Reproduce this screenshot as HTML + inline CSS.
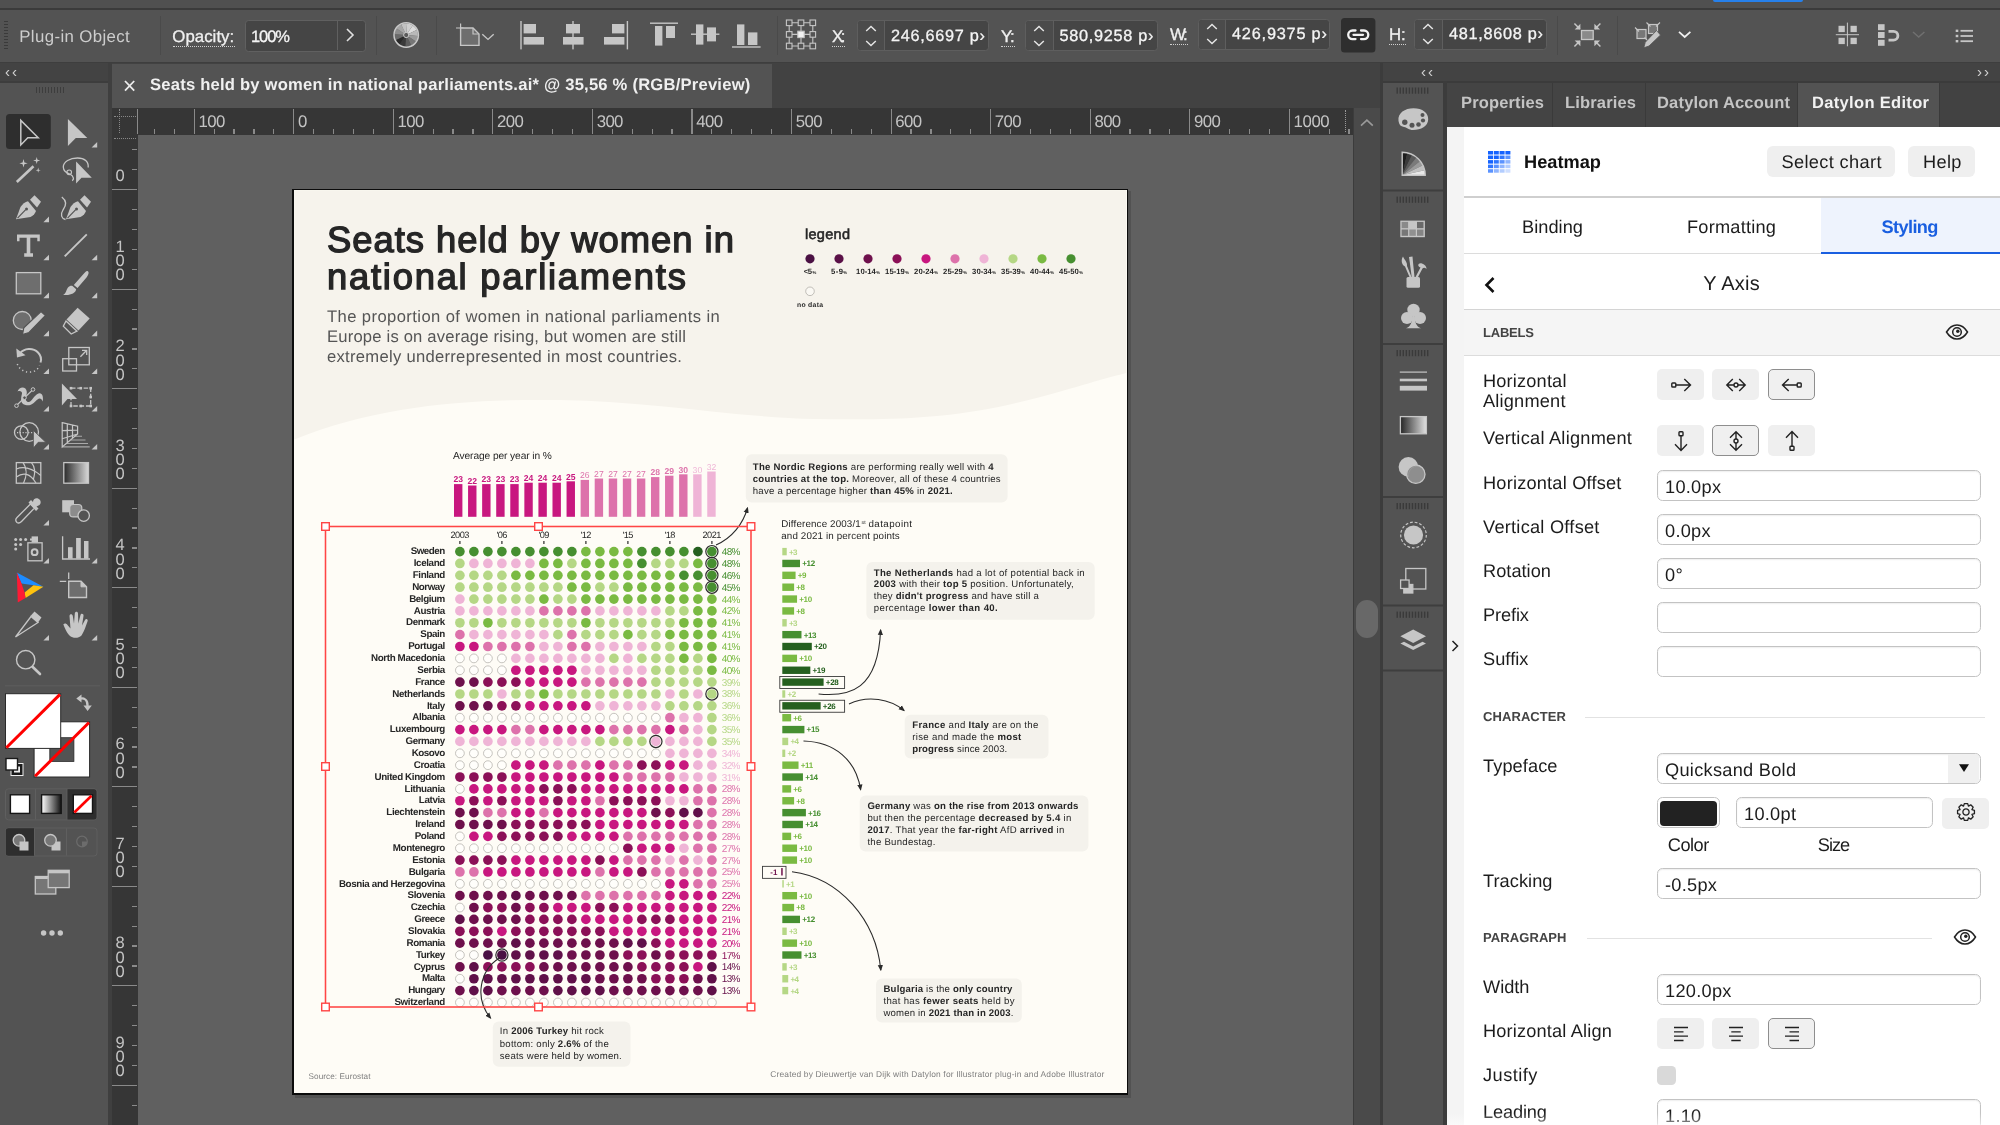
<!DOCTYPE html>
<html><head><meta charset="utf-8"><title>Illustrator</title>
<style>
html,body{margin:0;padding:0;background:#535353;}
body{width:2000px;height:1125px;position:relative;overflow:hidden;font-family:"Liberation Sans",sans-serif;text-rendering:geometricPrecision;}
#root{position:absolute;left:0;top:0;width:2000px;height:1125px;overflow:hidden;will-change:transform;transform:translateZ(0);}
.t{position:absolute;white-space:nowrap;}
.b{position:absolute;box-sizing:border-box;}
svg{overflow:visible;}
</style></head><body><div id="root">
<div class="b" style="left:0.00px;top:0.00px;width:2000.00px;height:9.00px;background:#505050;"></div>
<div class="b" style="left:0.00px;top:8.00px;width:2000.00px;height:2.00px;background:#3b3b3b;"></div>
<div class="b" style="left:0.00px;top:10.00px;width:2000.00px;height:52.00px;background:#535353;"></div>
<div class="b" style="left:0.00px;top:62.00px;width:2000.00px;height:1.00px;background:#3e3e3e;"></div>
<div class="b" style="left:1713.00px;top:0.00px;width:90.00px;height:2.00px;background:#2680eb;border-radius:0 0 2px 2px;"></div>
<div class="b" style="left:0.00px;top:63.00px;width:108.00px;height:1062.00px;background:#535353;"></div>
<div class="b" style="left:0.00px;top:62.50px;width:108.00px;height:18.60px;background:#434343;"></div>
<div class="b" style="left:0.00px;top:81.00px;width:108.00px;height:1.70px;background:#3d3d3d;"></div>
<div class="b" style="left:107.80px;top:63.00px;width:4.20px;height:1062.00px;background:#3f3f3f;"></div>
<div class="t" style="left:5.00px;top:65px;font-size:15.0px;line-height:15.0px;color:#d0d0d0;letter-spacing:2.009px;">‹‹</div>
<div class="b" style="left:36.00px;top:87.00px;width:30.00px;height:6.00px;background:repeating-linear-gradient(90deg,#3d3d3d 0 1.5px,transparent 1.5px 3px);"></div>
<div class="b" style="left:112.00px;top:63.00px;width:1269.00px;height:45.00px;background:#424242;"></div>
<div class="b" style="left:112.00px;top:64.00px;width:660.00px;height:44.00px;background:#535353;"></div>
<svg class="b" style="left:120px;top:76px" width="20" height="20"><path d="M5 5 L14.2 14.6 M14.2 5 L5 14.600" stroke="#ececec" stroke-width="1.8" fill="none"/></svg>
<div class="t" style="left:150.00px;top:77px;font-size:16.6px;line-height:16.6px;color:#f0f0f0;font-weight:bold;letter-spacing:0.216px;">Seats held by women in national parliaments.ai* @ 35,56 % (RGB/Preview)</div>
<div class="b" style="left:112.00px;top:108.20px;width:1241.00px;height:26.80px;background:#363636;"></div>
<div class="b" style="left:112.00px;top:135.00px;width:25.60px;height:990.00px;background:#363636;"></div>
<div class="b" style="left:137.60px;top:135.00px;width:1215.40px;height:990.00px;background:#606060;"></div>
<div class="b" style="left:114.00px;top:116.00px;width:22.00px;height:1.00px;border-top:1px dotted #888;"></div>
<div class="b" style="left:119.00px;top:109.00px;width:1.00px;height:24.00px;border-left:1px dotted #888;"></div>
<div class="b" style="left:114.00px;top:138.00px;width:22.00px;height:1.00px;border-top:1px dotted #888;"></div>
<div class="b" style="left:193.65px;top:109.20px;width:1.20px;height:25.30px;background:#8a8a8a;"></div>
<div class="t" style="left:198.45px;top:114px;font-size:16.8px;line-height:16.8px;color:#c4c4c4;letter-spacing:-0.591px;">100</div>
<div class="b" style="left:293.20px;top:109.20px;width:1.20px;height:25.30px;background:#8a8a8a;"></div>
<div class="t" style="left:298.00px;top:114px;font-size:16.8px;line-height:16.8px;color:#c4c4c4;">0</div>
<div class="b" style="left:392.75px;top:109.20px;width:1.20px;height:25.30px;background:#8a8a8a;"></div>
<div class="t" style="left:397.55px;top:114px;font-size:16.8px;line-height:16.8px;color:#c4c4c4;letter-spacing:-0.591px;">100</div>
<div class="b" style="left:492.30px;top:109.20px;width:1.20px;height:25.30px;background:#8a8a8a;"></div>
<div class="t" style="left:497.10px;top:114px;font-size:16.8px;line-height:16.8px;color:#c4c4c4;letter-spacing:-0.591px;">200</div>
<div class="b" style="left:591.85px;top:109.20px;width:1.20px;height:25.30px;background:#8a8a8a;"></div>
<div class="t" style="left:596.65px;top:114px;font-size:16.8px;line-height:16.8px;color:#c4c4c4;letter-spacing:-0.591px;">300</div>
<div class="b" style="left:691.40px;top:109.20px;width:1.20px;height:25.30px;background:#8a8a8a;"></div>
<div class="t" style="left:696.20px;top:114px;font-size:16.8px;line-height:16.8px;color:#c4c4c4;letter-spacing:-0.591px;">400</div>
<div class="b" style="left:790.95px;top:109.20px;width:1.20px;height:25.30px;background:#8a8a8a;"></div>
<div class="t" style="left:795.75px;top:114px;font-size:16.8px;line-height:16.8px;color:#c4c4c4;letter-spacing:-0.591px;">500</div>
<div class="b" style="left:890.50px;top:109.20px;width:1.20px;height:25.30px;background:#8a8a8a;"></div>
<div class="t" style="left:895.30px;top:114px;font-size:16.8px;line-height:16.8px;color:#c4c4c4;letter-spacing:-0.591px;">600</div>
<div class="b" style="left:990.05px;top:109.20px;width:1.20px;height:25.30px;background:#8a8a8a;"></div>
<div class="t" style="left:994.85px;top:114px;font-size:16.8px;line-height:16.8px;color:#c4c4c4;letter-spacing:-0.591px;">700</div>
<div class="b" style="left:1089.60px;top:109.20px;width:1.20px;height:25.30px;background:#8a8a8a;"></div>
<div class="t" style="left:1094.40px;top:114px;font-size:16.8px;line-height:16.8px;color:#c4c4c4;letter-spacing:-0.591px;">800</div>
<div class="b" style="left:1189.15px;top:109.20px;width:1.20px;height:25.30px;background:#8a8a8a;"></div>
<div class="t" style="left:1193.95px;top:114px;font-size:16.8px;line-height:16.8px;color:#c4c4c4;letter-spacing:-0.591px;">900</div>
<div class="b" style="left:1288.70px;top:109.20px;width:1.20px;height:25.30px;background:#8a8a8a;"></div>
<div class="t" style="left:1293.50px;top:114px;font-size:16.8px;line-height:16.8px;color:#c4c4c4;letter-spacing:-0.392px;">1000</div>
<div class="b" style="left:153.83px;top:129.20px;width:1.20px;height:5.30px;background:#8a8a8a;"></div>
<div class="b" style="left:173.74px;top:129.20px;width:1.20px;height:5.30px;background:#8a8a8a;"></div>
<div class="b" style="left:213.56px;top:129.20px;width:1.20px;height:5.30px;background:#8a8a8a;"></div>
<div class="b" style="left:233.47px;top:129.20px;width:1.20px;height:5.30px;background:#8a8a8a;"></div>
<div class="b" style="left:253.38px;top:129.20px;width:1.20px;height:5.30px;background:#8a8a8a;"></div>
<div class="b" style="left:273.29px;top:129.20px;width:1.20px;height:5.30px;background:#8a8a8a;"></div>
<div class="b" style="left:313.11px;top:129.20px;width:1.20px;height:5.30px;background:#8a8a8a;"></div>
<div class="b" style="left:333.02px;top:129.20px;width:1.20px;height:5.30px;background:#8a8a8a;"></div>
<div class="b" style="left:352.93px;top:129.20px;width:1.20px;height:5.30px;background:#8a8a8a;"></div>
<div class="b" style="left:372.84px;top:129.20px;width:1.20px;height:5.30px;background:#8a8a8a;"></div>
<div class="b" style="left:412.66px;top:129.20px;width:1.20px;height:5.30px;background:#8a8a8a;"></div>
<div class="b" style="left:432.57px;top:129.20px;width:1.20px;height:5.30px;background:#8a8a8a;"></div>
<div class="b" style="left:452.48px;top:129.20px;width:1.20px;height:5.30px;background:#8a8a8a;"></div>
<div class="b" style="left:472.39px;top:129.20px;width:1.20px;height:5.30px;background:#8a8a8a;"></div>
<div class="b" style="left:512.21px;top:129.20px;width:1.20px;height:5.30px;background:#8a8a8a;"></div>
<div class="b" style="left:532.12px;top:129.20px;width:1.20px;height:5.30px;background:#8a8a8a;"></div>
<div class="b" style="left:552.03px;top:129.20px;width:1.20px;height:5.30px;background:#8a8a8a;"></div>
<div class="b" style="left:571.94px;top:129.20px;width:1.20px;height:5.30px;background:#8a8a8a;"></div>
<div class="b" style="left:611.76px;top:129.20px;width:1.20px;height:5.30px;background:#8a8a8a;"></div>
<div class="b" style="left:631.67px;top:129.20px;width:1.20px;height:5.30px;background:#8a8a8a;"></div>
<div class="b" style="left:651.58px;top:129.20px;width:1.20px;height:5.30px;background:#8a8a8a;"></div>
<div class="b" style="left:671.49px;top:129.20px;width:1.20px;height:5.30px;background:#8a8a8a;"></div>
<div class="b" style="left:711.31px;top:129.20px;width:1.20px;height:5.30px;background:#8a8a8a;"></div>
<div class="b" style="left:731.22px;top:129.20px;width:1.20px;height:5.30px;background:#8a8a8a;"></div>
<div class="b" style="left:751.13px;top:129.20px;width:1.20px;height:5.30px;background:#8a8a8a;"></div>
<div class="b" style="left:771.04px;top:129.20px;width:1.20px;height:5.30px;background:#8a8a8a;"></div>
<div class="b" style="left:810.86px;top:129.20px;width:1.20px;height:5.30px;background:#8a8a8a;"></div>
<div class="b" style="left:830.77px;top:129.20px;width:1.20px;height:5.30px;background:#8a8a8a;"></div>
<div class="b" style="left:850.68px;top:129.20px;width:1.20px;height:5.30px;background:#8a8a8a;"></div>
<div class="b" style="left:870.59px;top:129.20px;width:1.20px;height:5.30px;background:#8a8a8a;"></div>
<div class="b" style="left:910.41px;top:129.20px;width:1.20px;height:5.30px;background:#8a8a8a;"></div>
<div class="b" style="left:930.32px;top:129.20px;width:1.20px;height:5.30px;background:#8a8a8a;"></div>
<div class="b" style="left:950.23px;top:129.20px;width:1.20px;height:5.30px;background:#8a8a8a;"></div>
<div class="b" style="left:970.14px;top:129.20px;width:1.20px;height:5.30px;background:#8a8a8a;"></div>
<div class="b" style="left:1009.96px;top:129.20px;width:1.20px;height:5.30px;background:#8a8a8a;"></div>
<div class="b" style="left:1029.87px;top:129.20px;width:1.20px;height:5.30px;background:#8a8a8a;"></div>
<div class="b" style="left:1049.78px;top:129.20px;width:1.20px;height:5.30px;background:#8a8a8a;"></div>
<div class="b" style="left:1069.69px;top:129.20px;width:1.20px;height:5.30px;background:#8a8a8a;"></div>
<div class="b" style="left:1109.51px;top:129.20px;width:1.20px;height:5.30px;background:#8a8a8a;"></div>
<div class="b" style="left:1129.42px;top:129.20px;width:1.20px;height:5.30px;background:#8a8a8a;"></div>
<div class="b" style="left:1149.33px;top:129.20px;width:1.20px;height:5.30px;background:#8a8a8a;"></div>
<div class="b" style="left:1169.24px;top:129.20px;width:1.20px;height:5.30px;background:#8a8a8a;"></div>
<div class="b" style="left:1209.06px;top:129.20px;width:1.20px;height:5.30px;background:#8a8a8a;"></div>
<div class="b" style="left:1228.97px;top:129.20px;width:1.20px;height:5.30px;background:#8a8a8a;"></div>
<div class="b" style="left:1248.88px;top:129.20px;width:1.20px;height:5.30px;background:#8a8a8a;"></div>
<div class="b" style="left:1268.79px;top:129.20px;width:1.20px;height:5.30px;background:#8a8a8a;"></div>
<div class="b" style="left:1308.61px;top:129.20px;width:1.20px;height:5.30px;background:#8a8a8a;"></div>
<div class="b" style="left:1328.52px;top:129.20px;width:1.20px;height:5.30px;background:#8a8a8a;"></div>
<div class="b" style="left:1348.43px;top:129.20px;width:1.20px;height:5.30px;background:#8a8a8a;"></div>
<div class="b" style="left:137.00px;top:109.00px;width:1.20px;height:25.00px;background:#8a8a8a;"></div>
<div class="b" style="left:1344.50px;top:110.00px;width:1.00px;height:22.00px;border-left:1.2px dotted #999;"></div>
<div class="b" style="left:1347.50px;top:129.20px;width:1.20px;height:5.30px;background:#8a8a8a;"></div>
<div class="b" style="left:112.00px;top:189.10px;width:25.00px;height:1.20px;background:#8a8a8a;"></div>
<div class="b" style="left:112.00px;top:288.62px;width:25.00px;height:1.20px;background:#8a8a8a;"></div>
<div class="b" style="left:112.00px;top:388.14px;width:25.00px;height:1.20px;background:#8a8a8a;"></div>
<div class="b" style="left:112.00px;top:487.66px;width:25.00px;height:1.20px;background:#8a8a8a;"></div>
<div class="b" style="left:112.00px;top:587.18px;width:25.00px;height:1.20px;background:#8a8a8a;"></div>
<div class="b" style="left:112.00px;top:686.70px;width:25.00px;height:1.20px;background:#8a8a8a;"></div>
<div class="b" style="left:112.00px;top:786.22px;width:25.00px;height:1.20px;background:#8a8a8a;"></div>
<div class="b" style="left:112.00px;top:885.74px;width:25.00px;height:1.20px;background:#8a8a8a;"></div>
<div class="b" style="left:112.00px;top:985.26px;width:25.00px;height:1.20px;background:#8a8a8a;"></div>
<div class="b" style="left:112.00px;top:1084.78px;width:25.00px;height:1.20px;background:#8a8a8a;"></div>
<div class="t" style="left:115.41px;top:168px;font-size:16.5px;line-height:16.5px;color:#c4c4c4;">0</div>
<div class="t" style="left:115.41px;top:239px;font-size:16.5px;line-height:16.5px;color:#c4c4c4;">1</div>
<div class="t" style="left:115.41px;top:253px;font-size:16.5px;line-height:16.5px;color:#c4c4c4;">0</div>
<div class="t" style="left:115.41px;top:267px;font-size:16.5px;line-height:16.5px;color:#c4c4c4;">0</div>
<div class="t" style="left:115.41px;top:338px;font-size:16.5px;line-height:16.5px;color:#c4c4c4;">2</div>
<div class="t" style="left:115.41px;top:353px;font-size:16.5px;line-height:16.5px;color:#c4c4c4;">0</div>
<div class="t" style="left:115.41px;top:367px;font-size:16.5px;line-height:16.5px;color:#c4c4c4;">0</div>
<div class="t" style="left:115.41px;top:438px;font-size:16.5px;line-height:16.5px;color:#c4c4c4;">3</div>
<div class="t" style="left:115.41px;top:452px;font-size:16.5px;line-height:16.5px;color:#c4c4c4;">0</div>
<div class="t" style="left:115.41px;top:466px;font-size:16.5px;line-height:16.5px;color:#c4c4c4;">0</div>
<div class="t" style="left:115.41px;top:537px;font-size:16.5px;line-height:16.5px;color:#c4c4c4;">4</div>
<div class="t" style="left:115.41px;top:552px;font-size:16.5px;line-height:16.5px;color:#c4c4c4;">0</div>
<div class="t" style="left:115.41px;top:566px;font-size:16.5px;line-height:16.5px;color:#c4c4c4;">0</div>
<div class="t" style="left:115.41px;top:637px;font-size:16.5px;line-height:16.5px;color:#c4c4c4;">5</div>
<div class="t" style="left:115.41px;top:651px;font-size:16.5px;line-height:16.5px;color:#c4c4c4;">0</div>
<div class="t" style="left:115.41px;top:665px;font-size:16.5px;line-height:16.5px;color:#c4c4c4;">0</div>
<div class="t" style="left:115.41px;top:736px;font-size:16.5px;line-height:16.5px;color:#c4c4c4;">6</div>
<div class="t" style="left:115.41px;top:751px;font-size:16.5px;line-height:16.5px;color:#c4c4c4;">0</div>
<div class="t" style="left:115.41px;top:765px;font-size:16.5px;line-height:16.5px;color:#c4c4c4;">0</div>
<div class="t" style="left:115.41px;top:836px;font-size:16.5px;line-height:16.5px;color:#c4c4c4;">7</div>
<div class="t" style="left:115.41px;top:850px;font-size:16.5px;line-height:16.5px;color:#c4c4c4;">0</div>
<div class="t" style="left:115.41px;top:864px;font-size:16.5px;line-height:16.5px;color:#c4c4c4;">0</div>
<div class="t" style="left:115.41px;top:935px;font-size:16.5px;line-height:16.5px;color:#c4c4c4;">8</div>
<div class="t" style="left:115.41px;top:950px;font-size:16.5px;line-height:16.5px;color:#c4c4c4;">0</div>
<div class="t" style="left:115.41px;top:964px;font-size:16.5px;line-height:16.5px;color:#c4c4c4;">0</div>
<div class="t" style="left:115.41px;top:1035px;font-size:16.5px;line-height:16.5px;color:#c4c4c4;">9</div>
<div class="t" style="left:115.41px;top:1049px;font-size:16.5px;line-height:16.5px;color:#c4c4c4;">0</div>
<div class="t" style="left:115.41px;top:1063px;font-size:16.5px;line-height:16.5px;color:#c4c4c4;">0</div>
<div class="b" style="left:132.00px;top:149.29px;width:5.00px;height:1.20px;background:#8a8a8a;"></div>
<div class="b" style="left:132.00px;top:169.20px;width:5.00px;height:1.20px;background:#8a8a8a;"></div>
<div class="b" style="left:132.00px;top:209.00px;width:5.00px;height:1.20px;background:#8a8a8a;"></div>
<div class="b" style="left:132.00px;top:228.91px;width:5.00px;height:1.20px;background:#8a8a8a;"></div>
<div class="b" style="left:132.00px;top:248.81px;width:5.00px;height:1.20px;background:#8a8a8a;"></div>
<div class="b" style="left:132.00px;top:268.72px;width:5.00px;height:1.20px;background:#8a8a8a;"></div>
<div class="b" style="left:132.00px;top:308.52px;width:5.00px;height:1.20px;background:#8a8a8a;"></div>
<div class="b" style="left:132.00px;top:328.43px;width:5.00px;height:1.20px;background:#8a8a8a;"></div>
<div class="b" style="left:132.00px;top:348.33px;width:5.00px;height:1.20px;background:#8a8a8a;"></div>
<div class="b" style="left:132.00px;top:368.24px;width:5.00px;height:1.20px;background:#8a8a8a;"></div>
<div class="b" style="left:132.00px;top:408.04px;width:5.00px;height:1.20px;background:#8a8a8a;"></div>
<div class="b" style="left:132.00px;top:427.95px;width:5.00px;height:1.20px;background:#8a8a8a;"></div>
<div class="b" style="left:132.00px;top:447.85px;width:5.00px;height:1.20px;background:#8a8a8a;"></div>
<div class="b" style="left:132.00px;top:467.76px;width:5.00px;height:1.20px;background:#8a8a8a;"></div>
<div class="b" style="left:132.00px;top:507.56px;width:5.00px;height:1.20px;background:#8a8a8a;"></div>
<div class="b" style="left:132.00px;top:527.47px;width:5.00px;height:1.20px;background:#8a8a8a;"></div>
<div class="b" style="left:132.00px;top:547.37px;width:5.00px;height:1.20px;background:#8a8a8a;"></div>
<div class="b" style="left:132.00px;top:567.28px;width:5.00px;height:1.20px;background:#8a8a8a;"></div>
<div class="b" style="left:132.00px;top:607.08px;width:5.00px;height:1.20px;background:#8a8a8a;"></div>
<div class="b" style="left:132.00px;top:626.99px;width:5.00px;height:1.20px;background:#8a8a8a;"></div>
<div class="b" style="left:132.00px;top:646.89px;width:5.00px;height:1.20px;background:#8a8a8a;"></div>
<div class="b" style="left:132.00px;top:666.80px;width:5.00px;height:1.20px;background:#8a8a8a;"></div>
<div class="b" style="left:132.00px;top:706.60px;width:5.00px;height:1.20px;background:#8a8a8a;"></div>
<div class="b" style="left:132.00px;top:726.51px;width:5.00px;height:1.20px;background:#8a8a8a;"></div>
<div class="b" style="left:132.00px;top:746.41px;width:5.00px;height:1.20px;background:#8a8a8a;"></div>
<div class="b" style="left:132.00px;top:766.32px;width:5.00px;height:1.20px;background:#8a8a8a;"></div>
<div class="b" style="left:132.00px;top:806.12px;width:5.00px;height:1.20px;background:#8a8a8a;"></div>
<div class="b" style="left:132.00px;top:826.03px;width:5.00px;height:1.20px;background:#8a8a8a;"></div>
<div class="b" style="left:132.00px;top:845.93px;width:5.00px;height:1.20px;background:#8a8a8a;"></div>
<div class="b" style="left:132.00px;top:865.84px;width:5.00px;height:1.20px;background:#8a8a8a;"></div>
<div class="b" style="left:132.00px;top:905.64px;width:5.00px;height:1.20px;background:#8a8a8a;"></div>
<div class="b" style="left:132.00px;top:925.55px;width:5.00px;height:1.20px;background:#8a8a8a;"></div>
<div class="b" style="left:132.00px;top:945.45px;width:5.00px;height:1.20px;background:#8a8a8a;"></div>
<div class="b" style="left:132.00px;top:965.36px;width:5.00px;height:1.20px;background:#8a8a8a;"></div>
<div class="b" style="left:132.00px;top:1005.16px;width:5.00px;height:1.20px;background:#8a8a8a;"></div>
<div class="b" style="left:132.00px;top:1025.07px;width:5.00px;height:1.20px;background:#8a8a8a;"></div>
<div class="b" style="left:132.00px;top:1044.97px;width:5.00px;height:1.20px;background:#8a8a8a;"></div>
<div class="b" style="left:132.00px;top:1064.88px;width:5.00px;height:1.20px;background:#8a8a8a;"></div>
<div class="b" style="left:132.00px;top:1104.68px;width:5.00px;height:1.20px;background:#8a8a8a;"></div>
<div class="b" style="left:132.00px;top:1124.59px;width:5.00px;height:1.20px;background:#8a8a8a;"></div>
<div class="b" style="left:1353.00px;top:108.00px;width:28.00px;height:1017.00px;background:#4a4a4a;"></div>
<div class="b" style="left:1353.00px;top:108.00px;width:1.00px;height:1017.00px;background:#3c3c3c;"></div>
<div class="b" style="left:1356.00px;top:600.00px;width:22.00px;height:38.00px;background:#686868;border-radius:11px;"></div>
<svg class="b" style="left:1359px;top:116px" width="16" height="12"><path d="M2 9.700 L7.900 4.200 L13.800 9.700" fill="none" stroke="#9a9a9a" stroke-width="1.6"/></svg>
<div class="b" style="left:1380.00px;top:63.00px;width:3.00px;height:1062.00px;background:#3c3c3c;"></div>
<div class="b" style="left:1383.00px;top:63.00px;width:59.50px;height:1062.00px;background:#535353;"></div>
<div class="b" style="left:1383.00px;top:63.00px;width:617.00px;height:18.30px;background:#434343;"></div>
<div class="b" style="left:1383.00px;top:81.20px;width:617.00px;height:1.60px;background:#3b3b3b;"></div>
<div class="b" style="left:1442.50px;top:81.00px;width:4.50px;height:1044.00px;background:#3c3c3c;"></div>
<div class="t" style="left:1421.00px;top:65px;font-size:15.0px;line-height:15.0px;color:#d0d0d0;letter-spacing:2.009px;">‹‹</div>
<div class="t" style="left:1977.00px;top:65px;font-size:15.0px;line-height:15.0px;color:#d0d0d0;letter-spacing:2.009px;">››</div>
<div class="b" style="left:1447.00px;top:82.80px;width:553.00px;height:44.20px;background:#424242;"></div>
<div class="b" style="left:1447.00px;top:82.80px;width:105.00px;height:44.20px;background:#444444;"></div>
<div class="b" style="left:1552.00px;top:82.80px;width:1.00px;height:44.20px;background:#3a3a3a;"></div>
<div class="b" style="left:1553.00px;top:82.80px;width:92.00px;height:44.20px;background:#444444;"></div>
<div class="b" style="left:1645.00px;top:82.80px;width:1.00px;height:44.20px;background:#3a3a3a;"></div>
<div class="b" style="left:1646.00px;top:82.80px;width:151.00px;height:44.20px;background:#444444;"></div>
<div class="b" style="left:1797.00px;top:82.80px;width:1.00px;height:44.20px;background:#3a3a3a;"></div>
<div class="b" style="left:1798.00px;top:82.80px;width:141.00px;height:44.20px;background:#535353;"></div>
<div class="b" style="left:1939.00px;top:82.80px;width:1.00px;height:44.20px;background:#3a3a3a;"></div>
<div class="t" style="left:1461.00px;top:95px;font-size:16.5px;line-height:16.5px;color:#c4c4c4;font-weight:bold;letter-spacing:0.154px;">Properties</div>
<div class="t" style="left:1565.00px;top:95px;font-size:16.5px;line-height:16.5px;color:#c4c4c4;font-weight:bold;letter-spacing:0.163px;">Libraries</div>
<div class="t" style="left:1657.00px;top:95px;font-size:16.5px;line-height:16.5px;color:#c4c4c4;font-weight:bold;letter-spacing:0.180px;">Datylon Account</div>
<div class="t" style="left:1812.00px;top:95px;font-size:16.5px;line-height:16.5px;color:#f2f2f2;font-weight:bold;letter-spacing:0.326px;">Datylon Editor</div>
<div class="b" style="left:4.00px;top:21.00px;width:4.00px;height:30.00px;background:repeating-linear-gradient(180deg,#3a3a3a 0 1.5px,transparent 1.5px 3px);"></div>
<div class="t" style="left:19.30px;top:29px;font-size:16.8px;line-height:16.8px;color:#cdcdcd;letter-spacing:0.383px;">Plug-in Object</div>
<div class="b" style="left:159.50px;top:16.00px;width:1.20px;height:39.00px;background:#4a4a4a;"></div>
<div class="b" style="left:376.00px;top:16.00px;width:1.20px;height:39.00px;background:#4a4a4a;"></div>
<div class="b" style="left:436.00px;top:16.00px;width:1.20px;height:39.00px;background:#4a4a4a;"></div>
<div class="b" style="left:776.50px;top:16.00px;width:1.20px;height:39.00px;background:#4a4a4a;"></div>
<div class="b" style="left:1557.00px;top:16.00px;width:1.20px;height:39.00px;background:#4a4a4a;"></div>
<div class="b" style="left:1616.50px;top:16.00px;width:1.20px;height:39.00px;background:#4a4a4a;"></div>
<div class="t" style="left:172.30px;top:29px;font-size:16.8px;line-height:16.8px;color:#f0f0f0;letter-spacing:0.054px;-webkit-text-stroke:0.3px #f0f0f0;">Opacity:</div>
<div class="b" style="left:172.50px;top:45.50px;width:62.00px;height:1.00px;border-top:1.2px dotted #d0d0d0;"></div>
<div class="b" style="left:244.50px;top:19.60px;width:121.00px;height:32.00px;background:#454545;border:1px solid #606060;border-radius:3.5px;"></div>
<div class="b" style="left:337.00px;top:20.50px;width:1.00px;height:29.50px;background:#606060;"></div>
<div class="t" style="left:251.00px;top:29px;font-size:16.5px;line-height:16.5px;color:#f4f4f4;letter-spacing:-1.067px;-webkit-text-stroke:0.3px #f4f4f4;">100%</div>
<svg class="b" style="left:344px;top:27px" width="12" height="16"><path d="M3 2 L9 8 L3 14" fill="none" stroke="#e0e0e0" stroke-width="1.6"/></svg>
<svg class="b" style="left:0;top:0" width="2000" height="62" viewBox="0 0 2000 62"><path d="M406.20 35.00 L412.75 25.43 A11.60 11.60 0 0 1 416.66 29.98 Z" fill="#dcdcdc"/><path d="M406.20 35.00 L416.66 29.98 A11.60 11.60 0 0 1 417.77 35.89 Z" fill="#b9b9b9"/><path d="M406.20 35.00 L417.77 35.89 A11.60 11.60 0 0 1 415.77 41.55 Z" fill="#9a9a9a"/><path d="M406.20 35.00 L415.77 41.55 A11.60 11.60 0 0 1 411.22 45.46 Z" fill="#777"/><path d="M406.20 35.00 L411.22 45.46 A11.60 11.60 0 0 1 405.31 46.57 Z" fill="#5d5d5d"/><path d="M406.20 35.00 L405.31 46.57 A11.60 11.60 0 0 1 399.65 44.57 Z" fill="#3a3a3a"/><path d="M406.20 35.00 L399.65 44.57 A11.60 11.60 0 0 1 395.74 40.02 Z" fill="#2a2a2a"/><path d="M406.20 35.00 L395.74 40.02 A11.60 11.60 0 0 1 394.63 34.11 Z" fill="#6a6a6a"/><path d="M406.20 35.00 L394.63 34.11 A11.60 11.60 0 0 1 396.63 28.45 Z" fill="#8d8d8d"/><path d="M406.20 35.00 L396.63 28.45 A11.60 11.60 0 0 1 401.18 24.54 Z" fill="#a6a6a6"/><path d="M406.20 35.00 L401.18 24.54 A11.60 11.60 0 0 1 407.09 23.43 Z" fill="#c2c2c2"/><path d="M406.20 35.00 L407.09 23.43 A11.60 11.60 0 0 1 412.75 25.43 Z" fill="#cfcfcf"/><circle cx="406.2" cy="35.0" r="12.2" fill="none" stroke="#c9c9c9" stroke-width="1.5"/><circle cx="406.2" cy="35.0" r="2.6" fill="#5a5a5a" stroke="#c9c9c9" stroke-width="1"/><path d="M460.6 23.5 V31 M456 28 H463.5" stroke="#c6c6c6" stroke-width="1.2" fill="none"/><path d="M460.6 28 H473 L479 34 V45.4 H460.6 Z" fill="#6e6e6e" stroke="#c6c6c6" stroke-width="1.4"/><path d="M473 28 V34 H479" fill="none" stroke="#c6c6c6" stroke-width="1.2"/><path d="M482.3 34.2 L488 39.4 L493.700 34.200" fill="none" stroke="#c6c6c6" stroke-width="1.4"/><rect x="520.3" y="21.0" width="1.4" height="28.4" fill="#c6c6c6"/><rect x="523.6" y="24.0" width="12.4" height="9.4" fill="#c6c6c6"/><rect x="523.6" y="37.0" width="20.4" height="7.6" fill="#c6c6c6"/><rect x="572.3" y="21.0" width="1.4" height="28.4" fill="#c6c6c6"/><rect x="566.0" y="24.0" width="14.0" height="9.4" fill="#c6c6c6"/><rect x="563.0" y="37.0" width="20.6" height="7.6" fill="#c6c6c6"/><rect x="626.7" y="21.0" width="1.4" height="28.4" fill="#c6c6c6"/><rect x="612.0" y="24.0" width="12.4" height="9.4" fill="#c6c6c6"/><rect x="604.0" y="37.0" width="20.4" height="7.6" fill="#c6c6c6"/><rect x="650.0" y="22.5" width="28.0" height="1.4" fill="#c6c6c6"/><rect x="655.0" y="26.0" width="7.4" height="19.6" fill="#c6c6c6"/><rect x="666.0" y="26.0" width="9.0" height="12.0" fill="#c6c6c6"/><rect x="691.0" y="33.5" width="28.4" height="1.4" fill="#c6c6c6"/><rect x="696.0" y="24.4" width="7.4" height="20.2" fill="#c6c6c6"/><rect x="707.0" y="27.4" width="9.0" height="14.0" fill="#c6c6c6"/><rect x="732.0" y="46.3" width="28.6" height="1.4" fill="#c6c6c6"/><rect x="737.0" y="24.4" width="7.4" height="20.6" fill="#c6c6c6"/><rect x="748.0" y="32.4" width="9.4" height="12.6" fill="#c6c6c6"/><path d="M789.2 22.8 H812.8 V46 H789.2 Z M801 22.8 V46 M789.2 34.4 H812.8" fill="none" stroke="#c6c6c6" stroke-width="1.1"/><rect x="786.4" y="20.0" width="5.6" height="5.6" fill="#535353" stroke="#c6c6c6" stroke-width="1.1"/><rect x="786.4" y="31.6" width="5.6" height="5.6" fill="#535353" stroke="#c6c6c6" stroke-width="1.1"/><rect x="786.4" y="43.2" width="5.6" height="5.6" fill="#535353" stroke="#c6c6c6" stroke-width="1.1"/><rect x="798.2" y="20.0" width="5.6" height="5.6" fill="#535353" stroke="#c6c6c6" stroke-width="1.1"/><rect x="797.8" y="31.2" width="6.4" height="6.4" fill="#f2f2f2" stroke="#c6c6c6" stroke-width="1.1"/><rect x="798.2" y="43.2" width="5.6" height="5.6" fill="#535353" stroke="#c6c6c6" stroke-width="1.1"/><rect x="810.0" y="20.0" width="5.6" height="5.6" fill="#535353" stroke="#c6c6c6" stroke-width="1.1"/><rect x="810.0" y="31.6" width="5.6" height="5.6" fill="#535353" stroke="#c6c6c6" stroke-width="1.1"/><rect x="810.0" y="43.2" width="5.6" height="5.6" fill="#535353" stroke="#c6c6c6" stroke-width="1.1"/><rect x="1341" y="18" width="34.400" height="34.400" rx="3.5" fill="#2e2e2e"/><path d="M1355.5 30.500 H1352.500 A4.300 4.300 0 0 0 1352.500 39.100 H1355.500 M1361 30.500 H1364 A4.300 4.300 0 0 1 1364 39.100 H1361 M1353.500 34.800 H1363" fill="none" stroke="#f2f2f2" stroke-width="2.3" stroke-linecap="round"/><rect x="1581.5" y="30.500" width="11.700" height="9" fill="#8a8a8a" stroke="#c6c6c6" stroke-width="1.300"/><path d="M1574.4 23.5 L1579.9 29.0" stroke="#c6c6c6" stroke-width="1.5" fill="none"/><path d="M1580.4 29.5 L1574.7 29.5 L1580.4 23.8 Z" fill="#c6c6c6"/><path d="M1600.4 23.5 L1594.9 29.0" stroke="#c6c6c6" stroke-width="1.5" fill="none"/><path d="M1594.4 29.5 L1600.1 29.5 L1594.4 23.8 Z" fill="#c6c6c6"/><path d="M1574.4 46.5 L1579.9 41.0" stroke="#c6c6c6" stroke-width="1.5" fill="none"/><path d="M1580.4 40.5 L1574.7 40.5 L1580.4 46.2 Z" fill="#c6c6c6"/><path d="M1600.4 46.5 L1594.9 41.0" stroke="#c6c6c6" stroke-width="1.5" fill="none"/><path d="M1594.4 40.5 L1600.1 40.5 L1594.4 46.2 Z" fill="#c6c6c6"/><rect x="1637" y="29.500" width="9" height="9" fill="#777" stroke="#c6c6c6" stroke-width="1.200"/><rect x="1648.5" y="24.500" width="9" height="9" fill="#777" stroke="#c6c6c6" stroke-width="1.200"/><path d="M1635 27.500 L1639 31.500 M1648 41 L1644.500 37.500 M1646.500 22.500 L1650.500 26.500 M1660 22.500 L1656 26.500" stroke="#c6c6c6" stroke-width="1.100" fill="none"/><path d="M1656.500 30.500 L1660.500 35 L1649 46 L1643.800 47.800 L1645.300 42.200 Z" fill="#c6c6c6" stroke="#535353" stroke-width="0.800"/><path d="M1679 31.800 L1684.700 37 L1690.400 31.800" fill="none" stroke="#f0f0f0" stroke-width="1.700"/><rect x="1838.5" y="25.8" width="6.3" height="6.3" fill="#c6c6c6"/><rect x="1838.5" y="37.8" width="6.3" height="6.3" fill="#c6c6c6"/><rect x="1850.5" y="25.8" width="6.3" height="6.3" fill="#c6c6c6"/><rect x="1850.5" y="37.8" width="6.3" height="6.3" fill="#c6c6c6"/><path d="M1847.400 22.600 V46.300 M1835.800 34.700 H1859" stroke="#c6c6c6" stroke-width="1" fill="none"/><rect x="1878.0" y="24.2" width="6.6" height="6.0" fill="#c6c6c6"/><rect x="1878.0" y="32.0" width="6.6" height="6.0" fill="#c6c6c6"/><rect x="1878.0" y="39.8" width="6.6" height="6.0" fill="#c6c6c6"/><path d="M1888.500 31.300 H1893.500 A4.400 4.400 0 0 1 1893.500 40.100 H1888.500" fill="none" stroke="#c6c6c6" stroke-width="2.800"/><path d="M1913 32 L1918.700 37 L1924.400 32" fill="none" stroke="#707070" stroke-width="1.500"/><rect x="1955.7" y="29.6" width="2.6" height="2.4" fill="#c6c6c6"/><rect x="1960.5" y="29.9" width="12.5" height="1.8" fill="#c6c6c6"/><rect x="1955.7" y="34.8" width="2.6" height="2.4" fill="#c6c6c6"/><rect x="1960.5" y="35.1" width="12.5" height="1.8" fill="#c6c6c6"/><rect x="1955.7" y="40.0" width="2.6" height="2.4" fill="#c6c6c6"/><rect x="1960.5" y="40.3" width="12.5" height="1.8" fill="#c6c6c6"/></svg>
<div class="t" style="left:832.00px;top:29px;font-size:16.8px;line-height:16.8px;color:#f0f0f0;letter-spacing:-2.473px;-webkit-text-stroke:0.35px #f0f0f0;">X:</div>
<div class="b" style="left:832.00px;top:45.80px;width:13.40px;height:1.00px;border-top:1.2px dotted #d0d0d0;"></div>
<div class="b" style="left:856.60px;top:20.40px;width:132.00px;height:31.00px;background:#454545;border:1px solid #5e5e5e;border-radius:3.5px;"></div>
<div class="b" style="left:857.60px;top:21.40px;width:26.80px;height:29.00px;background:#4b4b4b;border-radius:3px 0 0 3px;"></div>
<div class="b" style="left:884.40px;top:21.40px;width:1.00px;height:29.00px;background:#5e5e5e;"></div>
<svg class="b" style="left:863.5px;top:24.0px" width="14" height="24"><path d="M2.2 7 L7 2.400 L11.800 7 M2.200 17 L7 21.600 L11.800 17" fill="none" stroke="#e6e6e6" stroke-width="1.400"/></svg>
<div class="t" style="left:891.00px;top:28px;font-size:16.3px;line-height:16.3px;color:#f4f4f4;letter-spacing:0.699px;-webkit-text-stroke:0.3px #f4f4f4;">246,6697 p›</div>
<div class="t" style="left:1001.00px;top:29px;font-size:16.8px;line-height:16.8px;color:#f0f0f0;letter-spacing:-1.347px;-webkit-text-stroke:0.35px #f0f0f0;">Y:</div>
<div class="b" style="left:1001.00px;top:45.80px;width:13.60px;height:1.00px;border-top:1.2px dotted #d0d0d0;"></div>
<div class="b" style="left:1025.40px;top:20.40px;width:132.60px;height:31.00px;background:#454545;border:1px solid #5e5e5e;border-radius:3.5px;"></div>
<div class="b" style="left:1026.40px;top:21.40px;width:26.60px;height:29.00px;background:#4b4b4b;border-radius:3px 0 0 3px;"></div>
<div class="b" style="left:1053.00px;top:21.40px;width:1.00px;height:29.00px;background:#5e5e5e;"></div>
<svg class="b" style="left:1032.2px;top:24.0px" width="14" height="24"><path d="M2.2 7 L7 2.400 L11.800 7 M2.200 17 L7 21.600 L11.800 17" fill="none" stroke="#e6e6e6" stroke-width="1.400"/></svg>
<div class="t" style="left:1059.50px;top:28px;font-size:16.3px;line-height:16.3px;color:#f4f4f4;letter-spacing:0.699px;-webkit-text-stroke:0.3px #f4f4f4;">580,9258 p›</div>
<div class="t" style="left:1170.00px;top:27px;font-size:16.8px;line-height:16.8px;color:#f0f0f0;letter-spacing:-2.620px;-webkit-text-stroke:0.35px #f0f0f0;">W:</div>
<div class="b" style="left:1170.00px;top:44.20px;width:17.60px;height:1.00px;border-top:1.2px dotted #d0d0d0;"></div>
<div class="b" style="left:1197.60px;top:18.80px;width:132.80px;height:31.00px;background:#454545;border:1px solid #5e5e5e;border-radius:3.5px;"></div>
<div class="b" style="left:1198.60px;top:19.80px;width:26.80px;height:29.00px;background:#4b4b4b;border-radius:3px 0 0 3px;"></div>
<div class="b" style="left:1225.40px;top:19.80px;width:1.00px;height:29.00px;background:#5e5e5e;"></div>
<svg class="b" style="left:1204.5px;top:22.4px" width="14" height="24"><path d="M2.2 7 L7 2.400 L11.800 7 M2.200 17 L7 21.600 L11.800 17" fill="none" stroke="#e6e6e6" stroke-width="1.400"/></svg>
<div class="t" style="left:1232.00px;top:26px;font-size:16.3px;line-height:16.3px;color:#f4f4f4;letter-spacing:0.799px;-webkit-text-stroke:0.3px #f4f4f4;">426,9375 p›</div>
<div class="t" style="left:1389.00px;top:27px;font-size:16.8px;line-height:16.8px;color:#f0f0f0;letter-spacing:-0.200px;-webkit-text-stroke:0.35px #f0f0f0;">H:</div>
<div class="b" style="left:1389.00px;top:44.20px;width:16.60px;height:1.00px;border-top:1.2px dotted #d0d0d0;"></div>
<div class="b" style="left:1414.00px;top:18.80px;width:133.40px;height:31.00px;background:#454545;border:1px solid #5e5e5e;border-radius:3.5px;"></div>
<div class="b" style="left:1415.00px;top:19.80px;width:27.00px;height:29.00px;background:#4b4b4b;border-radius:3px 0 0 3px;"></div>
<div class="b" style="left:1442.00px;top:19.80px;width:1.00px;height:29.00px;background:#5e5e5e;"></div>
<svg class="b" style="left:1421.0px;top:22.4px" width="14" height="24"><path d="M2.2 7 L7 2.400 L11.800 7 M2.200 17 L7 21.600 L11.800 17" fill="none" stroke="#e6e6e6" stroke-width="1.400"/></svg>
<div class="t" style="left:1449.00px;top:26px;font-size:16.3px;line-height:16.3px;color:#f4f4f4;letter-spacing:0.699px;-webkit-text-stroke:0.3px #f4f4f4;">481,8608 p›</div>
<svg class="b" style="left:0;top:0" width="110" height="1000" viewBox="0 0 110 1000"><rect x="6" y="114" width="44.800" height="35" rx="3.5" fill="#2e2e2e"/><path d="M20.800 120.400 V145 L27.800 137.800 H38.200 Z" fill="none" stroke="#c6c6c6" stroke-width="1.500" stroke-linejoin="miter"/><path d="M67.900 119 V146 L75.800 138 H87.300 Z" fill="#c6c6c6"/><path d="M97.2 147.6 L97.2 142.0 L91.6 147.6 Z" fill="#c6c6c6"/><path d="M16.800 182 L33.500 166.300" stroke="#c6c6c6" stroke-width="2.600" fill="none" stroke-linecap="butt"/><path d="M23.50 159.10 L24.42 162.38 L27.70 163.30 L24.42 164.22 L23.50 167.50 L22.58 164.22 L19.30 163.30 L22.58 162.38 Z" fill="#c6c6c6"/><path d="M36.70 156.90 L37.49 159.71 L40.30 160.50 L37.49 161.29 L36.70 164.10 L35.91 161.29 L33.10 160.50 L35.91 159.71 Z" fill="#c6c6c6"/><path d="M38.20 167.60 L38.77 169.63 L40.80 170.20 L38.77 170.77 L38.20 172.80 L37.63 170.77 L35.60 170.20 L37.63 169.63 Z" fill="#c6c6c6"/><path d="M76.100 161.400 V183.400 L81.500 177.700 H91.800 Z" fill="#c6c6c6"/><path d="M72 180.500 C74.500 180 73.500 176 70.500 174.500 C66 172.500 63.300 171 63.300 167 C63.300 161.500 70 158 77.500 158 C84.500 158 88.800 161.500 88.200 167.500" fill="none" stroke="#c6c6c6" stroke-width="1.300"/><circle cx="69.200" cy="172.300" r="2.300" fill="none" stroke="#c6c6c6" stroke-width="1.100"/><path d="M16.0 219.300 L20.5 207 C22.5 204 25.0 202 28.0 201.300 L36.0 211 C35.0 213.500 33.5 215.500 30.5 217 Z" fill="#c6c6c6"/><path d="M17.5 218.200 L25.5 209.800" stroke="#535353" stroke-width="1.200"/><circle cx="26.5" cy="209" r="1.500" fill="#535353"/><path d="M30.0 199.800 L34.5 195.300 L41.0 201.800 L37.0 207.500 Z" fill="#c6c6c6"/><path d="M49.0 222.2 L49.0 216.6 L43.4 222.2 Z" fill="#c6c6c6"/><path d="M66.0 219.300 L70.5 207 C72.5 204 75.0 202 78.0 201.300 L86.0 211 C85.0 213.500 83.5 215.500 80.5 217 Z" fill="#c6c6c6"/><path d="M67.5 218.200 L75.5 209.800" stroke="#535353" stroke-width="1.200"/><circle cx="76.5" cy="209" r="1.500" fill="#535353"/><path d="M80.0 199.800 L84.5 195.300 L91.0 201.800 L87.0 207.500 Z" fill="#c6c6c6"/><path d="M61.800 197 C67 201 66 206 63 210 C60 214.500 61.500 218.500 65.500 219.500" fill="none" stroke="#c6c6c6" stroke-width="1.300"/><path d="M17 234.600 H39.800 V241.300 H37.300 V237.800 H30.300 V253.200 H33 V256.700 H24.200 V253.200 H26.700 V237.800 H19.500 V241.300 H17 Z" fill="#c6c6c6"/><path d="M49.0 260.3 L49.0 254.7 L43.4 260.3 Z" fill="#c6c6c6"/><path d="M64.700 256.300 L86.800 234.400" stroke="#c6c6c6" stroke-width="1.900"/><path d="M97.2 260.3 L97.2 254.7 L91.6 260.3 Z" fill="#c6c6c6"/><rect x="16.300" y="272.600" width="24.500" height="21.200" fill="#6e6e6e" stroke="#c6c6c6" stroke-width="1.300"/><path d="M49.0 298.2 L49.0 292.6 L43.4 298.2 Z" fill="#c6c6c6"/><path d="M87.500 271 C89.500 272 88.500 275 86.500 277.500 L77.500 288 L73.800 285 L83.500 274 C85 272 86.500 270.500 87.500 271 Z" fill="#c6c6c6"/><path d="M72.800 286.200 L76.200 289.300 C75.500 293.500 70 295.800 63 294.800 C66.500 293.500 66 290 68 287.500 C69.500 285.800 71.500 285.500 72.800 286.200 Z" fill="#c6c6c6"/><path d="M97.2 298.2 L97.2 292.6 L91.6 298.2 Z" fill="#c6c6c6"/><circle cx="22.300" cy="320.500" r="9" fill="#6e6e6e" stroke="#c6c6c6" stroke-width="1.300"/><path d="M41 311.500 L45.500 315.500 L29 332.500 L22.500 334.500 L23.800 327.800 Z" fill="#c6c6c6" stroke="#535353" stroke-width="1.200"/><path d="M49.0 336.2 L49.0 330.6 L43.4 336.2 Z" fill="#c6c6c6"/><path d="M77.600 307.700 L89.700 318.600 L78.500 330.500 L66.500 319.500 Z" fill="#c6c6c6"/><path d="M66 321 L77 331.200 L71.200 334 L63.300 326.200 Z" fill="none" stroke="#c6c6c6" stroke-width="1.300"/><path d="M97.2 336.2 L97.2 330.6 L91.6 336.2 Z" fill="#c6c6c6"/><path d="M20 353.500 C24 348 33 347.500 38 352.500 C41 355.500 41.500 359.500 40.500 362.500" fill="none" stroke="#c6c6c6" stroke-width="2"/><path d="M16.300 348.500 L17 357.500 L25.500 355.300 Z" fill="#c6c6c6"/><path d="M17.300 364 C19.500 370.500 27 373.500 33.500 371.500 C36.500 370.500 38.500 368 39.500 365.500" fill="none" stroke="#c6c6c6" stroke-width="1.500" stroke-dasharray="1.200 2.800"/><path d="M49.0 374.0 L49.0 368.4 L43.4 374.0 Z" fill="#c6c6c6"/><rect x="68.800" y="347.500" width="20.500" height="17.300" fill="none" stroke="#c6c6c6" stroke-width="1.300"/><rect x="62.700" y="358.700" width="13.800" height="12.300" fill="none" stroke="#c6c6c6" stroke-width="1.300"/><path d="M80.400 356.800 L86 351" stroke="#c6c6c6" stroke-width="1.300"/><path d="M82 350.300 H86.700 V355" fill="none" stroke="#c6c6c6" stroke-width="1.300"/><path d="M97.2 374.0 L97.2 368.4 L91.6 374.0 Z" fill="#c6c6c6"/><path d="M17.500 391.500 C19.500 386 26.500 386.500 26.800 392 C27 396 24 399 27 401.500 C31 404.500 33.500 395 38.500 393.500 C42.500 392.500 43.500 397 42.800 401.500 C41.500 399 40 397.500 37.500 399.500 C34.500 402 31.500 406.500 25.500 405 C19 403.500 21.500 396.500 22 393.500 C22.300 391.500 20 390.500 17.500 391.500 Z" fill="#c6c6c6"/><path d="M16.500 405.500 L33 389.500" stroke="#c6c6c6" stroke-width="1.100"/><circle cx="16.500" cy="405.700" r="1.800" fill="#535353" stroke="#c6c6c6" stroke-width="1"/><circle cx="33" cy="389.500" r="1.800" fill="#535353" stroke="#c6c6c6" stroke-width="1"/><circle cx="24.500" cy="397.700" r="1.800" fill="#535353" stroke="#c6c6c6" stroke-width="1"/><path d="M49.0 411.6 L49.0 406.0 L43.4 411.6 Z" fill="#c6c6c6"/><path d="M61.900 383.500 V405.500 L67.500 399 H77 Z" fill="#c6c6c6"/><path d="M71 388.200 H90.700 V406 H71 V398" fill="none" stroke="#c6c6c6" stroke-width="1.300" stroke-dasharray="4.500 1.800"/><rect x="69.7" y="386.9" width="2.600" height="2.600" fill="#c6c6c6"/><rect x="79.5" y="386.9" width="2.600" height="2.600" fill="#c6c6c6"/><rect x="89.4" y="386.9" width="2.600" height="2.600" fill="#c6c6c6"/><rect x="89.4" y="395.7" width="2.600" height="2.600" fill="#c6c6c6"/><rect x="89.4" y="404.7" width="2.600" height="2.600" fill="#c6c6c6"/><rect x="79.5" y="404.7" width="2.600" height="2.600" fill="#c6c6c6"/><rect x="69.7" y="404.7" width="2.600" height="2.600" fill="#c6c6c6"/><path d="M97.2 411.6 L97.2 406.0 L91.6 411.6 Z" fill="#c6c6c6"/><circle cx="29.200" cy="432" r="9.300" fill="none" stroke="#c6c6c6" stroke-width="1.300"/><circle cx="21.300" cy="432.600" r="6.800" fill="none" stroke="#c6c6c6" stroke-width="1.300"/><path d="M17 432.600 H33" stroke="#c6c6c6" stroke-width="1.200" stroke-dasharray="1.200 1.600"/><path d="M33.400 430.500 V448 L38.200 442.300 H45.800 Z" fill="#c6c6c6" stroke="#535353" stroke-width="0.800"/><path d="M49.0 449.6 L49.0 444.0 L43.4 449.6 Z" fill="#c6c6c6"/><path d="M62.200 422.700 L77.600 426.200 V434 L62.200 446.900 Z M62.200 430.700 L77.600 430 M62.200 438.800 L77.600 434 M67.300 423.900 V442.600 M72.500 425 V438.300" fill="none" stroke="#c6c6c6" stroke-width="1.200"/><path d="M75 436.300 H82 M71 440 H85.500 M67 443.500 H88 M62.200 446.900 H89.700" fill="none" stroke="#c6c6c6" stroke-width="1.100" opacity="0.750"/><path d="M97.2 449.6 L97.2 444.0 L91.6 449.6 Z" fill="#c6c6c6"/><rect x="16.300" y="462.600" width="24.500" height="20.600" fill="none" stroke="#c6c6c6" stroke-width="1.300"/><path d="M16.300 469 C24 466 33 469 40.800 475.500 M16.300 477 C23 472 30 473 36 483 M23 462.600 C27 468 27 476 23.500 483.200 M31.500 462.600 C36 468 35 474 33.500 479" fill="none" stroke="#c6c6c6" stroke-width="1.200"/><defs><linearGradient id="tg" x1="0" x2="1" y1="0" y2="0"><stop offset="0" stop-color="#2a2a2a"/><stop offset="1" stop-color="#d8d8d8"/></linearGradient><linearGradient id="tg2" x1="0" x2="1" y1="0" y2="0"><stop offset="0" stop-color="#ffffff"/><stop offset="1" stop-color="#111"/></linearGradient></defs><rect x="63.800" y="462.600" width="24.700" height="20.600" fill="url(#tg)" stroke="#c6c6c6" stroke-width="1.300"/><path d="M17 522.500 C15.500 521 15.500 519 17 517.500 L30.500 504 L34.500 508 L21.500 521.500 C20 523 18.500 523.500 17 522.500 Z" fill="#535353" stroke="#c6c6c6" stroke-width="1.300"/><path d="M28.500 502.500 L31 500 L33 502 C33 499.500 35.500 497.500 38 498.500 C41 499.800 41.500 503 39.500 505 L36.500 506.500 L38.500 508.500 L36 511 Z" fill="#c6c6c6"/><path d="M49.0 525.6 L49.0 520.0 L43.4 525.6 Z" fill="#c6c6c6"/><rect x="62.200" y="500.200" width="11.800" height="12.100" fill="#c6c6c6"/><rect x="69.700" y="504.500" width="12.100" height="12.400" rx="3.500" fill="#8c8c8c" stroke="#c6c6c6" stroke-width="1.200"/><circle cx="83.700" cy="515.600" r="5.700" fill="#535353" stroke="#c6c6c6" stroke-width="1.300"/><rect x="27.900" y="542.800" width="14.200" height="18" fill="none" stroke="#c6c6c6" stroke-width="1.300"/><rect x="31.600" y="536.400" width="6.400" height="6" fill="#c6c6c6"/><rect x="30" y="538.500" width="3" height="2" fill="#c6c6c6"/><circle cx="34.600" cy="552.200" r="2.900" fill="none" stroke="#c6c6c6" stroke-width="2"/><circle cx="15.7" cy="539.4" r="1.500" fill="#c6c6c6"/><circle cx="20.6" cy="539.4" r="1.500" fill="#c6c6c6"/><circle cx="25.6" cy="539.4" r="1.500" fill="#c6c6c6"/><circle cx="15.7" cy="544.4" r="1.500" fill="#c6c6c6"/><circle cx="20.6" cy="544.4" r="1.500" fill="#c6c6c6"/><circle cx="15.7" cy="549.0" r="1.500" fill="#c6c6c6"/><path d="M49.0 563.6 L49.0 558.0 L43.4 563.6 Z" fill="#c6c6c6"/><path d="M62.600 536.200 V559 H90" fill="none" stroke="#c6c6c6" stroke-width="1.300"/><rect x="68" y="547.200" width="4.600" height="11.500" fill="#c6c6c6"/><rect x="76.100" y="538" width="4.700" height="20.700" fill="#c6c6c6"/><rect x="84" y="541" width="4.500" height="17.700" fill="#c6c6c6"/><path d="M97.2 563.6 L97.2 558.0 L91.6 563.6 Z" fill="#c6c6c6"/><path d="M16.800 572.500 L43.400 586.800 L33.500 585.200 L21.500 583.500 Z" fill="#1e8cff"/><path d="M43.400 586.800 L25.500 598 L24.600 592.500 L33.500 585.200 Z" fill="#ffc20e"/><path d="M16.800 572.500 L21.500 583.500 L24.600 592.500 L25.500 598 L17.800 602.400 Z" fill="#ff1a35"/><path d="M68.700 572.500 V579 M59.800 581.300 H66.200" stroke="#c6c6c6" stroke-width="1.300"/><path d="M68.700 581.300 H81 L86.500 586.800 V597.500 H68.700 Z" fill="#6e6e6e" stroke="#c6c6c6" stroke-width="1.400"/><path d="M81 581.300 V586.800 H86.500" fill="#c6c6c6" stroke="#c6c6c6" stroke-width="1"/><path d="M15.500 637 L31 616.500 L38 622.500 Z" fill="none" stroke="#c6c6c6" stroke-width="1.300"/><path d="M30.500 616 L34.500 611.500 L41.500 617.500 L38 622.500 Z" fill="#c6c6c6"/><path d="M49.0 640.6 L49.0 635.0 L43.4 640.6 Z" fill="#c6c6c6"/><path d="M70 636 C66 632 65 628 63.300 624.500 C64.500 623 66.500 623.500 67.500 625 L70.500 628.500 L69.500 616 C69.500 613.500 72.500 613.500 72.800 616 L74 623.500 L74.800 613.500 C75 611 78 611 78 613.500 L78.300 623.500 L80.500 615 C81 612.800 84 613.500 83.500 616 L82 625.500 L85 620 C86 618 88.500 619 87.500 621.500 C85.500 626.500 84.500 631 81.500 635.500 C78.500 638.500 73 638.500 70 636 Z" fill="#c6c6c6"/><path d="M97.2 640.6 L97.2 635.0 L91.6 640.6 Z" fill="#c6c6c6"/><circle cx="25.700" cy="659.700" r="9.200" fill="none" stroke="#c6c6c6" stroke-width="1.400"/><path d="M32.500 666.800 L40 674" stroke="#c6c6c6" stroke-width="2.600" stroke-linecap="round"/><rect x="5" y="685.300" width="95" height="1" fill="#5f5f5f"/><rect x="34.100" y="721.800" width="55.500" height="55.200" fill="#fff" stroke="#2a2a2a" stroke-width="1"/><rect x="49.800" y="737.700" width="24.100" height="23.700" fill="#535353" stroke="#2a2a2a" stroke-width="0.800"/><path d="M35 776.300 L89 722.500" stroke="#ff0000" stroke-width="3"/><rect x="5.500" y="693.700" width="55.200" height="54.700" fill="#fff" stroke="#2a2a2a" stroke-width="1"/><path d="M6.300 747.700 L60 694.400" stroke="#ff0000" stroke-width="3"/><path d="M79 699 C84 697 88 700 87.500 706" fill="none" stroke="#c6c6c6" stroke-width="2.200"/><path d="M76.300 698.500 L81.500 694.500 L81.500 702.500 Z M83.500 705.500 H91.800 L87.600 711 Z" fill="#c6c6c6"/><rect x="11" y="763.500" width="12" height="12" fill="#1a1a1a" stroke="#eee" stroke-width="1"/><rect x="14" y="766.500" width="6" height="6" fill="#eee"/><rect x="6" y="758.500" width="11.500" height="11.500" fill="#fff" stroke="#1a1a1a" stroke-width="1.400"/><rect x="5.500" y="788.800" width="91.500" height="31.100" rx="3" fill="none" stroke="#5f5f5f" stroke-width="1"/><path d="M35.500 789 V819.500 M67 789 V819.500" stroke="#5f5f5f" stroke-width="1"/><path d="M67.500 789.300 H94 a2.500 2.500 0 0 1 2.500 2.500 V817 a2.500 2.500 0 0 1 -2.500 2.500 H67.500 Z" fill="#2e2e2e"/><rect x="10.400" y="794.800" width="19.200" height="18.600" fill="#fff" stroke="#161616" stroke-width="1.400"/><rect x="41.600" y="794.800" width="19.600" height="18.600" fill="url(#tg2)" stroke="#161616" stroke-width="1.400"/><rect x="73.300" y="794.800" width="19.200" height="18.600" fill="#fff" stroke="#161616" stroke-width="1.400"/><path d="M74.300 812.500 L91.500 795.800" stroke="#ff0000" stroke-width="2.600"/><rect x="5.500" y="828" width="91.500" height="28" rx="3" fill="none" stroke="#5f5f5f" stroke-width="1"/><path d="M5.800 830.500 a2.500 2.500 0 0 1 2.500 -2.300 H34.300 V855.800 H8.300 a2.500 2.500 0 0 1 -2.500 -2.500 Z" fill="#2e2e2e"/><path d="M34.500 828.300 V855.700 M66.500 828.300 V855.700" stroke="#5f5f5f" stroke-width="1"/><circle cx="19" cy="840.300" r="5.800" fill="#777" stroke="#c6c6c6" stroke-width="1.300"/><rect x="19.500" y="841.500" width="9" height="9" fill="#c6c6c6"/><rect x="51.500" y="841.500" width="9" height="9" fill="#c6c6c6"/><circle cx="50.500" cy="840.300" r="5.800" fill="#777" stroke="#c6c6c6" stroke-width="1.300"/><circle cx="82" cy="841.500" r="5.300" fill="none" stroke="#6c6c6c" stroke-width="1.200"/><path d="M82 841.500 H87.300 A5.300 5.300 0 0 1 82 846.800 Z" fill="#6c6c6c"/><rect x="35.300" y="876.500" width="20.500" height="17.500" fill="#767676" stroke="#c6c6c6" stroke-width="1.300"/><rect x="48.200" y="870.300" width="21" height="17.300" fill="#767676" stroke="#c6c6c6" stroke-width="1.300"/><rect x="48.200" y="870.300" width="21" height="3" fill="#c6c6c6"/><rect x="35.300" y="876.500" width="12.500" height="2.500" fill="#c6c6c6"/><circle cx="43.6" cy="933" r="2.700" fill="#c6c6c6"/><circle cx="52.0" cy="933" r="2.700" fill="#c6c6c6"/><circle cx="60.3" cy="933" r="2.700" fill="#c6c6c6"/></svg>
<svg class="b" style="left:1379px;top:80px" width="70" height="620" viewBox="1380 80 70 620"><rect x="1384" y="189.5" width="60" height="2" fill="#3e3e3e"/><rect x="1384" y="343.0" width="60" height="2" fill="#3e3e3e"/><rect x="1384" y="496.0" width="60" height="2" fill="#3e3e3e"/><rect x="1384" y="604.5" width="60" height="2" fill="#3e3e3e"/><rect x="1384" y="669.5" width="60" height="2" fill="#3e3e3e"/><rect x="1397.50" y="87.5" width="1.400" height="6.200" fill="#3a3a3a"/><rect x="1400.55" y="87.5" width="1.400" height="6.200" fill="#3a3a3a"/><rect x="1403.60" y="87.5" width="1.400" height="6.200" fill="#3a3a3a"/><rect x="1406.65" y="87.5" width="1.400" height="6.200" fill="#3a3a3a"/><rect x="1409.70" y="87.5" width="1.400" height="6.200" fill="#3a3a3a"/><rect x="1412.75" y="87.5" width="1.400" height="6.200" fill="#3a3a3a"/><rect x="1415.80" y="87.5" width="1.400" height="6.200" fill="#3a3a3a"/><rect x="1418.85" y="87.5" width="1.400" height="6.200" fill="#3a3a3a"/><rect x="1421.90" y="87.5" width="1.400" height="6.200" fill="#3a3a3a"/><rect x="1424.95" y="87.5" width="1.400" height="6.200" fill="#3a3a3a"/><rect x="1428.00" y="87.5" width="1.400" height="6.200" fill="#3a3a3a"/><rect x="1397.50" y="196.6" width="1.400" height="6.200" fill="#3a3a3a"/><rect x="1400.55" y="196.6" width="1.400" height="6.200" fill="#3a3a3a"/><rect x="1403.60" y="196.6" width="1.400" height="6.200" fill="#3a3a3a"/><rect x="1406.65" y="196.6" width="1.400" height="6.200" fill="#3a3a3a"/><rect x="1409.70" y="196.6" width="1.400" height="6.200" fill="#3a3a3a"/><rect x="1412.75" y="196.6" width="1.400" height="6.200" fill="#3a3a3a"/><rect x="1415.80" y="196.6" width="1.400" height="6.200" fill="#3a3a3a"/><rect x="1418.85" y="196.6" width="1.400" height="6.200" fill="#3a3a3a"/><rect x="1421.90" y="196.6" width="1.400" height="6.200" fill="#3a3a3a"/><rect x="1424.95" y="196.6" width="1.400" height="6.200" fill="#3a3a3a"/><rect x="1428.00" y="196.6" width="1.400" height="6.200" fill="#3a3a3a"/><rect x="1397.50" y="350.0" width="1.400" height="6.200" fill="#3a3a3a"/><rect x="1400.55" y="350.0" width="1.400" height="6.200" fill="#3a3a3a"/><rect x="1403.60" y="350.0" width="1.400" height="6.200" fill="#3a3a3a"/><rect x="1406.65" y="350.0" width="1.400" height="6.200" fill="#3a3a3a"/><rect x="1409.70" y="350.0" width="1.400" height="6.200" fill="#3a3a3a"/><rect x="1412.75" y="350.0" width="1.400" height="6.200" fill="#3a3a3a"/><rect x="1415.80" y="350.0" width="1.400" height="6.200" fill="#3a3a3a"/><rect x="1418.85" y="350.0" width="1.400" height="6.200" fill="#3a3a3a"/><rect x="1421.90" y="350.0" width="1.400" height="6.200" fill="#3a3a3a"/><rect x="1424.95" y="350.0" width="1.400" height="6.200" fill="#3a3a3a"/><rect x="1428.00" y="350.0" width="1.400" height="6.200" fill="#3a3a3a"/><rect x="1397.50" y="503.0" width="1.400" height="6.200" fill="#3a3a3a"/><rect x="1400.55" y="503.0" width="1.400" height="6.200" fill="#3a3a3a"/><rect x="1403.60" y="503.0" width="1.400" height="6.200" fill="#3a3a3a"/><rect x="1406.65" y="503.0" width="1.400" height="6.200" fill="#3a3a3a"/><rect x="1409.70" y="503.0" width="1.400" height="6.200" fill="#3a3a3a"/><rect x="1412.75" y="503.0" width="1.400" height="6.200" fill="#3a3a3a"/><rect x="1415.80" y="503.0" width="1.400" height="6.200" fill="#3a3a3a"/><rect x="1418.85" y="503.0" width="1.400" height="6.200" fill="#3a3a3a"/><rect x="1421.90" y="503.0" width="1.400" height="6.200" fill="#3a3a3a"/><rect x="1424.95" y="503.0" width="1.400" height="6.200" fill="#3a3a3a"/><rect x="1428.00" y="503.0" width="1.400" height="6.200" fill="#3a3a3a"/><rect x="1397.50" y="611.6" width="1.400" height="6.200" fill="#3a3a3a"/><rect x="1400.55" y="611.6" width="1.400" height="6.200" fill="#3a3a3a"/><rect x="1403.60" y="611.6" width="1.400" height="6.200" fill="#3a3a3a"/><rect x="1406.65" y="611.6" width="1.400" height="6.200" fill="#3a3a3a"/><rect x="1409.70" y="611.6" width="1.400" height="6.200" fill="#3a3a3a"/><rect x="1412.75" y="611.6" width="1.400" height="6.200" fill="#3a3a3a"/><rect x="1415.80" y="611.6" width="1.400" height="6.200" fill="#3a3a3a"/><rect x="1418.85" y="611.6" width="1.400" height="6.200" fill="#3a3a3a"/><rect x="1421.90" y="611.6" width="1.400" height="6.200" fill="#3a3a3a"/><rect x="1424.95" y="611.6" width="1.400" height="6.200" fill="#3a3a3a"/><rect x="1428.00" y="611.6" width="1.400" height="6.200" fill="#3a3a3a"/><path d="M1399.500 121 C1398.500 113 1406 108.300 1414.500 108.300 C1423.500 108.300 1429.500 113 1429.200 119.500 C1429 126 1422 130 1414 130 C1409.500 130 1408.500 127.500 1405 127 C1401.500 126.500 1400 124.500 1399.500 121 Z" fill="#c6c6c6"/><circle cx="1405.8" cy="122.3" r="2.7" fill="#535353"/><circle cx="1413.0" cy="125.3" r="2.5" fill="#535353"/><circle cx="1419.5" cy="124.5" r="2.3" fill="#535353"/><circle cx="1424.0" cy="120.5" r="2.1" fill="#535353"/><circle cx="1423.5" cy="115.0" r="2.0" fill="#535353"/><path d="M1403.20 175.30 L1403.20 152.30 A23.0 23.0 0 0 1 1408.32 152.88 Z" fill="#1e1e1e"/><path d="M1403.20 175.30 L1408.32 152.88 A23.0 23.0 0 0 1 1413.18 154.58 Z" fill="#3a3a3a"/><path d="M1403.20 175.30 L1413.18 154.58 A23.0 23.0 0 0 1 1417.54 157.32 Z" fill="#5a5a5a"/><path d="M1403.20 175.30 L1417.54 157.32 A23.0 23.0 0 0 1 1421.18 160.96 Z" fill="#7a7a7a"/><path d="M1403.20 175.30 L1421.18 160.96 A23.0 23.0 0 0 1 1423.92 165.32 Z" fill="#9a9a9a"/><path d="M1403.20 175.30 L1423.92 165.32 A23.0 23.0 0 0 1 1425.62 170.18 Z" fill="#c0c0c0"/><path d="M1403.20 175.30 L1425.62 170.18 A23.0 23.0 0 0 1 1426.20 175.30 Z" fill="#e8e8e8"/><path d="M1403.20 175.30 V152.30 A23.0 23.0 0 0 1 1426.20 175.30 Z" fill="none" stroke="#c6c6c6" stroke-width="1.400"/><rect x="1401.300" y="220.600" width="24.600" height="16.600" fill="#c6c6c6"/><rect x="1402.6" y="221.9" width="6.500" height="6.300" fill="#8a8a8a"/><rect x="1410.3" y="221.9" width="6.500" height="6.300" fill="#c6c6c6"/><rect x="1418.0" y="221.9" width="6.500" height="6.300" fill="#6a6a6a"/><rect x="1402.6" y="229.5" width="6.500" height="6.300" fill="#777"/><rect x="1410.3" y="229.5" width="6.500" height="6.300" fill="#909090"/><rect x="1418.0" y="229.5" width="6.500" height="6.300" fill="#858585"/><rect x="1407.500" y="277" width="13.500" height="10.800" rx="1.500" fill="#c6c6c6"/><path d="M1410.500 277 L1406 266.500 C1401.500 264 1402.500 258.500 1404 256.500 C1405.500 260 1408.500 262 1408 266 L1412.500 277 Z" fill="#c6c6c6"/><path d="M1412.700 277 L1410.800 262.500 L1410 257 L1413.500 256.500 L1414 262.300 L1415.500 277 Z" fill="#c6c6c6"/><path d="M1416.500 277 L1421.500 267.500 C1417.500 266 1419.500 262 1423 263.500 C1426 264.500 1427.500 266.500 1427.500 269 C1426 267.500 1424.500 267.500 1423.500 268.500 L1419 277 Z" fill="#c6c6c6"/><circle cx="1414.500" cy="310" r="6.200" fill="#c6c6c6"/><circle cx="1408" cy="318" r="6" fill="#c6c6c6"/><circle cx="1421" cy="318" r="6" fill="#c6c6c6"/><path d="M1413.300 314 H1415.700 C1415.700 322 1417 326.500 1422 328.300 H1407 C1412 326.500 1413.300 322 1413.300 314 Z" fill="#c6c6c6"/><rect x="1400.800" y="371.500" width="27.200" height="1.200" fill="#c6c6c6"/><rect x="1400.800" y="378.700" width="27.200" height="2.600" fill="#c6c6c6"/><rect x="1400.800" y="385.800" width="27.200" height="4.800" fill="#c6c6c6"/><defs><linearGradient id="rg" x1="0" x2="1" y1="0" y2="0"><stop offset="0" stop-color="#262626"/><stop offset="1" stop-color="#e2e2e2"/></linearGradient></defs><rect x="1401.400" y="416.600" width="26" height="17.200" fill="url(#rg)" stroke="#c6c6c6" stroke-width="1.300"/><circle cx="1409.400" cy="466.900" r="9.800" fill="#c6c6c6"/><circle cx="1416.800" cy="474.200" r="9.200" fill="#8e8e8e" stroke="#c6c6c6" stroke-width="1.300"/><path d="M1409.500 477 C1409 470 1414 465.500 1419 466.500" fill="none" stroke="#9a9a9a" stroke-width="1"/><circle cx="1414.500" cy="535" r="9.600" fill="#c6c6c6"/><circle cx="1414.500" cy="535" r="12.800" fill="none" stroke="#c6c6c6" stroke-width="1.200" stroke-dasharray="2.800 1.900"/><rect x="1406.800" y="568.500" width="20" height="20.500" fill="none" stroke="#c6c6c6" stroke-width="1.300"/><rect x="1404.800" y="584.500" width="9" height="8.500" fill="#c6c6c6" stroke="#c6c6c6" stroke-width="1.300"/><rect x="1401.600" y="580" width="8.500" height="8.500" fill="#535353" stroke="#c6c6c6" stroke-width="1.300"/><path d="M1414.200 650 L1427 643.500 L1423.500 641.700 L1414.200 646.500 L1405 641.700 L1401.400 643.500 Z" fill="#c6c6c6"/><path d="M1414.200 629.500 L1427 636.300 L1414.200 643 L1401.400 636.300 Z" fill="#c6c6c6"/></svg>
<div class="b" style="left:294.50px;top:191.00px;width:836.00px;height:906.50px;background:#525252;"></div>
<div class="b" style="left:292.40px;top:188.60px;width:835.60px;height:906.30px;background:#0c0c0c;"></div>
<div class="b" style="left:293.80px;top:189.80px;width:832.80px;height:903.50px;background:#fefcf6;"></div>
<svg class="b" style="left:0;top:0" width="2000" height="1125" viewBox="0 0 2000 1125">
<path d="M294.2 190.3 H1126.2 V373 C1090 382 1060 393 1010 404.5 C940 420 880 420 815 419 C730 417 650 401 560 400 C470 399 380 405 294.2 439.5 Z" fill="#f6f3ec"/>
<rect x="454.00" y="484.10" width="8.4" height="32.70" fill="#c8177f"/>
<rect x="468.07" y="485.50" width="8.4" height="31.30" fill="#c8177f"/>
<rect x="482.14" y="484.10" width="8.4" height="32.70" fill="#c8177f"/>
<rect x="496.21" y="484.10" width="8.4" height="32.70" fill="#c8177f"/>
<rect x="510.28" y="484.10" width="8.4" height="32.70" fill="#c8177f"/>
<rect x="524.35" y="482.70" width="8.4" height="34.10" fill="#c8177f"/>
<rect x="538.42" y="482.70" width="8.4" height="34.10" fill="#c8177f"/>
<rect x="552.49" y="482.70" width="8.4" height="34.10" fill="#c8177f"/>
<rect x="566.56" y="481.30" width="8.4" height="35.50" fill="#c8177f"/>
<rect x="580.63" y="479.90" width="8.4" height="36.90" fill="#dd72ab"/>
<rect x="594.70" y="478.50" width="8.4" height="38.30" fill="#dd72ab"/>
<rect x="608.77" y="478.50" width="8.4" height="38.30" fill="#dd72ab"/>
<rect x="622.84" y="478.50" width="8.4" height="38.30" fill="#dd72ab"/>
<rect x="636.91" y="478.50" width="8.4" height="38.30" fill="#dd72ab"/>
<rect x="650.98" y="477.10" width="8.4" height="39.70" fill="#dd72ab"/>
<rect x="665.05" y="475.70" width="8.4" height="41.10" fill="#dd72ab"/>
<rect x="679.12" y="474.30" width="8.4" height="42.50" fill="#dd72ab"/>
<rect x="693.19" y="474.30" width="8.4" height="42.50" fill="#efb4d6"/>
<rect x="707.26" y="471.50" width="8.4" height="45.30" fill="#efb4d6"/>
<circle cx="459.90" cy="551.60" r="4.85" fill="#468f30"/>
<circle cx="473.90" cy="551.60" r="4.85" fill="#468f30"/>
<circle cx="487.90" cy="551.60" r="4.85" fill="#468f30"/>
<circle cx="501.90" cy="551.60" r="4.85" fill="#468f30"/>
<circle cx="515.90" cy="551.60" r="4.85" fill="#468f30"/>
<circle cx="529.90" cy="551.60" r="4.85" fill="#468f30"/>
<circle cx="543.90" cy="551.60" r="4.85" fill="#468f30"/>
<circle cx="557.90" cy="551.60" r="4.85" fill="#468f30"/>
<circle cx="571.90" cy="551.60" r="4.85" fill="#468f30"/>
<circle cx="585.90" cy="551.60" r="4.85" fill="#7aba42"/>
<circle cx="599.90" cy="551.60" r="4.85" fill="#7aba42"/>
<circle cx="613.90" cy="551.60" r="4.85" fill="#7aba42"/>
<circle cx="627.90" cy="551.60" r="4.85" fill="#7aba42"/>
<circle cx="641.90" cy="551.60" r="4.85" fill="#468f30"/>
<circle cx="655.90" cy="551.60" r="4.85" fill="#468f30"/>
<circle cx="669.90" cy="551.60" r="4.85" fill="#468f30"/>
<circle cx="683.90" cy="551.60" r="4.85" fill="#468f30"/>
<circle cx="697.90" cy="551.60" r="4.85" fill="#25601f"/>
<circle cx="711.90" cy="551.60" r="4.85" fill="#468f30"/>
<circle cx="459.90" cy="563.47" r="4.85" fill="#b5d785"/>
<circle cx="473.90" cy="563.47" r="4.85" fill="#efb4d6"/>
<circle cx="487.90" cy="563.47" r="4.85" fill="#efb4d6"/>
<circle cx="501.90" cy="563.47" r="4.85" fill="#efb4d6"/>
<circle cx="515.90" cy="563.47" r="4.85" fill="#efb4d6"/>
<circle cx="529.90" cy="563.47" r="4.85" fill="#efb4d6"/>
<circle cx="543.90" cy="563.47" r="4.85" fill="#7aba42"/>
<circle cx="557.90" cy="563.47" r="4.85" fill="#7aba42"/>
<circle cx="571.90" cy="563.47" r="4.85" fill="#b5d785"/>
<circle cx="585.90" cy="563.47" r="4.85" fill="#7aba42"/>
<circle cx="599.90" cy="563.47" r="4.85" fill="#7aba42"/>
<circle cx="613.90" cy="563.47" r="4.85" fill="#7aba42"/>
<circle cx="627.90" cy="563.47" r="4.85" fill="#7aba42"/>
<circle cx="641.90" cy="563.47" r="4.85" fill="#468f30"/>
<circle cx="655.90" cy="563.47" r="4.85" fill="#b5d785"/>
<circle cx="669.90" cy="563.47" r="4.85" fill="#b5d785"/>
<circle cx="683.90" cy="563.47" r="4.85" fill="#b5d785"/>
<circle cx="697.90" cy="563.47" r="4.85" fill="#7aba42"/>
<circle cx="711.90" cy="563.47" r="4.85" fill="#468f30"/>
<circle cx="459.90" cy="575.33" r="4.85" fill="#b5d785"/>
<circle cx="473.90" cy="575.33" r="4.85" fill="#b5d785"/>
<circle cx="487.90" cy="575.33" r="4.85" fill="#b5d785"/>
<circle cx="501.90" cy="575.33" r="4.85" fill="#b5d785"/>
<circle cx="515.90" cy="575.33" r="4.85" fill="#7aba42"/>
<circle cx="529.90" cy="575.33" r="4.85" fill="#7aba42"/>
<circle cx="543.90" cy="575.33" r="4.85" fill="#7aba42"/>
<circle cx="557.90" cy="575.33" r="4.85" fill="#7aba42"/>
<circle cx="571.90" cy="575.33" r="4.85" fill="#7aba42"/>
<circle cx="585.90" cy="575.33" r="4.85" fill="#7aba42"/>
<circle cx="599.90" cy="575.33" r="4.85" fill="#7aba42"/>
<circle cx="613.90" cy="575.33" r="4.85" fill="#7aba42"/>
<circle cx="627.90" cy="575.33" r="4.85" fill="#7aba42"/>
<circle cx="641.90" cy="575.33" r="4.85" fill="#7aba42"/>
<circle cx="655.90" cy="575.33" r="4.85" fill="#7aba42"/>
<circle cx="669.90" cy="575.33" r="4.85" fill="#7aba42"/>
<circle cx="683.90" cy="575.33" r="4.85" fill="#468f30"/>
<circle cx="697.90" cy="575.33" r="4.85" fill="#468f30"/>
<circle cx="711.90" cy="575.33" r="4.85" fill="#468f30"/>
<circle cx="459.90" cy="587.20" r="4.85" fill="#b5d785"/>
<circle cx="473.90" cy="587.20" r="4.85" fill="#b5d785"/>
<circle cx="487.90" cy="587.20" r="4.85" fill="#b5d785"/>
<circle cx="501.90" cy="587.20" r="4.85" fill="#b5d785"/>
<circle cx="515.90" cy="587.20" r="4.85" fill="#b5d785"/>
<circle cx="529.90" cy="587.20" r="4.85" fill="#b5d785"/>
<circle cx="543.90" cy="587.20" r="4.85" fill="#b5d785"/>
<circle cx="557.90" cy="587.20" r="4.85" fill="#b5d785"/>
<circle cx="571.90" cy="587.20" r="4.85" fill="#7aba42"/>
<circle cx="585.90" cy="587.20" r="4.85" fill="#7aba42"/>
<circle cx="599.90" cy="587.20" r="4.85" fill="#b5d785"/>
<circle cx="613.90" cy="587.20" r="4.85" fill="#b5d785"/>
<circle cx="627.90" cy="587.20" r="4.85" fill="#7aba42"/>
<circle cx="641.90" cy="587.20" r="4.85" fill="#7aba42"/>
<circle cx="655.90" cy="587.20" r="4.85" fill="#7aba42"/>
<circle cx="669.90" cy="587.20" r="4.85" fill="#7aba42"/>
<circle cx="683.90" cy="587.20" r="4.85" fill="#7aba42"/>
<circle cx="697.90" cy="587.20" r="4.85" fill="#7aba42"/>
<circle cx="711.90" cy="587.20" r="4.85" fill="#468f30"/>
<circle cx="459.90" cy="599.06" r="4.85" fill="#efb4d6"/>
<circle cx="473.90" cy="599.06" r="4.85" fill="#b5d785"/>
<circle cx="487.90" cy="599.06" r="4.85" fill="#b5d785"/>
<circle cx="501.90" cy="599.06" r="4.85" fill="#b5d785"/>
<circle cx="515.90" cy="599.06" r="4.85" fill="#b5d785"/>
<circle cx="529.90" cy="599.06" r="4.85" fill="#b5d785"/>
<circle cx="543.90" cy="599.06" r="4.85" fill="#7aba42"/>
<circle cx="557.90" cy="599.06" r="4.85" fill="#b5d785"/>
<circle cx="571.90" cy="599.06" r="4.85" fill="#b5d785"/>
<circle cx="585.90" cy="599.06" r="4.85" fill="#7aba42"/>
<circle cx="599.90" cy="599.06" r="4.85" fill="#7aba42"/>
<circle cx="613.90" cy="599.06" r="4.85" fill="#7aba42"/>
<circle cx="627.90" cy="599.06" r="4.85" fill="#7aba42"/>
<circle cx="641.90" cy="599.06" r="4.85" fill="#7aba42"/>
<circle cx="655.90" cy="599.06" r="4.85" fill="#7aba42"/>
<circle cx="669.90" cy="599.06" r="4.85" fill="#7aba42"/>
<circle cx="683.90" cy="599.06" r="4.85" fill="#7aba42"/>
<circle cx="697.90" cy="599.06" r="4.85" fill="#7aba42"/>
<circle cx="711.90" cy="599.06" r="4.85" fill="#7aba42"/>
<circle cx="459.90" cy="610.93" r="4.85" fill="#efb4d6"/>
<circle cx="473.90" cy="610.93" r="4.85" fill="#efb4d6"/>
<circle cx="487.90" cy="610.93" r="4.85" fill="#efb4d6"/>
<circle cx="501.90" cy="610.93" r="4.85" fill="#efb4d6"/>
<circle cx="515.90" cy="610.93" r="4.85" fill="#efb4d6"/>
<circle cx="529.90" cy="610.93" r="4.85" fill="#efb4d6"/>
<circle cx="543.90" cy="610.93" r="4.85" fill="#dd72ab"/>
<circle cx="557.90" cy="610.93" r="4.85" fill="#dd72ab"/>
<circle cx="571.90" cy="610.93" r="4.85" fill="#dd72ab"/>
<circle cx="585.90" cy="610.93" r="4.85" fill="#dd72ab"/>
<circle cx="599.90" cy="610.93" r="4.85" fill="#efb4d6"/>
<circle cx="613.90" cy="610.93" r="4.85" fill="#efb4d6"/>
<circle cx="627.90" cy="610.93" r="4.85" fill="#efb4d6"/>
<circle cx="641.90" cy="610.93" r="4.85" fill="#efb4d6"/>
<circle cx="655.90" cy="610.93" r="4.85" fill="#efb4d6"/>
<circle cx="669.90" cy="610.93" r="4.85" fill="#b5d785"/>
<circle cx="683.90" cy="610.93" r="4.85" fill="#b5d785"/>
<circle cx="697.90" cy="610.93" r="4.85" fill="#7aba42"/>
<circle cx="711.90" cy="610.93" r="4.85" fill="#7aba42"/>
<circle cx="459.90" cy="622.79" r="4.85" fill="#b5d785"/>
<circle cx="473.90" cy="622.79" r="4.85" fill="#b5d785"/>
<circle cx="487.90" cy="622.79" r="4.85" fill="#7aba42"/>
<circle cx="501.90" cy="622.79" r="4.85" fill="#b5d785"/>
<circle cx="515.90" cy="622.79" r="4.85" fill="#b5d785"/>
<circle cx="529.90" cy="622.79" r="4.85" fill="#b5d785"/>
<circle cx="543.90" cy="622.79" r="4.85" fill="#b5d785"/>
<circle cx="557.90" cy="622.79" r="4.85" fill="#b5d785"/>
<circle cx="571.90" cy="622.79" r="4.85" fill="#b5d785"/>
<circle cx="585.90" cy="622.79" r="4.85" fill="#7aba42"/>
<circle cx="599.90" cy="622.79" r="4.85" fill="#b5d785"/>
<circle cx="613.90" cy="622.79" r="4.85" fill="#b5d785"/>
<circle cx="627.90" cy="622.79" r="4.85" fill="#b5d785"/>
<circle cx="641.90" cy="622.79" r="4.85" fill="#b5d785"/>
<circle cx="655.90" cy="622.79" r="4.85" fill="#b5d785"/>
<circle cx="669.90" cy="622.79" r="4.85" fill="#b5d785"/>
<circle cx="683.90" cy="622.79" r="4.85" fill="#7aba42"/>
<circle cx="697.90" cy="622.79" r="4.85" fill="#7aba42"/>
<circle cx="711.90" cy="622.79" r="4.85" fill="#7aba42"/>
<circle cx="459.90" cy="634.65" r="4.85" fill="#dd72ab"/>
<circle cx="473.90" cy="634.65" r="4.85" fill="#efb4d6"/>
<circle cx="487.90" cy="634.65" r="4.85" fill="#efb4d6"/>
<circle cx="501.90" cy="634.65" r="4.85" fill="#efb4d6"/>
<circle cx="515.90" cy="634.65" r="4.85" fill="#efb4d6"/>
<circle cx="529.90" cy="634.65" r="4.85" fill="#efb4d6"/>
<circle cx="543.90" cy="634.65" r="4.85" fill="#efb4d6"/>
<circle cx="557.90" cy="634.65" r="4.85" fill="#b5d785"/>
<circle cx="571.90" cy="634.65" r="4.85" fill="#dd72ab"/>
<circle cx="585.90" cy="634.65" r="4.85" fill="#b5d785"/>
<circle cx="599.90" cy="634.65" r="4.85" fill="#b5d785"/>
<circle cx="613.90" cy="634.65" r="4.85" fill="#b5d785"/>
<circle cx="627.90" cy="634.65" r="4.85" fill="#7aba42"/>
<circle cx="641.90" cy="634.65" r="4.85" fill="#b5d785"/>
<circle cx="655.90" cy="634.65" r="4.85" fill="#b5d785"/>
<circle cx="669.90" cy="634.65" r="4.85" fill="#7aba42"/>
<circle cx="683.90" cy="634.65" r="4.85" fill="#7aba42"/>
<circle cx="697.90" cy="634.65" r="4.85" fill="#7aba42"/>
<circle cx="711.90" cy="634.65" r="4.85" fill="#7aba42"/>
<circle cx="459.90" cy="646.52" r="4.85" fill="#c8177f"/>
<circle cx="473.90" cy="646.52" r="4.85" fill="#c8177f"/>
<circle cx="487.90" cy="646.52" r="4.85" fill="#dd72ab"/>
<circle cx="501.90" cy="646.52" r="4.85" fill="#dd72ab"/>
<circle cx="515.90" cy="646.52" r="4.85" fill="#dd72ab"/>
<circle cx="529.90" cy="646.52" r="4.85" fill="#dd72ab"/>
<circle cx="543.90" cy="646.52" r="4.85" fill="#efb4d6"/>
<circle cx="557.90" cy="646.52" r="4.85" fill="#efb4d6"/>
<circle cx="571.90" cy="646.52" r="4.85" fill="#dd72ab"/>
<circle cx="585.90" cy="646.52" r="4.85" fill="#dd72ab"/>
<circle cx="599.90" cy="646.52" r="4.85" fill="#efb4d6"/>
<circle cx="613.90" cy="646.52" r="4.85" fill="#efb4d6"/>
<circle cx="627.90" cy="646.52" r="4.85" fill="#efb4d6"/>
<circle cx="641.90" cy="646.52" r="4.85" fill="#efb4d6"/>
<circle cx="655.90" cy="646.52" r="4.85" fill="#b5d785"/>
<circle cx="669.90" cy="646.52" r="4.85" fill="#b5d785"/>
<circle cx="683.90" cy="646.52" r="4.85" fill="#7aba42"/>
<circle cx="697.90" cy="646.52" r="4.85" fill="#7aba42"/>
<circle cx="711.90" cy="646.52" r="4.85" fill="#7aba42"/>
<circle cx="459.90" cy="658.38" r="4.4" fill="#fffefb" stroke="#aeaba5" stroke-width="0.7"/>
<circle cx="473.90" cy="658.38" r="4.4" fill="#fffefb" stroke="#aeaba5" stroke-width="0.7"/>
<circle cx="487.90" cy="658.38" r="4.4" fill="#fffefb" stroke="#aeaba5" stroke-width="0.7"/>
<circle cx="501.90" cy="658.38" r="4.4" fill="#fffefb" stroke="#aeaba5" stroke-width="0.7"/>
<circle cx="515.90" cy="658.38" r="4.85" fill="#efb4d6"/>
<circle cx="529.90" cy="658.38" r="4.85" fill="#efb4d6"/>
<circle cx="543.90" cy="658.38" r="4.85" fill="#efb4d6"/>
<circle cx="557.90" cy="658.38" r="4.85" fill="#efb4d6"/>
<circle cx="571.90" cy="658.38" r="4.85" fill="#efb4d6"/>
<circle cx="585.90" cy="658.38" r="4.85" fill="#efb4d6"/>
<circle cx="599.90" cy="658.38" r="4.85" fill="#efb4d6"/>
<circle cx="613.90" cy="658.38" r="4.85" fill="#b5d785"/>
<circle cx="627.90" cy="658.38" r="4.85" fill="#efb4d6"/>
<circle cx="641.90" cy="658.38" r="4.85" fill="#b5d785"/>
<circle cx="655.90" cy="658.38" r="4.85" fill="#b5d785"/>
<circle cx="669.90" cy="658.38" r="4.85" fill="#b5d785"/>
<circle cx="683.90" cy="658.38" r="4.85" fill="#7aba42"/>
<circle cx="697.90" cy="658.38" r="4.85" fill="#b5d785"/>
<circle cx="711.90" cy="658.38" r="4.85" fill="#7aba42"/>
<circle cx="459.90" cy="670.25" r="4.4" fill="#fffefb" stroke="#aeaba5" stroke-width="0.7"/>
<circle cx="473.90" cy="670.25" r="4.4" fill="#fffefb" stroke="#aeaba5" stroke-width="0.7"/>
<circle cx="487.90" cy="670.25" r="4.4" fill="#fffefb" stroke="#aeaba5" stroke-width="0.7"/>
<circle cx="501.90" cy="670.25" r="4.4" fill="#fffefb" stroke="#aeaba5" stroke-width="0.7"/>
<circle cx="515.90" cy="670.25" r="4.85" fill="#c8177f"/>
<circle cx="529.90" cy="670.25" r="4.85" fill="#c8177f"/>
<circle cx="543.90" cy="670.25" r="4.85" fill="#c8177f"/>
<circle cx="557.90" cy="670.25" r="4.85" fill="#c8177f"/>
<circle cx="571.90" cy="670.25" r="4.85" fill="#c8177f"/>
<circle cx="585.90" cy="670.25" r="4.85" fill="#efb4d6"/>
<circle cx="599.90" cy="670.25" r="4.85" fill="#efb4d6"/>
<circle cx="613.90" cy="670.25" r="4.85" fill="#efb4d6"/>
<circle cx="627.90" cy="670.25" r="4.85" fill="#efb4d6"/>
<circle cx="641.90" cy="670.25" r="4.85" fill="#efb4d6"/>
<circle cx="655.90" cy="670.25" r="4.85" fill="#b5d785"/>
<circle cx="669.90" cy="670.25" r="4.85" fill="#b5d785"/>
<circle cx="683.90" cy="670.25" r="4.85" fill="#b5d785"/>
<circle cx="697.90" cy="670.25" r="4.85" fill="#b5d785"/>
<circle cx="711.90" cy="670.25" r="4.85" fill="#7aba42"/>
<circle cx="459.90" cy="682.12" r="4.85" fill="#6e104c"/>
<circle cx="473.90" cy="682.12" r="4.85" fill="#6e104c"/>
<circle cx="487.90" cy="682.12" r="4.85" fill="#8b1057"/>
<circle cx="501.90" cy="682.12" r="4.85" fill="#8b1057"/>
<circle cx="515.90" cy="682.12" r="4.85" fill="#8b1057"/>
<circle cx="529.90" cy="682.12" r="4.85" fill="#c8177f"/>
<circle cx="543.90" cy="682.12" r="4.85" fill="#c8177f"/>
<circle cx="557.90" cy="682.12" r="4.85" fill="#c8177f"/>
<circle cx="571.90" cy="682.12" r="4.85" fill="#c8177f"/>
<circle cx="585.90" cy="682.12" r="4.85" fill="#dd72ab"/>
<circle cx="599.90" cy="682.12" r="4.85" fill="#dd72ab"/>
<circle cx="613.90" cy="682.12" r="4.85" fill="#dd72ab"/>
<circle cx="627.90" cy="682.12" r="4.85" fill="#dd72ab"/>
<circle cx="641.90" cy="682.12" r="4.85" fill="#dd72ab"/>
<circle cx="655.90" cy="682.12" r="4.85" fill="#b5d785"/>
<circle cx="669.90" cy="682.12" r="4.85" fill="#b5d785"/>
<circle cx="683.90" cy="682.12" r="4.85" fill="#b5d785"/>
<circle cx="697.90" cy="682.12" r="4.85" fill="#b5d785"/>
<circle cx="711.90" cy="682.12" r="4.85" fill="#b5d785"/>
<circle cx="459.90" cy="693.98" r="4.85" fill="#b5d785"/>
<circle cx="473.90" cy="693.98" r="4.85" fill="#b5d785"/>
<circle cx="487.90" cy="693.98" r="4.85" fill="#b5d785"/>
<circle cx="501.90" cy="693.98" r="4.85" fill="#efb4d6"/>
<circle cx="515.90" cy="693.98" r="4.85" fill="#b5d785"/>
<circle cx="529.90" cy="693.98" r="4.85" fill="#b5d785"/>
<circle cx="543.90" cy="693.98" r="4.85" fill="#7aba42"/>
<circle cx="557.90" cy="693.98" r="4.85" fill="#b5d785"/>
<circle cx="571.90" cy="693.98" r="4.85" fill="#b5d785"/>
<circle cx="585.90" cy="693.98" r="4.85" fill="#b5d785"/>
<circle cx="599.90" cy="693.98" r="4.85" fill="#b5d785"/>
<circle cx="613.90" cy="693.98" r="4.85" fill="#b5d785"/>
<circle cx="627.90" cy="693.98" r="4.85" fill="#b5d785"/>
<circle cx="641.90" cy="693.98" r="4.85" fill="#b5d785"/>
<circle cx="655.90" cy="693.98" r="4.85" fill="#b5d785"/>
<circle cx="669.90" cy="693.98" r="4.85" fill="#efb4d6"/>
<circle cx="683.90" cy="693.98" r="4.85" fill="#b5d785"/>
<circle cx="697.90" cy="693.98" r="4.85" fill="#efb4d6"/>
<circle cx="711.90" cy="693.98" r="4.85" fill="#b5d785"/>
<circle cx="459.90" cy="705.85" r="4.85" fill="#6e104c"/>
<circle cx="473.90" cy="705.85" r="4.85" fill="#6e104c"/>
<circle cx="487.90" cy="705.85" r="4.85" fill="#6e104c"/>
<circle cx="501.90" cy="705.85" r="4.85" fill="#8b1057"/>
<circle cx="515.90" cy="705.85" r="4.85" fill="#8b1057"/>
<circle cx="529.90" cy="705.85" r="4.85" fill="#c8177f"/>
<circle cx="543.90" cy="705.85" r="4.85" fill="#c8177f"/>
<circle cx="557.90" cy="705.85" r="4.85" fill="#c8177f"/>
<circle cx="571.90" cy="705.85" r="4.85" fill="#c8177f"/>
<circle cx="585.90" cy="705.85" r="4.85" fill="#c8177f"/>
<circle cx="599.90" cy="705.85" r="4.85" fill="#efb4d6"/>
<circle cx="613.90" cy="705.85" r="4.85" fill="#efb4d6"/>
<circle cx="627.90" cy="705.85" r="4.85" fill="#efb4d6"/>
<circle cx="641.90" cy="705.85" r="4.85" fill="#efb4d6"/>
<circle cx="655.90" cy="705.85" r="4.85" fill="#efb4d6"/>
<circle cx="669.90" cy="705.85" r="4.85" fill="#b5d785"/>
<circle cx="683.90" cy="705.85" r="4.85" fill="#b5d785"/>
<circle cx="697.90" cy="705.85" r="4.85" fill="#b5d785"/>
<circle cx="711.90" cy="705.85" r="4.85" fill="#b5d785"/>
<circle cx="459.90" cy="717.71" r="4.4" fill="#fffefb" stroke="#aeaba5" stroke-width="0.7"/>
<circle cx="473.90" cy="717.71" r="4.4" fill="#fffefb" stroke="#aeaba5" stroke-width="0.7"/>
<circle cx="487.90" cy="717.71" r="4.4" fill="#fffefb" stroke="#aeaba5" stroke-width="0.7"/>
<circle cx="501.90" cy="717.71" r="4.4" fill="#fffefb" stroke="#aeaba5" stroke-width="0.7"/>
<circle cx="515.90" cy="717.71" r="4.4" fill="#fffefb" stroke="#aeaba5" stroke-width="0.7"/>
<circle cx="529.90" cy="717.71" r="4.4" fill="#fffefb" stroke="#aeaba5" stroke-width="0.7"/>
<circle cx="543.90" cy="717.71" r="4.4" fill="#fffefb" stroke="#aeaba5" stroke-width="0.7"/>
<circle cx="557.90" cy="717.71" r="4.4" fill="#fffefb" stroke="#aeaba5" stroke-width="0.7"/>
<circle cx="571.90" cy="717.71" r="4.4" fill="#fffefb" stroke="#aeaba5" stroke-width="0.7"/>
<circle cx="585.90" cy="717.71" r="4.4" fill="#fffefb" stroke="#aeaba5" stroke-width="0.7"/>
<circle cx="599.90" cy="717.71" r="4.4" fill="#fffefb" stroke="#aeaba5" stroke-width="0.7"/>
<circle cx="613.90" cy="717.71" r="4.4" fill="#fffefb" stroke="#aeaba5" stroke-width="0.7"/>
<circle cx="627.90" cy="717.71" r="4.4" fill="#fffefb" stroke="#aeaba5" stroke-width="0.7"/>
<circle cx="641.90" cy="717.71" r="4.4" fill="#fffefb" stroke="#aeaba5" stroke-width="0.7"/>
<circle cx="655.90" cy="717.71" r="4.4" fill="#fffefb" stroke="#aeaba5" stroke-width="0.7"/>
<circle cx="669.90" cy="717.71" r="4.85" fill="#dd72ab"/>
<circle cx="683.90" cy="717.71" r="4.85" fill="#efb4d6"/>
<circle cx="697.90" cy="717.71" r="4.85" fill="#efb4d6"/>
<circle cx="711.90" cy="717.71" r="4.85" fill="#b5d785"/>
<circle cx="459.90" cy="729.58" r="4.85" fill="#c8177f"/>
<circle cx="473.90" cy="729.58" r="4.85" fill="#c8177f"/>
<circle cx="487.90" cy="729.58" r="4.85" fill="#c8177f"/>
<circle cx="501.90" cy="729.58" r="4.85" fill="#c8177f"/>
<circle cx="515.90" cy="729.58" r="4.85" fill="#dd72ab"/>
<circle cx="529.90" cy="729.58" r="4.85" fill="#dd72ab"/>
<circle cx="543.90" cy="729.58" r="4.85" fill="#c8177f"/>
<circle cx="557.90" cy="729.58" r="4.85" fill="#c8177f"/>
<circle cx="571.90" cy="729.58" r="4.85" fill="#c8177f"/>
<circle cx="585.90" cy="729.58" r="4.85" fill="#c8177f"/>
<circle cx="599.90" cy="729.58" r="4.85" fill="#c8177f"/>
<circle cx="613.90" cy="729.58" r="4.85" fill="#dd72ab"/>
<circle cx="627.90" cy="729.58" r="4.85" fill="#dd72ab"/>
<circle cx="641.90" cy="729.58" r="4.85" fill="#dd72ab"/>
<circle cx="655.90" cy="729.58" r="4.85" fill="#dd72ab"/>
<circle cx="669.90" cy="729.58" r="4.85" fill="#c8177f"/>
<circle cx="683.90" cy="729.58" r="4.85" fill="#dd72ab"/>
<circle cx="697.90" cy="729.58" r="4.85" fill="#efb4d6"/>
<circle cx="711.90" cy="729.58" r="4.85" fill="#b5d785"/>
<circle cx="459.90" cy="741.44" r="4.85" fill="#efb4d6"/>
<circle cx="473.90" cy="741.44" r="4.85" fill="#efb4d6"/>
<circle cx="487.90" cy="741.44" r="4.85" fill="#efb4d6"/>
<circle cx="501.90" cy="741.44" r="4.85" fill="#efb4d6"/>
<circle cx="515.90" cy="741.44" r="4.85" fill="#efb4d6"/>
<circle cx="529.90" cy="741.44" r="4.85" fill="#efb4d6"/>
<circle cx="543.90" cy="741.44" r="4.85" fill="#efb4d6"/>
<circle cx="557.90" cy="741.44" r="4.85" fill="#efb4d6"/>
<circle cx="571.90" cy="741.44" r="4.85" fill="#efb4d6"/>
<circle cx="585.90" cy="741.44" r="4.85" fill="#efb4d6"/>
<circle cx="599.90" cy="741.44" r="4.85" fill="#b5d785"/>
<circle cx="613.90" cy="741.44" r="4.85" fill="#b5d785"/>
<circle cx="627.90" cy="741.44" r="4.85" fill="#b5d785"/>
<circle cx="641.90" cy="741.44" r="4.85" fill="#b5d785"/>
<circle cx="655.90" cy="741.44" r="4.85" fill="#efb4d6"/>
<circle cx="669.90" cy="741.44" r="4.85" fill="#efb4d6"/>
<circle cx="683.90" cy="741.44" r="4.85" fill="#efb4d6"/>
<circle cx="697.90" cy="741.44" r="4.85" fill="#efb4d6"/>
<circle cx="711.90" cy="741.44" r="4.85" fill="#b5d785"/>
<circle cx="459.90" cy="753.31" r="4.4" fill="#fffefb" stroke="#aeaba5" stroke-width="0.7"/>
<circle cx="473.90" cy="753.31" r="4.4" fill="#fffefb" stroke="#aeaba5" stroke-width="0.7"/>
<circle cx="487.90" cy="753.31" r="4.4" fill="#fffefb" stroke="#aeaba5" stroke-width="0.7"/>
<circle cx="501.90" cy="753.31" r="4.4" fill="#fffefb" stroke="#aeaba5" stroke-width="0.7"/>
<circle cx="515.90" cy="753.31" r="4.4" fill="#fffefb" stroke="#aeaba5" stroke-width="0.7"/>
<circle cx="529.90" cy="753.31" r="4.4" fill="#fffefb" stroke="#aeaba5" stroke-width="0.7"/>
<circle cx="543.90" cy="753.31" r="4.4" fill="#fffefb" stroke="#aeaba5" stroke-width="0.7"/>
<circle cx="557.90" cy="753.31" r="4.4" fill="#fffefb" stroke="#aeaba5" stroke-width="0.7"/>
<circle cx="571.90" cy="753.31" r="4.4" fill="#fffefb" stroke="#aeaba5" stroke-width="0.7"/>
<circle cx="585.90" cy="753.31" r="4.4" fill="#fffefb" stroke="#aeaba5" stroke-width="0.7"/>
<circle cx="599.90" cy="753.31" r="4.4" fill="#fffefb" stroke="#aeaba5" stroke-width="0.7"/>
<circle cx="613.90" cy="753.31" r="4.4" fill="#fffefb" stroke="#aeaba5" stroke-width="0.7"/>
<circle cx="627.90" cy="753.31" r="4.4" fill="#fffefb" stroke="#aeaba5" stroke-width="0.7"/>
<circle cx="641.90" cy="753.31" r="4.4" fill="#fffefb" stroke="#aeaba5" stroke-width="0.7"/>
<circle cx="655.90" cy="753.31" r="4.4" fill="#fffefb" stroke="#aeaba5" stroke-width="0.7"/>
<circle cx="669.90" cy="753.31" r="4.85" fill="#efb4d6"/>
<circle cx="683.90" cy="753.31" r="4.85" fill="#efb4d6"/>
<circle cx="697.90" cy="753.31" r="4.85" fill="#efb4d6"/>
<circle cx="711.90" cy="753.31" r="4.85" fill="#efb4d6"/>
<circle cx="459.90" cy="765.17" r="4.4" fill="#fffefb" stroke="#aeaba5" stroke-width="0.7"/>
<circle cx="473.90" cy="765.17" r="4.4" fill="#fffefb" stroke="#aeaba5" stroke-width="0.7"/>
<circle cx="487.90" cy="765.17" r="4.4" fill="#fffefb" stroke="#aeaba5" stroke-width="0.7"/>
<circle cx="501.90" cy="765.17" r="4.4" fill="#fffefb" stroke="#aeaba5" stroke-width="0.7"/>
<circle cx="515.90" cy="765.17" r="4.85" fill="#c8177f"/>
<circle cx="529.90" cy="765.17" r="4.85" fill="#c8177f"/>
<circle cx="543.90" cy="765.17" r="4.85" fill="#c8177f"/>
<circle cx="557.90" cy="765.17" r="4.85" fill="#dd72ab"/>
<circle cx="571.90" cy="765.17" r="4.85" fill="#dd72ab"/>
<circle cx="585.90" cy="765.17" r="4.85" fill="#dd72ab"/>
<circle cx="599.90" cy="765.17" r="4.85" fill="#c8177f"/>
<circle cx="613.90" cy="765.17" r="4.85" fill="#dd72ab"/>
<circle cx="627.90" cy="765.17" r="4.85" fill="#dd72ab"/>
<circle cx="641.90" cy="765.17" r="4.85" fill="#8b1057"/>
<circle cx="655.90" cy="765.17" r="4.85" fill="#8b1057"/>
<circle cx="669.90" cy="765.17" r="4.85" fill="#c8177f"/>
<circle cx="683.90" cy="765.17" r="4.85" fill="#c8177f"/>
<circle cx="697.90" cy="765.17" r="4.85" fill="#efb4d6"/>
<circle cx="711.90" cy="765.17" r="4.85" fill="#efb4d6"/>
<circle cx="459.90" cy="777.04" r="4.85" fill="#8b1057"/>
<circle cx="473.90" cy="777.04" r="4.85" fill="#8b1057"/>
<circle cx="487.90" cy="777.04" r="4.85" fill="#8b1057"/>
<circle cx="501.90" cy="777.04" r="4.85" fill="#8b1057"/>
<circle cx="515.90" cy="777.04" r="4.85" fill="#c8177f"/>
<circle cx="529.90" cy="777.04" r="4.85" fill="#c8177f"/>
<circle cx="543.90" cy="777.04" r="4.85" fill="#c8177f"/>
<circle cx="557.90" cy="777.04" r="4.85" fill="#c8177f"/>
<circle cx="571.90" cy="777.04" r="4.85" fill="#c8177f"/>
<circle cx="585.90" cy="777.04" r="4.85" fill="#c8177f"/>
<circle cx="599.90" cy="777.04" r="4.85" fill="#c8177f"/>
<circle cx="613.90" cy="777.04" r="4.85" fill="#c8177f"/>
<circle cx="627.90" cy="777.04" r="4.85" fill="#dd72ab"/>
<circle cx="641.90" cy="777.04" r="4.85" fill="#dd72ab"/>
<circle cx="655.90" cy="777.04" r="4.85" fill="#dd72ab"/>
<circle cx="669.90" cy="777.04" r="4.85" fill="#dd72ab"/>
<circle cx="683.90" cy="777.04" r="4.85" fill="#efb4d6"/>
<circle cx="697.90" cy="777.04" r="4.85" fill="#efb4d6"/>
<circle cx="711.90" cy="777.04" r="4.85" fill="#efb4d6"/>
<circle cx="459.90" cy="788.90" r="4.4" fill="#fffefb" stroke="#aeaba5" stroke-width="0.7"/>
<circle cx="473.90" cy="788.90" r="4.85" fill="#c8177f"/>
<circle cx="487.90" cy="788.90" r="4.85" fill="#c8177f"/>
<circle cx="501.90" cy="788.90" r="4.85" fill="#c8177f"/>
<circle cx="515.90" cy="788.90" r="4.85" fill="#c8177f"/>
<circle cx="529.90" cy="788.90" r="4.85" fill="#c8177f"/>
<circle cx="543.90" cy="788.90" r="4.85" fill="#8b1057"/>
<circle cx="557.90" cy="788.90" r="4.85" fill="#8b1057"/>
<circle cx="571.90" cy="788.90" r="4.85" fill="#8b1057"/>
<circle cx="585.90" cy="788.90" r="4.85" fill="#c8177f"/>
<circle cx="599.90" cy="788.90" r="4.85" fill="#c8177f"/>
<circle cx="613.90" cy="788.90" r="4.85" fill="#c8177f"/>
<circle cx="627.90" cy="788.90" r="4.85" fill="#c8177f"/>
<circle cx="641.90" cy="788.90" r="4.85" fill="#c8177f"/>
<circle cx="655.90" cy="788.90" r="4.85" fill="#c8177f"/>
<circle cx="669.90" cy="788.90" r="4.85" fill="#c8177f"/>
<circle cx="683.90" cy="788.90" r="4.85" fill="#c8177f"/>
<circle cx="697.90" cy="788.90" r="4.85" fill="#dd72ab"/>
<circle cx="711.90" cy="788.90" r="4.85" fill="#dd72ab"/>
<circle cx="459.90" cy="800.76" r="4.85" fill="#c8177f"/>
<circle cx="473.90" cy="800.76" r="4.85" fill="#8b1057"/>
<circle cx="487.90" cy="800.76" r="4.85" fill="#c8177f"/>
<circle cx="501.90" cy="800.76" r="4.85" fill="#8b1057"/>
<circle cx="515.90" cy="800.76" r="4.85" fill="#c8177f"/>
<circle cx="529.90" cy="800.76" r="4.85" fill="#c8177f"/>
<circle cx="543.90" cy="800.76" r="4.85" fill="#c8177f"/>
<circle cx="557.90" cy="800.76" r="4.85" fill="#8b1057"/>
<circle cx="571.90" cy="800.76" r="4.85" fill="#c8177f"/>
<circle cx="585.90" cy="800.76" r="4.85" fill="#c8177f"/>
<circle cx="599.90" cy="800.76" r="4.85" fill="#dd72ab"/>
<circle cx="613.90" cy="800.76" r="4.85" fill="#8b1057"/>
<circle cx="627.90" cy="800.76" r="4.85" fill="#8b1057"/>
<circle cx="641.90" cy="800.76" r="4.85" fill="#8b1057"/>
<circle cx="655.90" cy="800.76" r="4.85" fill="#8b1057"/>
<circle cx="669.90" cy="800.76" r="4.85" fill="#efb4d6"/>
<circle cx="683.90" cy="800.76" r="4.85" fill="#efb4d6"/>
<circle cx="697.90" cy="800.76" r="4.85" fill="#dd72ab"/>
<circle cx="711.90" cy="800.76" r="4.85" fill="#dd72ab"/>
<circle cx="459.90" cy="812.63" r="4.85" fill="#6e104c"/>
<circle cx="473.90" cy="812.63" r="4.85" fill="#6e104c"/>
<circle cx="487.90" cy="812.63" r="4.85" fill="#dd72ab"/>
<circle cx="501.90" cy="812.63" r="4.85" fill="#dd72ab"/>
<circle cx="515.90" cy="812.63" r="4.85" fill="#c8177f"/>
<circle cx="529.90" cy="812.63" r="4.85" fill="#c8177f"/>
<circle cx="543.90" cy="812.63" r="4.85" fill="#dd72ab"/>
<circle cx="557.90" cy="812.63" r="4.85" fill="#c8177f"/>
<circle cx="571.90" cy="812.63" r="4.85" fill="#c8177f"/>
<circle cx="585.90" cy="812.63" r="4.85" fill="#c8177f"/>
<circle cx="599.90" cy="812.63" r="4.85" fill="#c8177f"/>
<circle cx="613.90" cy="812.63" r="4.85" fill="#c8177f"/>
<circle cx="627.90" cy="812.63" r="4.85" fill="#c8177f"/>
<circle cx="641.90" cy="812.63" r="4.85" fill="#c8177f"/>
<circle cx="655.90" cy="812.63" r="4.85" fill="#6e104c"/>
<circle cx="669.90" cy="812.63" r="4.85" fill="#8b1057"/>
<circle cx="683.90" cy="812.63" r="4.85" fill="#601049"/>
<circle cx="697.90" cy="812.63" r="4.85" fill="#601049"/>
<circle cx="711.90" cy="812.63" r="4.85" fill="#dd72ab"/>
<circle cx="459.90" cy="824.50" r="4.85" fill="#6e104c"/>
<circle cx="473.90" cy="824.50" r="4.85" fill="#6e104c"/>
<circle cx="487.90" cy="824.50" r="4.85" fill="#6e104c"/>
<circle cx="501.90" cy="824.50" r="4.85" fill="#6e104c"/>
<circle cx="515.90" cy="824.50" r="4.85" fill="#8b1057"/>
<circle cx="529.90" cy="824.50" r="4.85" fill="#8b1057"/>
<circle cx="543.90" cy="824.50" r="4.85" fill="#8b1057"/>
<circle cx="557.90" cy="824.50" r="4.85" fill="#8b1057"/>
<circle cx="571.90" cy="824.50" r="4.85" fill="#8b1057"/>
<circle cx="585.90" cy="824.50" r="4.85" fill="#8b1057"/>
<circle cx="599.90" cy="824.50" r="4.85" fill="#c8177f"/>
<circle cx="613.90" cy="824.50" r="4.85" fill="#c8177f"/>
<circle cx="627.90" cy="824.50" r="4.85" fill="#c8177f"/>
<circle cx="641.90" cy="824.50" r="4.85" fill="#c8177f"/>
<circle cx="655.90" cy="824.50" r="4.85" fill="#c8177f"/>
<circle cx="669.90" cy="824.50" r="4.85" fill="#c8177f"/>
<circle cx="683.90" cy="824.50" r="4.85" fill="#c8177f"/>
<circle cx="697.90" cy="824.50" r="4.85" fill="#dd72ab"/>
<circle cx="711.90" cy="824.50" r="4.85" fill="#dd72ab"/>
<circle cx="459.90" cy="836.36" r="4.4" fill="#fffefb" stroke="#aeaba5" stroke-width="0.7"/>
<circle cx="473.90" cy="836.36" r="4.85" fill="#c8177f"/>
<circle cx="487.90" cy="836.36" r="4.85" fill="#c8177f"/>
<circle cx="501.90" cy="836.36" r="4.85" fill="#8b1057"/>
<circle cx="515.90" cy="836.36" r="4.85" fill="#8b1057"/>
<circle cx="529.90" cy="836.36" r="4.85" fill="#8b1057"/>
<circle cx="543.90" cy="836.36" r="4.85" fill="#8b1057"/>
<circle cx="557.90" cy="836.36" r="4.85" fill="#8b1057"/>
<circle cx="571.90" cy="836.36" r="4.85" fill="#c8177f"/>
<circle cx="585.90" cy="836.36" r="4.85" fill="#c8177f"/>
<circle cx="599.90" cy="836.36" r="4.85" fill="#c8177f"/>
<circle cx="613.90" cy="836.36" r="4.85" fill="#c8177f"/>
<circle cx="627.90" cy="836.36" r="4.85" fill="#dd72ab"/>
<circle cx="641.90" cy="836.36" r="4.85" fill="#dd72ab"/>
<circle cx="655.90" cy="836.36" r="4.85" fill="#dd72ab"/>
<circle cx="669.90" cy="836.36" r="4.85" fill="#dd72ab"/>
<circle cx="683.90" cy="836.36" r="4.85" fill="#dd72ab"/>
<circle cx="697.90" cy="836.36" r="4.85" fill="#dd72ab"/>
<circle cx="711.90" cy="836.36" r="4.85" fill="#dd72ab"/>
<circle cx="459.90" cy="848.23" r="4.4" fill="#fffefb" stroke="#aeaba5" stroke-width="0.7"/>
<circle cx="473.90" cy="848.23" r="4.4" fill="#fffefb" stroke="#aeaba5" stroke-width="0.7"/>
<circle cx="487.90" cy="848.23" r="4.4" fill="#fffefb" stroke="#aeaba5" stroke-width="0.7"/>
<circle cx="501.90" cy="848.23" r="4.4" fill="#fffefb" stroke="#aeaba5" stroke-width="0.7"/>
<circle cx="515.90" cy="848.23" r="4.4" fill="#fffefb" stroke="#aeaba5" stroke-width="0.7"/>
<circle cx="529.90" cy="848.23" r="4.4" fill="#fffefb" stroke="#aeaba5" stroke-width="0.7"/>
<circle cx="543.90" cy="848.23" r="4.4" fill="#fffefb" stroke="#aeaba5" stroke-width="0.7"/>
<circle cx="557.90" cy="848.23" r="4.4" fill="#fffefb" stroke="#aeaba5" stroke-width="0.7"/>
<circle cx="571.90" cy="848.23" r="4.4" fill="#fffefb" stroke="#aeaba5" stroke-width="0.7"/>
<circle cx="585.90" cy="848.23" r="4.4" fill="#fffefb" stroke="#aeaba5" stroke-width="0.7"/>
<circle cx="599.90" cy="848.23" r="4.4" fill="#fffefb" stroke="#aeaba5" stroke-width="0.7"/>
<circle cx="613.90" cy="848.23" r="4.4" fill="#fffefb" stroke="#aeaba5" stroke-width="0.7"/>
<circle cx="627.90" cy="848.23" r="4.85" fill="#8b1057"/>
<circle cx="641.90" cy="848.23" r="4.85" fill="#c8177f"/>
<circle cx="655.90" cy="848.23" r="4.85" fill="#c8177f"/>
<circle cx="669.90" cy="848.23" r="4.85" fill="#c8177f"/>
<circle cx="683.90" cy="848.23" r="4.85" fill="#efb4d6"/>
<circle cx="697.90" cy="848.23" r="4.85" fill="#dd72ab"/>
<circle cx="711.90" cy="848.23" r="4.85" fill="#dd72ab"/>
<circle cx="459.90" cy="860.09" r="4.85" fill="#8b1057"/>
<circle cx="473.90" cy="860.09" r="4.85" fill="#8b1057"/>
<circle cx="487.90" cy="860.09" r="4.85" fill="#8b1057"/>
<circle cx="501.90" cy="860.09" r="4.85" fill="#8b1057"/>
<circle cx="515.90" cy="860.09" r="4.85" fill="#c8177f"/>
<circle cx="529.90" cy="860.09" r="4.85" fill="#c8177f"/>
<circle cx="543.90" cy="860.09" r="4.85" fill="#c8177f"/>
<circle cx="557.90" cy="860.09" r="4.85" fill="#c8177f"/>
<circle cx="571.90" cy="860.09" r="4.85" fill="#c8177f"/>
<circle cx="585.90" cy="860.09" r="4.85" fill="#c8177f"/>
<circle cx="599.90" cy="860.09" r="4.85" fill="#8b1057"/>
<circle cx="613.90" cy="860.09" r="4.85" fill="#c8177f"/>
<circle cx="627.90" cy="860.09" r="4.85" fill="#dd72ab"/>
<circle cx="641.90" cy="860.09" r="4.85" fill="#dd72ab"/>
<circle cx="655.90" cy="860.09" r="4.85" fill="#dd72ab"/>
<circle cx="669.90" cy="860.09" r="4.85" fill="#efb4d6"/>
<circle cx="683.90" cy="860.09" r="4.85" fill="#dd72ab"/>
<circle cx="697.90" cy="860.09" r="4.85" fill="#efb4d6"/>
<circle cx="711.90" cy="860.09" r="4.85" fill="#dd72ab"/>
<circle cx="459.90" cy="871.96" r="4.85" fill="#dd72ab"/>
<circle cx="473.90" cy="871.96" r="4.85" fill="#dd72ab"/>
<circle cx="487.90" cy="871.96" r="4.85" fill="#c8177f"/>
<circle cx="501.90" cy="871.96" r="4.85" fill="#c8177f"/>
<circle cx="515.90" cy="871.96" r="4.85" fill="#c8177f"/>
<circle cx="529.90" cy="871.96" r="4.85" fill="#c8177f"/>
<circle cx="543.90" cy="871.96" r="4.85" fill="#c8177f"/>
<circle cx="557.90" cy="871.96" r="4.85" fill="#c8177f"/>
<circle cx="571.90" cy="871.96" r="4.85" fill="#c8177f"/>
<circle cx="585.90" cy="871.96" r="4.85" fill="#c8177f"/>
<circle cx="599.90" cy="871.96" r="4.85" fill="#dd72ab"/>
<circle cx="613.90" cy="871.96" r="4.85" fill="#c8177f"/>
<circle cx="627.90" cy="871.96" r="4.85" fill="#c8177f"/>
<circle cx="641.90" cy="871.96" r="4.85" fill="#8b1057"/>
<circle cx="655.90" cy="871.96" r="4.85" fill="#dd72ab"/>
<circle cx="669.90" cy="871.96" r="4.85" fill="#dd72ab"/>
<circle cx="683.90" cy="871.96" r="4.85" fill="#dd72ab"/>
<circle cx="697.90" cy="871.96" r="4.85" fill="#dd72ab"/>
<circle cx="711.90" cy="871.96" r="4.85" fill="#dd72ab"/>
<circle cx="459.90" cy="883.82" r="4.4" fill="#fffefb" stroke="#aeaba5" stroke-width="0.7"/>
<circle cx="473.90" cy="883.82" r="4.4" fill="#fffefb" stroke="#aeaba5" stroke-width="0.7"/>
<circle cx="487.90" cy="883.82" r="4.4" fill="#fffefb" stroke="#aeaba5" stroke-width="0.7"/>
<circle cx="501.90" cy="883.82" r="4.4" fill="#fffefb" stroke="#aeaba5" stroke-width="0.7"/>
<circle cx="515.90" cy="883.82" r="4.4" fill="#fffefb" stroke="#aeaba5" stroke-width="0.7"/>
<circle cx="529.90" cy="883.82" r="4.4" fill="#fffefb" stroke="#aeaba5" stroke-width="0.7"/>
<circle cx="543.90" cy="883.82" r="4.4" fill="#fffefb" stroke="#aeaba5" stroke-width="0.7"/>
<circle cx="557.90" cy="883.82" r="4.4" fill="#fffefb" stroke="#aeaba5" stroke-width="0.7"/>
<circle cx="571.90" cy="883.82" r="4.4" fill="#fffefb" stroke="#aeaba5" stroke-width="0.7"/>
<circle cx="585.90" cy="883.82" r="4.4" fill="#fffefb" stroke="#aeaba5" stroke-width="0.7"/>
<circle cx="599.90" cy="883.82" r="4.4" fill="#fffefb" stroke="#aeaba5" stroke-width="0.7"/>
<circle cx="613.90" cy="883.82" r="4.4" fill="#fffefb" stroke="#aeaba5" stroke-width="0.7"/>
<circle cx="627.90" cy="883.82" r="4.4" fill="#fffefb" stroke="#aeaba5" stroke-width="0.7"/>
<circle cx="641.90" cy="883.82" r="4.4" fill="#fffefb" stroke="#aeaba5" stroke-width="0.7"/>
<circle cx="655.90" cy="883.82" r="4.4" fill="#fffefb" stroke="#aeaba5" stroke-width="0.7"/>
<circle cx="669.90" cy="883.82" r="4.85" fill="#c8177f"/>
<circle cx="683.90" cy="883.82" r="4.85" fill="#c8177f"/>
<circle cx="697.90" cy="883.82" r="4.85" fill="#dd72ab"/>
<circle cx="711.90" cy="883.82" r="4.85" fill="#dd72ab"/>
<circle cx="459.90" cy="895.68" r="4.85" fill="#6e104c"/>
<circle cx="473.90" cy="895.68" r="4.85" fill="#6e104c"/>
<circle cx="487.90" cy="895.68" r="4.85" fill="#6e104c"/>
<circle cx="501.90" cy="895.68" r="4.85" fill="#6e104c"/>
<circle cx="515.90" cy="895.68" r="4.85" fill="#601049"/>
<circle cx="529.90" cy="895.68" r="4.85" fill="#6e104c"/>
<circle cx="543.90" cy="895.68" r="4.85" fill="#6e104c"/>
<circle cx="557.90" cy="895.68" r="4.85" fill="#6e104c"/>
<circle cx="571.90" cy="895.68" r="4.85" fill="#6e104c"/>
<circle cx="585.90" cy="895.68" r="4.85" fill="#dd72ab"/>
<circle cx="599.90" cy="895.68" r="4.85" fill="#dd72ab"/>
<circle cx="613.90" cy="895.68" r="4.85" fill="#dd72ab"/>
<circle cx="627.90" cy="895.68" r="4.85" fill="#dd72ab"/>
<circle cx="641.90" cy="895.68" r="4.85" fill="#dd72ab"/>
<circle cx="655.90" cy="895.68" r="4.85" fill="#dd72ab"/>
<circle cx="669.90" cy="895.68" r="4.85" fill="#c8177f"/>
<circle cx="683.90" cy="895.68" r="4.85" fill="#c8177f"/>
<circle cx="697.90" cy="895.68" r="4.85" fill="#c8177f"/>
<circle cx="711.90" cy="895.68" r="4.85" fill="#c8177f"/>
<circle cx="459.90" cy="907.55" r="4.4" fill="#fffefb" stroke="#aeaba5" stroke-width="0.7"/>
<circle cx="473.90" cy="907.55" r="4.85" fill="#6e104c"/>
<circle cx="487.90" cy="907.55" r="4.85" fill="#8b1057"/>
<circle cx="501.90" cy="907.55" r="4.85" fill="#8b1057"/>
<circle cx="515.90" cy="907.55" r="4.85" fill="#6e104c"/>
<circle cx="529.90" cy="907.55" r="4.85" fill="#8b1057"/>
<circle cx="543.90" cy="907.55" r="4.85" fill="#8b1057"/>
<circle cx="557.90" cy="907.55" r="4.85" fill="#c8177f"/>
<circle cx="571.90" cy="907.55" r="4.85" fill="#c8177f"/>
<circle cx="585.90" cy="907.55" r="4.85" fill="#c8177f"/>
<circle cx="599.90" cy="907.55" r="4.85" fill="#8b1057"/>
<circle cx="613.90" cy="907.55" r="4.85" fill="#8b1057"/>
<circle cx="627.90" cy="907.55" r="4.85" fill="#c8177f"/>
<circle cx="641.90" cy="907.55" r="4.85" fill="#c8177f"/>
<circle cx="655.90" cy="907.55" r="4.85" fill="#c8177f"/>
<circle cx="669.90" cy="907.55" r="4.85" fill="#c8177f"/>
<circle cx="683.90" cy="907.55" r="4.85" fill="#c8177f"/>
<circle cx="697.90" cy="907.55" r="4.85" fill="#c8177f"/>
<circle cx="711.90" cy="907.55" r="4.85" fill="#c8177f"/>
<circle cx="459.90" cy="919.41" r="4.85" fill="#601049"/>
<circle cx="473.90" cy="919.41" r="4.85" fill="#6e104c"/>
<circle cx="487.90" cy="919.41" r="4.85" fill="#6e104c"/>
<circle cx="501.90" cy="919.41" r="4.85" fill="#6e104c"/>
<circle cx="515.90" cy="919.41" r="4.85" fill="#6e104c"/>
<circle cx="529.90" cy="919.41" r="4.85" fill="#8b1057"/>
<circle cx="543.90" cy="919.41" r="4.85" fill="#8b1057"/>
<circle cx="557.90" cy="919.41" r="4.85" fill="#8b1057"/>
<circle cx="571.90" cy="919.41" r="4.85" fill="#8b1057"/>
<circle cx="585.90" cy="919.41" r="4.85" fill="#c8177f"/>
<circle cx="599.90" cy="919.41" r="4.85" fill="#c8177f"/>
<circle cx="613.90" cy="919.41" r="4.85" fill="#c8177f"/>
<circle cx="627.90" cy="919.41" r="4.85" fill="#c8177f"/>
<circle cx="641.90" cy="919.41" r="4.85" fill="#8b1057"/>
<circle cx="655.90" cy="919.41" r="4.85" fill="#8b1057"/>
<circle cx="669.90" cy="919.41" r="4.85" fill="#8b1057"/>
<circle cx="683.90" cy="919.41" r="4.85" fill="#c8177f"/>
<circle cx="697.90" cy="919.41" r="4.85" fill="#c8177f"/>
<circle cx="711.90" cy="919.41" r="4.85" fill="#c8177f"/>
<circle cx="459.90" cy="931.28" r="4.85" fill="#8b1057"/>
<circle cx="473.90" cy="931.28" r="4.85" fill="#8b1057"/>
<circle cx="487.90" cy="931.28" r="4.85" fill="#8b1057"/>
<circle cx="501.90" cy="931.28" r="4.85" fill="#c8177f"/>
<circle cx="515.90" cy="931.28" r="4.85" fill="#8b1057"/>
<circle cx="529.90" cy="931.28" r="4.85" fill="#8b1057"/>
<circle cx="543.90" cy="931.28" r="4.85" fill="#8b1057"/>
<circle cx="557.90" cy="931.28" r="4.85" fill="#8b1057"/>
<circle cx="571.90" cy="931.28" r="4.85" fill="#8b1057"/>
<circle cx="585.90" cy="931.28" r="4.85" fill="#8b1057"/>
<circle cx="599.90" cy="931.28" r="4.85" fill="#8b1057"/>
<circle cx="613.90" cy="931.28" r="4.85" fill="#c8177f"/>
<circle cx="627.90" cy="931.28" r="4.85" fill="#c8177f"/>
<circle cx="641.90" cy="931.28" r="4.85" fill="#c8177f"/>
<circle cx="655.90" cy="931.28" r="4.85" fill="#c8177f"/>
<circle cx="669.90" cy="931.28" r="4.85" fill="#c8177f"/>
<circle cx="683.90" cy="931.28" r="4.85" fill="#c8177f"/>
<circle cx="697.90" cy="931.28" r="4.85" fill="#c8177f"/>
<circle cx="711.90" cy="931.28" r="4.85" fill="#c8177f"/>
<circle cx="459.90" cy="943.14" r="4.85" fill="#6e104c"/>
<circle cx="473.90" cy="943.14" r="4.85" fill="#6e104c"/>
<circle cx="487.90" cy="943.14" r="4.85" fill="#6e104c"/>
<circle cx="501.90" cy="943.14" r="4.85" fill="#6e104c"/>
<circle cx="515.90" cy="943.14" r="4.85" fill="#601049"/>
<circle cx="529.90" cy="943.14" r="4.85" fill="#6e104c"/>
<circle cx="543.90" cy="943.14" r="4.85" fill="#6e104c"/>
<circle cx="557.90" cy="943.14" r="4.85" fill="#6e104c"/>
<circle cx="571.90" cy="943.14" r="4.85" fill="#6e104c"/>
<circle cx="585.90" cy="943.14" r="4.85" fill="#6e104c"/>
<circle cx="599.90" cy="943.14" r="4.85" fill="#6e104c"/>
<circle cx="613.90" cy="943.14" r="4.85" fill="#6e104c"/>
<circle cx="627.90" cy="943.14" r="4.85" fill="#601049"/>
<circle cx="641.90" cy="943.14" r="4.85" fill="#601049"/>
<circle cx="655.90" cy="943.14" r="4.85" fill="#8b1057"/>
<circle cx="669.90" cy="943.14" r="4.85" fill="#c8177f"/>
<circle cx="683.90" cy="943.14" r="4.85" fill="#c8177f"/>
<circle cx="697.90" cy="943.14" r="4.85" fill="#c8177f"/>
<circle cx="711.90" cy="943.14" r="4.85" fill="#c8177f"/>
<circle cx="459.90" cy="955.01" r="4.4" fill="#fffefb" stroke="#aeaba5" stroke-width="0.7"/>
<circle cx="473.90" cy="955.01" r="4.4" fill="#fffefb" stroke="#aeaba5" stroke-width="0.7"/>
<circle cx="487.90" cy="955.01" r="4.85" fill="#4a1043"/>
<circle cx="501.90" cy="955.01" r="4.85" fill="#4a1043"/>
<circle cx="515.90" cy="955.01" r="4.85" fill="#601049"/>
<circle cx="529.90" cy="955.01" r="4.85" fill="#601049"/>
<circle cx="543.90" cy="955.01" r="4.85" fill="#601049"/>
<circle cx="557.90" cy="955.01" r="4.85" fill="#601049"/>
<circle cx="571.90" cy="955.01" r="4.85" fill="#6e104c"/>
<circle cx="585.90" cy="955.01" r="4.85" fill="#6e104c"/>
<circle cx="599.90" cy="955.01" r="4.85" fill="#6e104c"/>
<circle cx="613.90" cy="955.01" r="4.85" fill="#6e104c"/>
<circle cx="627.90" cy="955.01" r="4.85" fill="#8b1057"/>
<circle cx="641.90" cy="955.01" r="4.85" fill="#8b1057"/>
<circle cx="655.90" cy="955.01" r="4.85" fill="#6e104c"/>
<circle cx="669.90" cy="955.01" r="4.85" fill="#8b1057"/>
<circle cx="683.90" cy="955.01" r="4.85" fill="#8b1057"/>
<circle cx="697.90" cy="955.01" r="4.85" fill="#8b1057"/>
<circle cx="711.90" cy="955.01" r="4.85" fill="#8b1057"/>
<circle cx="459.90" cy="966.88" r="4.85" fill="#6e104c"/>
<circle cx="473.90" cy="966.88" r="4.85" fill="#601049"/>
<circle cx="487.90" cy="966.88" r="4.85" fill="#8b1057"/>
<circle cx="501.90" cy="966.88" r="4.85" fill="#8b1057"/>
<circle cx="515.90" cy="966.88" r="4.85" fill="#8b1057"/>
<circle cx="529.90" cy="966.88" r="4.85" fill="#8b1057"/>
<circle cx="543.90" cy="966.88" r="4.85" fill="#6e104c"/>
<circle cx="557.90" cy="966.88" r="4.85" fill="#6e104c"/>
<circle cx="571.90" cy="966.88" r="4.85" fill="#6e104c"/>
<circle cx="585.90" cy="966.88" r="4.85" fill="#6e104c"/>
<circle cx="599.90" cy="966.88" r="4.85" fill="#6e104c"/>
<circle cx="613.90" cy="966.88" r="4.85" fill="#6e104c"/>
<circle cx="627.90" cy="966.88" r="4.85" fill="#6e104c"/>
<circle cx="641.90" cy="966.88" r="4.85" fill="#8b1057"/>
<circle cx="655.90" cy="966.88" r="4.85" fill="#8b1057"/>
<circle cx="669.90" cy="966.88" r="4.85" fill="#8b1057"/>
<circle cx="683.90" cy="966.88" r="4.85" fill="#8b1057"/>
<circle cx="697.90" cy="966.88" r="4.85" fill="#c8177f"/>
<circle cx="711.90" cy="966.88" r="4.85" fill="#601049"/>
<circle cx="459.90" cy="978.74" r="4.4" fill="#fffefb" stroke="#aeaba5" stroke-width="0.7"/>
<circle cx="473.90" cy="978.74" r="4.85" fill="#601049"/>
<circle cx="487.90" cy="978.74" r="4.85" fill="#601049"/>
<circle cx="501.90" cy="978.74" r="4.85" fill="#601049"/>
<circle cx="515.90" cy="978.74" r="4.85" fill="#601049"/>
<circle cx="529.90" cy="978.74" r="4.85" fill="#601049"/>
<circle cx="543.90" cy="978.74" r="4.85" fill="#601049"/>
<circle cx="557.90" cy="978.74" r="4.85" fill="#601049"/>
<circle cx="571.90" cy="978.74" r="4.85" fill="#601049"/>
<circle cx="585.90" cy="978.74" r="4.85" fill="#601049"/>
<circle cx="599.90" cy="978.74" r="4.85" fill="#6e104c"/>
<circle cx="613.90" cy="978.74" r="4.85" fill="#6e104c"/>
<circle cx="627.90" cy="978.74" r="4.85" fill="#6e104c"/>
<circle cx="641.90" cy="978.74" r="4.85" fill="#6e104c"/>
<circle cx="655.90" cy="978.74" r="4.85" fill="#8b1057"/>
<circle cx="669.90" cy="978.74" r="4.85" fill="#8b1057"/>
<circle cx="683.90" cy="978.74" r="4.85" fill="#8b1057"/>
<circle cx="697.90" cy="978.74" r="4.85" fill="#6e104c"/>
<circle cx="711.90" cy="978.74" r="4.85" fill="#601049"/>
<circle cx="459.90" cy="990.61" r="4.85" fill="#6e104c"/>
<circle cx="473.90" cy="990.61" r="4.85" fill="#601049"/>
<circle cx="487.90" cy="990.61" r="4.85" fill="#601049"/>
<circle cx="501.90" cy="990.61" r="4.85" fill="#6e104c"/>
<circle cx="515.90" cy="990.61" r="4.85" fill="#6e104c"/>
<circle cx="529.90" cy="990.61" r="4.85" fill="#6e104c"/>
<circle cx="543.90" cy="990.61" r="4.85" fill="#6e104c"/>
<circle cx="557.90" cy="990.61" r="4.85" fill="#601049"/>
<circle cx="571.90" cy="990.61" r="4.85" fill="#601049"/>
<circle cx="585.90" cy="990.61" r="4.85" fill="#601049"/>
<circle cx="599.90" cy="990.61" r="4.85" fill="#601049"/>
<circle cx="613.90" cy="990.61" r="4.85" fill="#6e104c"/>
<circle cx="627.90" cy="990.61" r="4.85" fill="#6e104c"/>
<circle cx="641.90" cy="990.61" r="4.85" fill="#6e104c"/>
<circle cx="655.90" cy="990.61" r="4.85" fill="#6e104c"/>
<circle cx="669.90" cy="990.61" r="4.85" fill="#6e104c"/>
<circle cx="683.90" cy="990.61" r="4.85" fill="#6e104c"/>
<circle cx="697.90" cy="990.61" r="4.85" fill="#6e104c"/>
<circle cx="711.90" cy="990.61" r="4.85" fill="#601049"/>
<circle cx="459.90" cy="1002.47" r="4.4" fill="#fffefb" stroke="#aeaba5" stroke-width="0.7"/>
<circle cx="473.90" cy="1002.47" r="4.4" fill="#fffefb" stroke="#aeaba5" stroke-width="0.7"/>
<circle cx="487.90" cy="1002.47" r="4.4" fill="#fffefb" stroke="#aeaba5" stroke-width="0.7"/>
<circle cx="501.90" cy="1002.47" r="4.4" fill="#fffefb" stroke="#aeaba5" stroke-width="0.7"/>
<circle cx="515.90" cy="1002.47" r="4.4" fill="#fffefb" stroke="#aeaba5" stroke-width="0.7"/>
<circle cx="529.90" cy="1002.47" r="4.4" fill="#fffefb" stroke="#aeaba5" stroke-width="0.7"/>
<circle cx="543.90" cy="1002.47" r="4.4" fill="#fffefb" stroke="#aeaba5" stroke-width="0.7"/>
<circle cx="557.90" cy="1002.47" r="4.4" fill="#fffefb" stroke="#aeaba5" stroke-width="0.7"/>
<circle cx="571.90" cy="1002.47" r="4.4" fill="#fffefb" stroke="#aeaba5" stroke-width="0.7"/>
<circle cx="585.90" cy="1002.47" r="4.4" fill="#fffefb" stroke="#aeaba5" stroke-width="0.7"/>
<circle cx="599.90" cy="1002.47" r="4.4" fill="#fffefb" stroke="#aeaba5" stroke-width="0.7"/>
<circle cx="613.90" cy="1002.47" r="4.4" fill="#fffefb" stroke="#aeaba5" stroke-width="0.7"/>
<circle cx="627.90" cy="1002.47" r="4.4" fill="#fffefb" stroke="#aeaba5" stroke-width="0.7"/>
<circle cx="641.90" cy="1002.47" r="4.4" fill="#fffefb" stroke="#aeaba5" stroke-width="0.7"/>
<circle cx="655.90" cy="1002.47" r="4.4" fill="#fffefb" stroke="#aeaba5" stroke-width="0.7"/>
<circle cx="669.90" cy="1002.47" r="4.4" fill="#fffefb" stroke="#aeaba5" stroke-width="0.7"/>
<circle cx="683.90" cy="1002.47" r="4.4" fill="#fffefb" stroke="#aeaba5" stroke-width="0.7"/>
<circle cx="697.90" cy="1002.47" r="4.4" fill="#fffefb" stroke="#aeaba5" stroke-width="0.7"/>
<circle cx="711.90" cy="1002.47" r="4.4" fill="#fffefb" stroke="#aeaba5" stroke-width="0.7"/>
<circle cx="711.90" cy="551.60" r="6.1" fill="none" stroke="#2b2b2b" stroke-width="1.2"/>
<circle cx="711.90" cy="563.47" r="6.1" fill="none" stroke="#2b2b2b" stroke-width="1.2"/>
<circle cx="711.90" cy="575.33" r="6.1" fill="none" stroke="#2b2b2b" stroke-width="1.2"/>
<circle cx="711.90" cy="587.20" r="6.1" fill="none" stroke="#2b2b2b" stroke-width="1.2"/>
<circle cx="711.90" cy="693.98" r="6.1" fill="none" stroke="#2b2b2b" stroke-width="1.2"/>
<circle cx="655.90" cy="741.44" r="6.1" fill="none" stroke="#2b2b2b" stroke-width="1.2"/>
<circle cx="501.90" cy="955.01" r="6.1" fill="none" stroke="#2b2b2b" stroke-width="1.2"/>
<rect x="459.30" y="541" width="1.2" height="3" fill="#2b2b2b"/>
<rect x="501.30" y="541" width="1.2" height="3" fill="#2b2b2b"/>
<rect x="543.30" y="541" width="1.2" height="3" fill="#2b2b2b"/>
<rect x="585.30" y="541" width="1.2" height="3" fill="#2b2b2b"/>
<rect x="627.30" y="541" width="1.2" height="3" fill="#2b2b2b"/>
<rect x="669.30" y="541" width="1.2" height="3" fill="#2b2b2b"/>
<rect x="711.30" y="541" width="1.2" height="3" fill="#2b2b2b"/>
<rect x="782.3" y="547.90" width="4.43" height="7.4" fill="#b5d785"/>
<rect x="782.3" y="559.76" width="17.70" height="7.4" fill="#468f30"/>
<rect x="782.3" y="571.63" width="13.28" height="7.4" fill="#7aba42"/>
<rect x="782.3" y="583.50" width="11.80" height="7.4" fill="#7aba42"/>
<rect x="782.3" y="595.36" width="14.75" height="7.4" fill="#7aba42"/>
<rect x="782.3" y="607.23" width="11.80" height="7.4" fill="#7aba42"/>
<rect x="782.3" y="619.09" width="4.43" height="7.4" fill="#b5d785"/>
<rect x="782.3" y="630.95" width="19.18" height="7.4" fill="#468f30"/>
<rect x="782.3" y="642.82" width="29.50" height="7.4" fill="#25601f"/>
<rect x="782.3" y="654.68" width="14.75" height="7.4" fill="#7aba42"/>
<rect x="782.3" y="666.55" width="28.03" height="7.4" fill="#25601f"/>
<rect x="782.3" y="678.41" width="41.30" height="7.4" fill="#25601f"/>
<rect x="782.3" y="690.28" width="2.95" height="7.4" fill="#b5d785"/>
<rect x="782.3" y="702.14" width="38.35" height="7.4" fill="#25601f"/>
<rect x="782.3" y="714.01" width="8.85" height="7.4" fill="#7aba42"/>
<rect x="782.3" y="725.88" width="22.12" height="7.4" fill="#468f30"/>
<rect x="782.3" y="737.74" width="5.90" height="7.4" fill="#b5d785"/>
<rect x="782.3" y="749.61" width="2.95" height="7.4" fill="#b5d785"/>
<rect x="782.3" y="761.47" width="16.23" height="7.4" fill="#7aba42"/>
<rect x="782.3" y="773.34" width="20.65" height="7.4" fill="#468f30"/>
<rect x="782.3" y="785.20" width="8.85" height="7.4" fill="#7aba42"/>
<rect x="782.3" y="797.06" width="11.80" height="7.4" fill="#7aba42"/>
<rect x="782.3" y="808.93" width="23.60" height="7.4" fill="#468f30"/>
<rect x="782.3" y="820.79" width="20.65" height="7.4" fill="#468f30"/>
<rect x="782.3" y="832.66" width="8.85" height="7.4" fill="#7aba42"/>
<rect x="782.3" y="844.52" width="14.75" height="7.4" fill="#7aba42"/>
<rect x="782.3" y="856.39" width="14.75" height="7.4" fill="#7aba42"/>
<rect x="782.3" y="880.12" width="1.48" height="7.4" fill="#b5d785"/>
<rect x="782.3" y="891.98" width="14.75" height="7.4" fill="#7aba42"/>
<rect x="782.3" y="903.85" width="11.80" height="7.4" fill="#7aba42"/>
<rect x="782.3" y="915.71" width="17.70" height="7.4" fill="#468f30"/>
<rect x="782.3" y="927.58" width="4.43" height="7.4" fill="#b5d785"/>
<rect x="782.3" y="939.44" width="14.75" height="7.4" fill="#7aba42"/>
<rect x="782.3" y="951.31" width="19.18" height="7.4" fill="#468f30"/>
<rect x="782.3" y="963.17" width="4.43" height="7.4" fill="#b5d785"/>
<rect x="782.3" y="975.04" width="5.90" height="7.4" fill="#b5d785"/>
<rect x="782.3" y="986.90" width="5.90" height="7.4" fill="#b5d785"/>
<rect x="779.80" y="676.51" width="64.80" height="12" fill="#fdfbf5" fill-opacity="0" stroke="#3a3a3a" stroke-width="0.9"/>
<rect x="779.80" y="700.25" width="64.80" height="12" fill="#fdfbf5" fill-opacity="0" stroke="#3a3a3a" stroke-width="0.9"/>
<rect x="762.50" y="866.36" width="23.50" height="12" fill="#fdfbf5" fill-opacity="0" stroke="#3a3a3a" stroke-width="0.9"/>
<rect x="781.2" y="868.06" width="1.5" height="7.4" fill="#6e104c"/>
<rect x="745.80" y="454.30" width="261.80" height="48.10" rx="6" fill="#f4f2ec"/>
<rect x="866.40" y="562.00" width="228.30" height="57.80" rx="6" fill="#f4f2ec"/>
<rect x="904.70" y="714.70" width="143.80" height="43.90" rx="6" fill="#f4f2ec"/>
<rect x="859.70" y="795.50" width="228.70" height="55.90" rx="6" fill="#f4f2ec"/>
<rect x="876.00" y="978.40" width="145.80" height="44.10" rx="6" fill="#f4f2ec"/>
<rect x="492.80" y="1021.50" width="137.70" height="45.30" rx="6" fill="#f4f2ec"/>
<defs><marker id="ah" viewBox="0 0 10 10" refX="8" refY="5" markerUnits="userSpaceOnUse" markerWidth="6.2" markerHeight="6.2" orient="auto-start-reverse"><path d="M0 0.8 L10 5 L0 9.2 z" fill="#2b2b2b"/></marker></defs>
<path d="M716 545 C732 538 743 524 747.5 508" fill="none" stroke="#2b2b2b" stroke-width="1.1" marker-end="url(#ah)"/>
<path d="M818.6 694 C850 697 878 690 880.6 630" fill="none" stroke="#2b2b2b" stroke-width="1.1" marker-end="url(#ah)"/>
<path d="M849 704 C868 695 890 699 904 710.5" fill="none" stroke="#2b2b2b" stroke-width="1.1" marker-end="url(#ah)"/>
<path d="M803.5 741 C835 742 856 760 860.6 789.5" fill="none" stroke="#2b2b2b" stroke-width="1.1" marker-end="url(#ah)"/>
<path d="M792 871.8 C840 878 876 920 880.8 970" fill="none" stroke="#2b2b2b" stroke-width="1.1" marker-end="url(#ah)"/>
<path d="M499.5 958 C480 970 474 998 490.5 1018" fill="none" stroke="#2b2b2b" stroke-width="1.1" marker-end="url(#ah)"/>
<circle cx="810.00" cy="258.8" r="4.6" fill="#4a1043"/>
<circle cx="839.00" cy="258.8" r="4.6" fill="#5a1047"/>
<circle cx="868.00" cy="258.8" r="4.6" fill="#6e104c"/>
<circle cx="897.00" cy="258.8" r="4.6" fill="#8b1057"/>
<circle cx="926.00" cy="258.8" r="4.6" fill="#c8177f"/>
<circle cx="955.00" cy="258.8" r="4.6" fill="#dd72ab"/>
<circle cx="984.00" cy="258.8" r="4.6" fill="#efb4d6"/>
<circle cx="1013.00" cy="258.8" r="4.6" fill="#b5d785"/>
<circle cx="1042.00" cy="258.8" r="4.6" fill="#7aba42"/>
<circle cx="1071.00" cy="258.8" r="4.6" fill="#468f30"/>
<circle cx="810" cy="291.3" r="4.3" fill="#faf8f3" stroke="#a9a6a0" stroke-width="0.7"/>
<rect x="325.5" y="526.5" width="425.5" height="480.5" fill="none" stroke="#ff4545" stroke-width="1.55"/>
<rect x="321.70" y="522.70" width="7.6" height="7.6" fill="#fff" stroke="#ff4545" stroke-width="1.4"/>
<rect x="534.70" y="522.70" width="7.6" height="7.6" fill="#fff" stroke="#ff4545" stroke-width="1.4"/>
<rect x="747.20" y="522.70" width="7.6" height="7.6" fill="#fff" stroke="#ff4545" stroke-width="1.4"/>
<rect x="321.70" y="762.70" width="7.6" height="7.6" fill="#fff" stroke="#ff4545" stroke-width="1.4"/>
<rect x="747.20" y="762.70" width="7.6" height="7.6" fill="#fff" stroke="#ff4545" stroke-width="1.4"/>
<rect x="321.70" y="1003.20" width="7.6" height="7.6" fill="#fff" stroke="#ff4545" stroke-width="1.4"/>
<rect x="534.70" y="1003.20" width="7.6" height="7.6" fill="#fff" stroke="#ff4545" stroke-width="1.4"/>
<rect x="747.20" y="1003.20" width="7.6" height="7.6" fill="#fff" stroke="#ff4545" stroke-width="1.4"/>
</svg>
<div class="t" style="left:327.00px;top:222px;font-size:36.4px;line-height:36.4px;color:#262626;letter-spacing:0.977px;-webkit-text-stroke:1.35px #262626;">Seats held by women in</div>
<div class="t" style="left:327.00px;top:259px;font-size:36.4px;line-height:36.4px;color:#262626;letter-spacing:1.748px;-webkit-text-stroke:1.35px #262626;">national parliaments</div>
<div class="t" style="left:327.00px;top:309px;font-size:16.6px;line-height:16.6px;color:#555555;letter-spacing:0.412px;">The proportion of women in national parliaments in</div>
<div class="t" style="left:327.00px;top:329px;font-size:16.6px;line-height:16.6px;color:#555555;letter-spacing:0.198px;">Europe is on average rising, but women are still</div>
<div class="t" style="left:327.00px;top:349px;font-size:16.6px;line-height:16.6px;color:#555555;letter-spacing:0.288px;">extremely underrepresented in most countries.</div>
<div class="t" style="left:805.00px;top:228px;font-size:14.5px;line-height:14.5px;color:#262626;letter-spacing:0.291px;-webkit-text-stroke:0.55px #262626;">legend</div>
<div class="t" style="left:803.85px;top:268px;font-size:7.7px;line-height:7.7px;color:#262626;font-weight:bold;letter-spacing:-0.479px;">&lt;5</div>
<div class="t" style="left:812.45px;top:271px;font-size:4.3px;line-height:4.3px;color:#262626;font-weight:bold;">%</div>
<div class="t" style="left:831.00px;top:268px;font-size:7.7px;line-height:7.7px;color:#262626;font-weight:bold;letter-spacing:0.435px;">5-9</div>
<div class="t" style="left:843.30px;top:271px;font-size:4.3px;line-height:4.3px;color:#262626;font-weight:bold;">%</div>
<div class="t" style="left:856.10px;top:268px;font-size:7.7px;line-height:7.7px;color:#262626;font-weight:bold;letter-spacing:0.026px;">10-14</div>
<div class="t" style="left:876.20px;top:271px;font-size:4.3px;line-height:4.3px;color:#262626;font-weight:bold;">%</div>
<div class="t" style="left:885.10px;top:268px;font-size:7.7px;line-height:7.7px;color:#262626;font-weight:bold;letter-spacing:0.026px;">15-19</div>
<div class="t" style="left:905.20px;top:271px;font-size:4.3px;line-height:4.3px;color:#262626;font-weight:bold;">%</div>
<div class="t" style="left:914.10px;top:268px;font-size:7.7px;line-height:7.7px;color:#262626;font-weight:bold;letter-spacing:0.026px;">20-24</div>
<div class="t" style="left:934.20px;top:271px;font-size:4.3px;line-height:4.3px;color:#262626;font-weight:bold;">%</div>
<div class="t" style="left:943.10px;top:268px;font-size:7.7px;line-height:7.7px;color:#262626;font-weight:bold;letter-spacing:0.026px;">25-29</div>
<div class="t" style="left:963.20px;top:271px;font-size:4.3px;line-height:4.3px;color:#262626;font-weight:bold;">%</div>
<div class="t" style="left:972.10px;top:268px;font-size:7.7px;line-height:7.7px;color:#262626;font-weight:bold;letter-spacing:0.026px;">30-34</div>
<div class="t" style="left:992.20px;top:271px;font-size:4.3px;line-height:4.3px;color:#262626;font-weight:bold;">%</div>
<div class="t" style="left:1001.10px;top:268px;font-size:7.7px;line-height:7.7px;color:#262626;font-weight:bold;letter-spacing:0.026px;">35-39</div>
<div class="t" style="left:1021.20px;top:271px;font-size:4.3px;line-height:4.3px;color:#262626;font-weight:bold;">%</div>
<div class="t" style="left:1030.10px;top:268px;font-size:7.7px;line-height:7.7px;color:#262626;font-weight:bold;letter-spacing:0.026px;">40-44</div>
<div class="t" style="left:1050.20px;top:271px;font-size:4.3px;line-height:4.3px;color:#262626;font-weight:bold;">%</div>
<div class="t" style="left:1059.10px;top:268px;font-size:7.7px;line-height:7.7px;color:#262626;font-weight:bold;letter-spacing:0.026px;">45-50</div>
<div class="t" style="left:1079.20px;top:271px;font-size:4.3px;line-height:4.3px;color:#262626;font-weight:bold;">%</div>
<div class="t" style="left:797.00px;top:303px;font-size:6.8px;line-height:6.8px;color:#262626;font-weight:bold;letter-spacing:0.303px;">no data</div>
<div class="t" style="left:453.00px;top:452px;font-size:10.2px;line-height:10.2px;color:#262626;letter-spacing:-0.087px;">Average per year in %</div>
<div class="t" style="left:453.42px;top:475px;font-size:8.6px;line-height:8.6px;color:#c8177f;font-weight:bold;">23</div>
<div class="t" style="left:467.49px;top:477px;font-size:8.6px;line-height:8.6px;color:#c8177f;font-weight:bold;">22</div>
<div class="t" style="left:481.56px;top:475px;font-size:8.6px;line-height:8.6px;color:#c8177f;font-weight:bold;">23</div>
<div class="t" style="left:495.63px;top:475px;font-size:8.6px;line-height:8.6px;color:#c8177f;font-weight:bold;">23</div>
<div class="t" style="left:509.70px;top:475px;font-size:8.6px;line-height:8.6px;color:#c8177f;font-weight:bold;">23</div>
<div class="t" style="left:523.77px;top:474px;font-size:8.6px;line-height:8.6px;color:#c8177f;font-weight:bold;">24</div>
<div class="t" style="left:537.84px;top:474px;font-size:8.6px;line-height:8.6px;color:#c8177f;font-weight:bold;">24</div>
<div class="t" style="left:551.91px;top:474px;font-size:8.6px;line-height:8.6px;color:#c8177f;font-weight:bold;">24</div>
<div class="t" style="left:565.98px;top:473px;font-size:8.6px;line-height:8.6px;color:#c8177f;font-weight:bold;">25</div>
<div class="t" style="left:580.05px;top:471px;font-size:8.6px;line-height:8.6px;color:#dd72ab;">26</div>
<div class="t" style="left:594.12px;top:470px;font-size:8.6px;line-height:8.6px;color:#dd72ab;">27</div>
<div class="t" style="left:608.19px;top:470px;font-size:8.6px;line-height:8.6px;color:#dd72ab;">27</div>
<div class="t" style="left:622.26px;top:470px;font-size:8.6px;line-height:8.6px;color:#dd72ab;">27</div>
<div class="t" style="left:636.33px;top:470px;font-size:8.6px;line-height:8.6px;color:#dd72ab;">27</div>
<div class="t" style="left:650.40px;top:468px;font-size:8.6px;line-height:8.6px;color:#dd72ab;font-weight:bold;">28</div>
<div class="t" style="left:664.47px;top:467px;font-size:8.6px;line-height:8.6px;color:#dd72ab;font-weight:bold;">29</div>
<div class="t" style="left:678.54px;top:466px;font-size:8.6px;line-height:8.6px;color:#dd72ab;font-weight:bold;">30</div>
<div class="t" style="left:692.61px;top:466px;font-size:8.6px;line-height:8.6px;color:#efb4d6;">30</div>
<div class="t" style="left:706.68px;top:463px;font-size:8.6px;line-height:8.6px;color:#efb4d6;">32</div>
<div class="t" style="left:450.40px;top:531px;font-size:9.2px;line-height:9.2px;color:#262626;letter-spacing:-0.489px;">2003</div>
<div class="t" style="left:496.40px;top:531px;font-size:9.2px;line-height:9.2px;color:#262626;letter-spacing:-0.495px;">'06</div>
<div class="t" style="left:538.40px;top:531px;font-size:9.2px;line-height:9.2px;color:#262626;letter-spacing:-0.495px;">'09</div>
<div class="t" style="left:580.40px;top:531px;font-size:9.2px;line-height:9.2px;color:#262626;letter-spacing:-0.495px;">'12</div>
<div class="t" style="left:622.40px;top:531px;font-size:9.2px;line-height:9.2px;color:#262626;letter-spacing:-0.495px;">'15</div>
<div class="t" style="left:664.40px;top:531px;font-size:9.2px;line-height:9.2px;color:#262626;letter-spacing:-0.495px;">'18</div>
<div class="t" style="left:702.40px;top:531px;font-size:9.2px;line-height:9.2px;color:#262626;letter-spacing:-0.489px;">2021</div>
<div class="t" style="left:410.67px;top:547px;font-size:9.8px;line-height:9.8px;color:#262626;font-weight:bold;letter-spacing:-0.481px;">Sweden</div>
<div class="t" style="left:721.80px;top:548px;font-size:10.0px;line-height:10.0px;color:#468f30;letter-spacing:-0.701px;">48%</div>
<div class="t" style="left:788.92px;top:549px;font-size:8.0px;line-height:8.0px;color:#b5d785;font-weight:bold;letter-spacing:-0.456px;">+3</div>
<div class="t" style="left:413.73px;top:559px;font-size:9.8px;line-height:9.8px;color:#262626;font-weight:bold;letter-spacing:-0.366px;">Iceland</div>
<div class="t" style="left:721.80px;top:560px;font-size:10.0px;line-height:10.0px;color:#468f30;letter-spacing:-0.701px;">48%</div>
<div class="t" style="left:802.20px;top:560px;font-size:8.0px;line-height:8.0px;color:#468f30;font-weight:bold;letter-spacing:-0.339px;">+12</div>
<div class="t" style="left:412.72px;top:571px;font-size:9.8px;line-height:9.8px;color:#262626;font-weight:bold;letter-spacing:-0.377px;">Finland</div>
<div class="t" style="left:721.80px;top:572px;font-size:10.0px;line-height:10.0px;color:#468f30;letter-spacing:-0.701px;">46%</div>
<div class="t" style="left:797.77px;top:572px;font-size:8.0px;line-height:8.0px;color:#7aba42;font-weight:bold;letter-spacing:-0.456px;">+9</div>
<div class="t" style="left:412.20px;top:583px;font-size:9.8px;line-height:9.8px;color:#262626;font-weight:bold;letter-spacing:-0.460px;">Norway</div>
<div class="t" style="left:721.80px;top:584px;font-size:10.0px;line-height:10.0px;color:#468f30;letter-spacing:-0.701px;">45%</div>
<div class="t" style="left:796.30px;top:584px;font-size:8.0px;line-height:8.0px;color:#7aba42;font-weight:bold;letter-spacing:-0.456px;">+8</div>
<div class="t" style="left:409.15px;top:595px;font-size:9.8px;line-height:9.8px;color:#262626;font-weight:bold;letter-spacing:-0.419px;">Belgium</div>
<div class="t" style="left:721.80px;top:596px;font-size:10.0px;line-height:10.0px;color:#7aba42;letter-spacing:-0.701px;">44%</div>
<div class="t" style="left:799.25px;top:596px;font-size:8.0px;line-height:8.0px;color:#7aba42;font-weight:bold;letter-spacing:-0.339px;">+10</div>
<div class="t" style="left:413.73px;top:607px;font-size:9.8px;line-height:9.8px;color:#262626;font-weight:bold;letter-spacing:-0.366px;">Austria</div>
<div class="t" style="left:721.80px;top:607px;font-size:10.0px;line-height:10.0px;color:#7aba42;letter-spacing:-0.701px;">42%</div>
<div class="t" style="left:796.30px;top:608px;font-size:8.0px;line-height:8.0px;color:#7aba42;font-weight:bold;letter-spacing:-0.456px;">+8</div>
<div class="t" style="left:406.08px;top:618px;font-size:9.8px;line-height:9.8px;color:#262626;font-weight:bold;letter-spacing:-0.454px;">Denmark</div>
<div class="t" style="left:721.80px;top:619px;font-size:10.0px;line-height:10.0px;color:#7aba42;letter-spacing:-0.701px;">41%</div>
<div class="t" style="left:788.92px;top:620px;font-size:8.0px;line-height:8.0px;color:#b5d785;font-weight:bold;letter-spacing:-0.456px;">+3</div>
<div class="t" style="left:420.35px;top:630px;font-size:9.8px;line-height:9.8px;color:#262626;font-weight:bold;letter-spacing:-0.434px;">Spain</div>
<div class="t" style="left:721.80px;top:631px;font-size:10.0px;line-height:10.0px;color:#7aba42;letter-spacing:-0.701px;">41%</div>
<div class="t" style="left:803.67px;top:632px;font-size:8.0px;line-height:8.0px;color:#468f30;font-weight:bold;letter-spacing:-0.339px;">+13</div>
<div class="t" style="left:408.14px;top:642px;font-size:9.8px;line-height:9.8px;color:#262626;font-weight:bold;letter-spacing:-0.369px;">Portugal</div>
<div class="t" style="left:721.80px;top:643px;font-size:10.0px;line-height:10.0px;color:#7aba42;letter-spacing:-0.701px;">41%</div>
<div class="t" style="left:814.00px;top:643px;font-size:8.0px;line-height:8.0px;color:#25601f;font-weight:bold;letter-spacing:-0.339px;">+20</div>
<div class="t" style="left:370.97px;top:654px;font-size:9.8px;line-height:9.8px;color:#262626;font-weight:bold;letter-spacing:-0.369px;">North Macedonia</div>
<div class="t" style="left:721.80px;top:655px;font-size:10.0px;line-height:10.0px;color:#7aba42;letter-spacing:-0.701px;">40%</div>
<div class="t" style="left:799.25px;top:655px;font-size:8.0px;line-height:8.0px;color:#7aba42;font-weight:bold;letter-spacing:-0.339px;">+10</div>
<div class="t" style="left:417.29px;top:666px;font-size:9.8px;line-height:9.8px;color:#262626;font-weight:bold;letter-spacing:-0.389px;">Serbia</div>
<div class="t" style="left:721.80px;top:667px;font-size:10.0px;line-height:10.0px;color:#7aba42;letter-spacing:-0.701px;">40%</div>
<div class="t" style="left:812.52px;top:667px;font-size:8.0px;line-height:8.0px;color:#25601f;font-weight:bold;letter-spacing:-0.339px;">+19</div>
<div class="t" style="left:415.25px;top:678px;font-size:9.8px;line-height:9.8px;color:#262626;font-weight:bold;letter-spacing:-0.418px;">France</div>
<div class="t" style="left:721.80px;top:679px;font-size:10.0px;line-height:10.0px;color:#b5d785;letter-spacing:-0.701px;">39%</div>
<div class="t" style="left:825.80px;top:679px;font-size:8.0px;line-height:8.0px;color:#25601f;font-weight:bold;letter-spacing:-0.339px;">+28</div>
<div class="t" style="left:392.34px;top:690px;font-size:9.8px;line-height:9.8px;color:#262626;font-weight:bold;letter-spacing:-0.368px;">Netherlands</div>
<div class="t" style="left:721.80px;top:690px;font-size:10.0px;line-height:10.0px;color:#b5d785;letter-spacing:-0.701px;">38%</div>
<div class="t" style="left:787.45px;top:691px;font-size:8.0px;line-height:8.0px;color:#b5d785;font-weight:bold;letter-spacing:-0.456px;">+2</div>
<div class="t" style="left:426.96px;top:702px;font-size:9.8px;line-height:9.8px;color:#262626;font-weight:bold;letter-spacing:-0.319px;">Italy</div>
<div class="t" style="left:721.80px;top:702px;font-size:10.0px;line-height:10.0px;color:#b5d785;letter-spacing:-0.701px;">36%</div>
<div class="t" style="left:822.85px;top:703px;font-size:8.0px;line-height:8.0px;color:#25601f;font-weight:bold;letter-spacing:-0.339px;">+26</div>
<div class="t" style="left:412.20px;top:713px;font-size:9.8px;line-height:9.8px;color:#262626;font-weight:bold;letter-spacing:-0.383px;">Albania</div>
<div class="t" style="left:721.80px;top:714px;font-size:10.0px;line-height:10.0px;color:#b5d785;letter-spacing:-0.701px;">36%</div>
<div class="t" style="left:793.35px;top:715px;font-size:8.0px;line-height:8.0px;color:#7aba42;font-weight:bold;letter-spacing:-0.456px;">+6</div>
<div class="t" style="left:389.81px;top:725px;font-size:9.8px;line-height:9.8px;color:#262626;font-weight:bold;letter-spacing:-0.429px;">Luxembourg</div>
<div class="t" style="left:721.80px;top:726px;font-size:10.0px;line-height:10.0px;color:#b5d785;letter-spacing:-0.701px;">35%</div>
<div class="t" style="left:806.62px;top:726px;font-size:8.0px;line-height:8.0px;color:#468f30;font-weight:bold;letter-spacing:-0.339px;">+15</div>
<div class="t" style="left:405.57px;top:737px;font-size:9.8px;line-height:9.8px;color:#262626;font-weight:bold;letter-spacing:-0.460px;">Germany</div>
<div class="t" style="left:721.80px;top:738px;font-size:10.0px;line-height:10.0px;color:#b5d785;letter-spacing:-0.701px;">35%</div>
<div class="t" style="left:790.40px;top:738px;font-size:8.0px;line-height:8.0px;color:#b5d785;font-weight:bold;letter-spacing:-0.456px;">+4</div>
<div class="t" style="left:411.70px;top:749px;font-size:9.8px;line-height:9.8px;color:#262626;font-weight:bold;letter-spacing:-0.467px;">Kosovo</div>
<div class="t" style="left:721.80px;top:750px;font-size:10.0px;line-height:10.0px;color:#efb4d6;letter-spacing:-0.701px;">34%</div>
<div class="t" style="left:787.45px;top:750px;font-size:8.0px;line-height:8.0px;color:#b5d785;font-weight:bold;letter-spacing:-0.456px;">+2</div>
<div class="t" style="left:413.73px;top:761px;font-size:9.8px;line-height:9.8px;color:#262626;font-weight:bold;letter-spacing:-0.366px;">Croatia</div>
<div class="t" style="left:721.80px;top:762px;font-size:10.0px;line-height:10.0px;color:#efb4d6;letter-spacing:-0.701px;">32%</div>
<div class="t" style="left:800.73px;top:762px;font-size:8.0px;line-height:8.0px;color:#7aba42;font-weight:bold;letter-spacing:-0.328px;">+11</div>
<div class="t" style="left:374.55px;top:773px;font-size:9.8px;line-height:9.8px;color:#262626;font-weight:bold;letter-spacing:-0.378px;">United Kingdom</div>
<div class="t" style="left:721.80px;top:774px;font-size:10.0px;line-height:10.0px;color:#efb4d6;letter-spacing:-0.701px;">31%</div>
<div class="t" style="left:805.15px;top:774px;font-size:8.0px;line-height:8.0px;color:#468f30;font-weight:bold;letter-spacing:-0.339px;">+14</div>
<div class="t" style="left:404.58px;top:785px;font-size:9.8px;line-height:9.8px;color:#262626;font-weight:bold;letter-spacing:-0.354px;">Lithuania</div>
<div class="t" style="left:721.80px;top:785px;font-size:10.0px;line-height:10.0px;color:#dd72ab;letter-spacing:-0.701px;">28%</div>
<div class="t" style="left:793.35px;top:786px;font-size:8.0px;line-height:8.0px;color:#7aba42;font-weight:bold;letter-spacing:-0.456px;">+6</div>
<div class="t" style="left:418.82px;top:796px;font-size:9.8px;line-height:9.8px;color:#262626;font-weight:bold;letter-spacing:-0.368px;">Latvia</div>
<div class="t" style="left:721.80px;top:797px;font-size:10.0px;line-height:10.0px;color:#dd72ab;letter-spacing:-0.701px;">28%</div>
<div class="t" style="left:796.30px;top:798px;font-size:8.0px;line-height:8.0px;color:#7aba42;font-weight:bold;letter-spacing:-0.456px;">+8</div>
<div class="t" style="left:386.24px;top:808px;font-size:9.8px;line-height:9.8px;color:#262626;font-weight:bold;letter-spacing:-0.342px;">Liechtenstein</div>
<div class="t" style="left:721.80px;top:809px;font-size:10.0px;line-height:10.0px;color:#dd72ab;letter-spacing:-0.701px;">28%</div>
<div class="t" style="left:808.10px;top:810px;font-size:8.0px;line-height:8.0px;color:#468f30;font-weight:bold;letter-spacing:-0.339px;">+16</div>
<div class="t" style="left:415.26px;top:820px;font-size:9.8px;line-height:9.8px;color:#262626;font-weight:bold;letter-spacing:-0.348px;">Ireland</div>
<div class="t" style="left:721.80px;top:821px;font-size:10.0px;line-height:10.0px;color:#dd72ab;letter-spacing:-0.701px;">28%</div>
<div class="t" style="left:805.15px;top:821px;font-size:8.0px;line-height:8.0px;color:#468f30;font-weight:bold;letter-spacing:-0.339px;">+14</div>
<div class="t" style="left:414.75px;top:832px;font-size:9.8px;line-height:9.8px;color:#262626;font-weight:bold;letter-spacing:-0.425px;">Poland</div>
<div class="t" style="left:721.80px;top:833px;font-size:10.0px;line-height:10.0px;color:#dd72ab;letter-spacing:-0.701px;">28%</div>
<div class="t" style="left:793.35px;top:833px;font-size:8.0px;line-height:8.0px;color:#7aba42;font-weight:bold;letter-spacing:-0.456px;">+6</div>
<div class="t" style="left:392.87px;top:844px;font-size:9.8px;line-height:9.8px;color:#262626;font-weight:bold;letter-spacing:-0.405px;">Montenegro</div>
<div class="t" style="left:721.80px;top:845px;font-size:10.0px;line-height:10.0px;color:#dd72ab;letter-spacing:-0.701px;">27%</div>
<div class="t" style="left:799.25px;top:845px;font-size:8.0px;line-height:8.0px;color:#7aba42;font-weight:bold;letter-spacing:-0.339px;">+10</div>
<div class="t" style="left:412.20px;top:856px;font-size:9.8px;line-height:9.8px;color:#262626;font-weight:bold;letter-spacing:-0.383px;">Estonia</div>
<div class="t" style="left:721.80px;top:857px;font-size:10.0px;line-height:10.0px;color:#dd72ab;letter-spacing:-0.701px;">27%</div>
<div class="t" style="left:799.25px;top:857px;font-size:8.0px;line-height:8.0px;color:#7aba42;font-weight:bold;letter-spacing:-0.339px;">+10</div>
<div class="t" style="left:408.64px;top:868px;font-size:9.8px;line-height:9.8px;color:#262626;font-weight:bold;letter-spacing:-0.364px;">Bulgaria</div>
<div class="t" style="left:721.80px;top:868px;font-size:10.0px;line-height:10.0px;color:#dd72ab;letter-spacing:-0.701px;">25%</div>
<div class="t" style="left:338.88px;top:880px;font-size:9.8px;line-height:9.8px;color:#262626;font-weight:bold;letter-spacing:-0.352px;">Bosnia and Herzegovina</div>
<div class="t" style="left:721.80px;top:880px;font-size:10.0px;line-height:10.0px;color:#dd72ab;letter-spacing:-0.701px;">25%</div>
<div class="t" style="left:785.98px;top:881px;font-size:8.0px;line-height:8.0px;color:#b5d785;font-weight:bold;letter-spacing:-0.456px;">+1</div>
<div class="t" style="left:407.61px;top:891px;font-size:9.8px;line-height:9.8px;color:#262626;font-weight:bold;letter-spacing:-0.374px;">Slovenia</div>
<div class="t" style="left:721.80px;top:892px;font-size:10.0px;line-height:10.0px;color:#c8177f;letter-spacing:-0.701px;">22%</div>
<div class="t" style="left:799.25px;top:893px;font-size:8.0px;line-height:8.0px;color:#7aba42;font-weight:bold;letter-spacing:-0.339px;">+10</div>
<div class="t" style="left:410.67px;top:903px;font-size:9.8px;line-height:9.8px;color:#262626;font-weight:bold;letter-spacing:-0.401px;">Czechia</div>
<div class="t" style="left:721.80px;top:904px;font-size:10.0px;line-height:10.0px;color:#c8177f;letter-spacing:-0.701px;">22%</div>
<div class="t" style="left:796.30px;top:904px;font-size:8.0px;line-height:8.0px;color:#7aba42;font-weight:bold;letter-spacing:-0.456px;">+8</div>
<div class="t" style="left:414.22px;top:915px;font-size:9.8px;line-height:9.8px;color:#262626;font-weight:bold;letter-spacing:-0.432px;">Greece</div>
<div class="t" style="left:721.80px;top:916px;font-size:10.0px;line-height:10.0px;color:#c8177f;letter-spacing:-0.701px;">21%</div>
<div class="t" style="left:802.20px;top:916px;font-size:8.0px;line-height:8.0px;color:#468f30;font-weight:bold;letter-spacing:-0.339px;">+12</div>
<div class="t" style="left:408.11px;top:927px;font-size:9.8px;line-height:9.8px;color:#262626;font-weight:bold;letter-spacing:-0.369px;">Slovakia</div>
<div class="t" style="left:721.80px;top:928px;font-size:10.0px;line-height:10.0px;color:#c8177f;letter-spacing:-0.701px;">21%</div>
<div class="t" style="left:788.92px;top:928px;font-size:8.0px;line-height:8.0px;color:#b5d785;font-weight:bold;letter-spacing:-0.456px;">+3</div>
<div class="t" style="left:406.60px;top:939px;font-size:9.8px;line-height:9.8px;color:#262626;font-weight:bold;letter-spacing:-0.448px;">Romania</div>
<div class="t" style="left:721.80px;top:940px;font-size:10.0px;line-height:10.0px;color:#c8177f;letter-spacing:-0.701px;">20%</div>
<div class="t" style="left:799.25px;top:940px;font-size:8.0px;line-height:8.0px;color:#7aba42;font-weight:bold;letter-spacing:-0.339px;">+10</div>
<div class="t" style="left:415.93px;top:951px;font-size:9.8px;line-height:9.8px;color:#262626;font-weight:bold;letter-spacing:-0.408px;">Turkey</div>
<div class="t" style="left:721.80px;top:952px;font-size:10.0px;line-height:10.0px;color:#8b1057;letter-spacing:-0.701px;">17%</div>
<div class="t" style="left:803.67px;top:952px;font-size:8.0px;line-height:8.0px;color:#468f30;font-weight:bold;letter-spacing:-0.339px;">+13</div>
<div class="t" style="left:413.73px;top:963px;font-size:9.8px;line-height:9.8px;color:#262626;font-weight:bold;letter-spacing:-0.439px;">Cyprus</div>
<div class="t" style="left:721.80px;top:963px;font-size:10.0px;line-height:10.0px;color:#651049;letter-spacing:-0.701px;">14%</div>
<div class="t" style="left:788.92px;top:964px;font-size:8.0px;line-height:8.0px;color:#b5d785;font-weight:bold;letter-spacing:-0.456px;">+3</div>
<div class="t" style="left:421.88px;top:974px;font-size:9.8px;line-height:9.8px;color:#262626;font-weight:bold;letter-spacing:-0.407px;">Malta</div>
<div class="t" style="left:721.80px;top:975px;font-size:10.0px;line-height:10.0px;color:#651049;letter-spacing:-0.701px;">13%</div>
<div class="t" style="left:790.40px;top:976px;font-size:8.0px;line-height:8.0px;color:#b5d785;font-weight:bold;letter-spacing:-0.456px;">+4</div>
<div class="t" style="left:408.13px;top:986px;font-size:9.8px;line-height:9.8px;color:#262626;font-weight:bold;letter-spacing:-0.431px;">Hungary</div>
<div class="t" style="left:721.80px;top:987px;font-size:10.0px;line-height:10.0px;color:#651049;letter-spacing:-0.701px;">13%</div>
<div class="t" style="left:790.40px;top:988px;font-size:8.0px;line-height:8.0px;color:#b5d785;font-weight:bold;letter-spacing:-0.456px;">+4</div>
<div class="t" style="left:394.38px;top:998px;font-size:9.8px;line-height:9.8px;color:#262626;font-weight:bold;letter-spacing:-0.354px;">Switzerland</div>
<div class="t" style="left:770.30px;top:869px;font-size:8.0px;line-height:8.0px;color:#6e104c;font-weight:bold;">-1</div>
<div class="t" style="left:781.30px;top:520px;font-size:9.8px;line-height:9.8px;color:#262626;letter-spacing:0.145px;">Difference 2003/1</div>
<div class="t" style="left:861.60px;top:521px;font-size:5.2px;line-height:5.2px;color:#262626;">st</div>
<div class="t" style="left:868.50px;top:520px;font-size:9.8px;line-height:9.8px;color:#262626;letter-spacing:0.409px;">datapoint</div>
<div class="t" style="left:781.30px;top:532px;font-size:9.8px;line-height:9.8px;color:#262626;letter-spacing:0.120px;">and 2021 in percent points</div>
<div class="t" style="left:752.80px;top:463px;font-size:9.6px;line-height:9.6px;color:#262626;letter-spacing:0.248px;"><b>The Nordic Regions</b> are performing really well with <b>4</b></div>
<div class="t" style="left:752.80px;top:475px;font-size:9.6px;line-height:9.6px;color:#262626;letter-spacing:0.221px;"><b>countries at the top.</b> Moreover, all of these 4 countries</div>
<div class="t" style="left:752.80px;top:487px;font-size:9.6px;line-height:9.6px;color:#262626;letter-spacing:0.231px;">have a percentage higher <b>than 45%</b> in <b>2021.</b></div>
<div class="t" style="left:873.80px;top:569px;font-size:9.6px;line-height:9.6px;color:#262626;letter-spacing:0.301px;"><b>The Netherlands</b> had a lot of potential back in</div>
<div class="t" style="left:873.80px;top:580px;font-size:9.6px;line-height:9.6px;color:#262626;letter-spacing:0.263px;"><b>2003</b> with their <b>top 5</b> position. Unfortunately,</div>
<div class="t" style="left:873.80px;top:592px;font-size:9.6px;line-height:9.6px;color:#262626;letter-spacing:0.222px;">they <b>didn't progress</b> and have still a</div>
<div class="t" style="left:873.80px;top:604px;font-size:9.6px;line-height:9.6px;color:#262626;letter-spacing:0.387px;">percentage <b>lower than 40.</b></div>
<div class="t" style="left:912.30px;top:721px;font-size:9.6px;line-height:9.6px;color:#262626;letter-spacing:0.310px;"><b>France</b> and <b>Italy</b> are on the</div>
<div class="t" style="left:912.30px;top:733px;font-size:9.6px;line-height:9.6px;color:#262626;letter-spacing:0.312px;">rise and made the <b>most</b></div>
<div class="t" style="left:912.30px;top:745px;font-size:9.6px;line-height:9.6px;color:#262626;letter-spacing:0.113px;"><b>progress</b> since 2003.</div>
<div class="t" style="left:867.40px;top:802px;font-size:9.6px;line-height:9.6px;color:#262626;letter-spacing:0.207px;"><b>Germany</b> was <b>on the rise from 2013 onwards</b></div>
<div class="t" style="left:867.40px;top:814px;font-size:9.6px;line-height:9.6px;color:#262626;letter-spacing:0.295px;">but then the percentage <b>decreased by 5.4</b> in</div>
<div class="t" style="left:867.40px;top:826px;font-size:9.6px;line-height:9.6px;color:#262626;letter-spacing:0.267px;"><b>2017</b>. That year the <b>far-right</b> AfD <b>arrived</b> in</div>
<div class="t" style="left:867.40px;top:838px;font-size:9.6px;line-height:9.6px;color:#262626;letter-spacing:0.263px;">the Bundestag.</div>
<div class="t" style="left:883.50px;top:985px;font-size:9.6px;line-height:9.6px;color:#262626;letter-spacing:0.174px;"><b>Bulgaria</b> is the <b>only country</b></div>
<div class="t" style="left:883.50px;top:997px;font-size:9.6px;line-height:9.6px;color:#262626;letter-spacing:0.306px;">that has <b>fewer seats</b> held by</div>
<div class="t" style="left:883.50px;top:1009px;font-size:9.6px;line-height:9.6px;color:#262626;letter-spacing:0.156px;">women in <b>2021 than in 2003</b>.</div>
<div class="t" style="left:499.80px;top:1027px;font-size:9.6px;line-height:9.6px;color:#262626;letter-spacing:0.224px;">In <b>2006 Turkey</b> hit rock</div>
<div class="t" style="left:499.80px;top:1040px;font-size:9.6px;line-height:9.6px;color:#262626;letter-spacing:0.238px;">bottom: only <b>2.6%</b> of the</div>
<div class="t" style="left:499.80px;top:1052px;font-size:9.6px;line-height:9.6px;color:#262626;letter-spacing:0.236px;">seats were held by women.</div>
<div class="t" style="left:308.50px;top:1073px;font-size:8.2px;line-height:8.2px;color:#7e7e7e;letter-spacing:0.062px;">Source: Eurostat</div>
<div class="t" style="left:770.30px;top:1070px;font-size:8.4px;line-height:8.4px;color:#7e7e7e;letter-spacing:0.178px;">Created by Dieuwertje van Dijk with Datylon for Illustrator plug-in and Adobe Illustrator</div>
<div class="b" style="left:1447.00px;top:127.00px;width:553.00px;height:998.00px;background:#ffffff;"></div>
<div class="b" style="left:1447.00px;top:127.00px;width:17.00px;height:998.00px;background:#f4f4f4;"></div>
<svg class="b" style="left:1449px;top:638px" width="12" height="16"><path d="M3.5 3 L8.5 8 L3.5 13" fill="none" stroke="#222" stroke-width="1.5"/></svg>
<svg class="b" style="left:1487.5px;top:150.5px" width="23" height="23"><rect x="0.00" y="0.00" width="5" height="3.5" fill="#1463ff"/><rect x="5.80" y="0.00" width="5" height="3.5" fill="#1463ff"/><rect x="11.60" y="0.00" width="5" height="3.5" fill="#1463ff"/><rect x="17.40" y="0.00" width="5" height="3.5" fill="#1463ff"/><rect x="0.00" y="4.55" width="5" height="3.5" fill="#1463ff"/><rect x="5.80" y="4.55" width="5" height="3.5" fill="#1463ff"/><rect x="11.60" y="4.55" width="5" height="3.5" fill="#2f76ff"/><rect x="17.40" y="4.55" width="5" height="3.5" fill="#5b93ff"/><rect x="0.00" y="9.10" width="5" height="3.5" fill="#1463ff"/><rect x="5.80" y="9.10" width="5" height="3.5" fill="#2f76ff"/><rect x="11.60" y="9.10" width="5" height="3.5" fill="#5b93ff"/><rect x="17.40" y="9.10" width="5" height="3.5" fill="#8fb5ff"/><rect x="0.00" y="13.65" width="5" height="3.5" fill="#2f76ff"/><rect x="5.80" y="13.65" width="5" height="3.5" fill="#5b93ff"/><rect x="11.60" y="13.65" width="5" height="3.5" fill="#8fb5ff"/><rect x="17.40" y="13.65" width="5" height="3.5" fill="#b3cdff"/><rect x="0.00" y="18.20" width="5" height="3.5" fill="#5b93ff"/><rect x="5.80" y="18.20" width="5" height="3.5" fill="#8fb5ff"/><rect x="11.60" y="18.20" width="5" height="3.5" fill="#b3cdff"/><rect x="17.40" y="18.20" width="5" height="3.5" fill="#cfdfff"/></svg>
<div class="t" style="left:1524.00px;top:153px;font-size:18.2px;line-height:18.2px;color:#111;font-weight:bold;letter-spacing:0.021px;">Heatmap</div>
<div class="b" style="left:1767.00px;top:146.00px;width:128.00px;height:31.00px;background:#efefef;border-radius:6px;"></div>
<div class="b" style="left:1908.00px;top:146.00px;width:67.00px;height:31.00px;background:#efefef;border-radius:6px;"></div>
<div class="t" style="left:1781.50px;top:153px;font-size:18.2px;line-height:18.2px;color:#1c1c1c;letter-spacing:0.354px;">Select chart</div>
<div class="t" style="left:1923.00px;top:153px;font-size:18.2px;line-height:18.2px;color:#1c1c1c;letter-spacing:0.356px;">Help</div>
<div class="b" style="left:1464.00px;top:196.00px;width:536.00px;height:1.50px;background:#cfcfcf;"></div>
<div class="b" style="left:1821.00px;top:198.00px;width:179.00px;height:55.00px;background:#eef3fd;"></div>
<div class="b" style="left:1464.00px;top:253.00px;width:536.00px;height:1.00px;background:#dcdcdc;"></div>
<div class="b" style="left:1821.00px;top:251.50px;width:179.00px;height:2.50px;background:#1a5fe0;"></div>
<div class="t" style="left:1522.00px;top:218px;font-size:18.2px;line-height:18.2px;color:#1c1c1c;letter-spacing:0.047px;">Binding</div>
<div class="t" style="left:1687.00px;top:218px;font-size:18.2px;line-height:18.2px;color:#1c1c1c;letter-spacing:0.224px;">Formatting</div>
<div class="t" style="left:1881.50px;top:218px;font-size:18.2px;line-height:18.2px;color:#1a5fe0;font-weight:bold;letter-spacing:-0.612px;">Styling</div>
<svg class="b" style="left:1482px;top:275px" width="16" height="20"><path d="M11.5 3 L4.5 10 L11.5 17" fill="none" stroke="#111" stroke-width="2.6" stroke-linejoin="miter"/></svg>
<div class="t" style="left:1703.25px;top:274px;font-size:20.0px;line-height:20.0px;color:#1c1c1c;letter-spacing:0.257px;">Y Axis</div>
<div class="b" style="left:1464.00px;top:309.00px;width:536.00px;height:1.00px;background:#d4d4d4;"></div>
<div class="b" style="left:1464.00px;top:310.00px;width:536.00px;height:45.00px;background:#f5f5f5;"></div>
<div class="b" style="left:1464.00px;top:355.00px;width:536.00px;height:1.00px;background:#dcdcdc;"></div>
<div class="t" style="left:1483.00px;top:326px;font-size:13.0px;line-height:13.0px;color:#444;font-weight:bold;letter-spacing:-0.200px;">LABELS</div>
<svg class="b" style="left:1944.5px;top:323.0px" width="24" height="18" viewBox="0 0 24 18"><path d="M1.5 9 C5 3.2 8.5 2 12 2 C15.5 2 19 3.2 22.5 9 C19 14.8 15.5 16 12 16 C8.500 16 5 14.8 1.500 9 Z" fill="none" stroke="#222" stroke-width="1.5"/><circle cx="12" cy="9" r="4.3" fill="none" stroke="#222" stroke-width="1.5"/><circle cx="12.8" cy="8.2" r="1.7" fill="#222"/></svg>
<div class="t" style="left:1483.00px;top:372px;font-size:18.2px;line-height:18.2px;color:#1c1c1c;letter-spacing:0.174px;">Horizontal</div>
<div class="t" style="left:1483.00px;top:392px;font-size:18.2px;line-height:18.2px;color:#1c1c1c;letter-spacing:0.196px;">Alignment</div>
<div class="t" style="left:1483.00px;top:429px;font-size:18.2px;line-height:18.2px;color:#1c1c1c;letter-spacing:0.255px;">Vertical Alignment</div>
<div class="t" style="left:1483.00px;top:474px;font-size:18.2px;line-height:18.2px;color:#1c1c1c;letter-spacing:0.205px;">Horizontal Offset</div>
<div class="t" style="left:1483.00px;top:518px;font-size:18.2px;line-height:18.2px;color:#1c1c1c;letter-spacing:0.253px;">Vertical Offset</div>
<div class="t" style="left:1483.00px;top:562px;font-size:18.2px;line-height:18.2px;color:#1c1c1c;letter-spacing:0.030px;">Rotation</div>
<div class="t" style="left:1483.00px;top:606px;font-size:18.2px;line-height:18.2px;color:#1c1c1c;letter-spacing:-0.105px;">Prefix</div>
<div class="t" style="left:1483.00px;top:650px;font-size:18.2px;line-height:18.2px;color:#1c1c1c;letter-spacing:0.062px;">Suffix</div>
<div class="b" style="left:1657.00px;top:470.20px;width:324.00px;height:31.00px;background:#fff;border:1.5px solid #c3c3c3;border-radius:5.5px;box-shadow:inset 0 1px 1.5px rgba(0,0,0,0.07);"></div>
<div class="t" style="left:1665.00px;top:478px;font-size:18.2px;line-height:18.2px;color:#1c1c1c;letter-spacing:0.28px;">10.0px</div>
<div class="b" style="left:1657.00px;top:514.20px;width:324.00px;height:31.00px;background:#fff;border:1.5px solid #c3c3c3;border-radius:5.5px;box-shadow:inset 0 1px 1.5px rgba(0,0,0,0.07);"></div>
<div class="t" style="left:1665.00px;top:522px;font-size:18.2px;line-height:18.2px;color:#1c1c1c;letter-spacing:0.28px;">0.0px</div>
<div class="b" style="left:1657.00px;top:558.20px;width:324.00px;height:31.00px;background:#fff;border:1.5px solid #c3c3c3;border-radius:5.5px;box-shadow:inset 0 1px 1.5px rgba(0,0,0,0.07);"></div>
<div class="t" style="left:1665.00px;top:566px;font-size:18.2px;line-height:18.2px;color:#1c1c1c;letter-spacing:0.28px;">0°</div>
<div class="b" style="left:1657.00px;top:602.20px;width:324.00px;height:31.00px;background:#fff;border:1.5px solid #c3c3c3;border-radius:5.5px;box-shadow:inset 0 1px 1.5px rgba(0,0,0,0.07);"></div>
<div class="b" style="left:1657.00px;top:646.20px;width:324.00px;height:31.00px;background:#fff;border:1.5px solid #c3c3c3;border-radius:5.5px;box-shadow:inset 0 1px 1.5px rgba(0,0,0,0.07);"></div>
<div class="b" style="left:1657.00px;top:369.00px;width:47.00px;height:31.00px;background:#efefef;border-radius:5px;"></div>
<svg class="b" style="left:1668.5px;top:372.5px" width="24" height="24" viewBox="0 0 24 24" fill="none" stroke="#222" stroke-width="1.4"><rect x="2.800" y="10" width="4" height="4" rx="0.8"/><path d="M6.800 12 H21.500 M15.300 6 L21.500 12 L15.300 18"/></svg>
<div class="b" style="left:1712.00px;top:369.00px;width:47.00px;height:31.00px;background:#efefef;border-radius:5px;"></div>
<svg class="b" style="left:1723.5px;top:372.5px" width="24" height="24" viewBox="0 0 24 24" fill="none" stroke="#222" stroke-width="1.4"><circle cx="12" cy="12" r="2"/><path d="M3 12 H10 M14 12 H21 M8.800 6 L2.800 12 L8.800 18 M15.200 6 L21.200 12 L15.200 18"/></svg>
<div class="b" style="left:1768.00px;top:369.00px;width:47.00px;height:31.00px;background:#f0f0f0;border:1.2px solid #8e8e8e;border-radius:5px;"></div>
<svg class="b" style="left:1779.5px;top:372.5px" width="24" height="24" viewBox="0 0 24 24" fill="none" stroke="#222" stroke-width="1.4"><rect x="17.200" y="10" width="4" height="4" rx="0.8"/><path d="M17.200 12 H2.500 M8.700 6 L2.500 12 L8.700 18"/></svg>
<div class="b" style="left:1657.00px;top:425.00px;width:47.00px;height:31.00px;background:#efefef;border-radius:5px;"></div>
<svg class="b" style="left:1668.5px;top:428.5px" width="24" height="24" viewBox="0 0 24 24" fill="none" stroke="#222" stroke-width="1.4"><rect x="10" y="2.800" width="4" height="4" rx="0.8"/><path d="M12 6.800 V21.500 M6 15.300 L12 21.500 L18 15.300"/></svg>
<div class="b" style="left:1712.00px;top:425.00px;width:47.00px;height:31.00px;background:#f0f0f0;border:1.2px solid #8e8e8e;border-radius:5px;"></div>
<svg class="b" style="left:1723.5px;top:428.5px" width="24" height="24" viewBox="0 0 24 24" fill="none" stroke="#222" stroke-width="1.4"><circle cx="12" cy="12" r="2"/><path d="M12 3 V10 M12 14 V21 M6 8.800 L12 2.800 L18 8.800 M6 15.200 L12 21.200 L18 15.200"/></svg>
<div class="b" style="left:1768.00px;top:425.00px;width:47.00px;height:31.00px;background:#efefef;border-radius:5px;"></div>
<svg class="b" style="left:1779.5px;top:428.5px" width="24" height="24" viewBox="0 0 24 24" fill="none" stroke="#222" stroke-width="1.4"><rect x="10" y="17.200" width="4" height="4" rx="0.8"/><path d="M12 17.200 V2.500 M6 8.700 L12 2.500 L18 8.700"/></svg>
<div class="t" style="left:1483.00px;top:710px;font-size:13.0px;line-height:13.0px;color:#444;font-weight:bold;letter-spacing:0.084px;">CHARACTER</div>
<div class="b" style="left:1585.00px;top:716.50px;width:400.00px;height:1.00px;background:#e2e2e2;"></div>
<div class="t" style="left:1483.00px;top:757px;font-size:18.2px;line-height:18.2px;color:#1c1c1c;letter-spacing:0.092px;">Typeface</div>
<div class="b" style="left:1657.00px;top:753.00px;width:324.00px;height:31.00px;background:#fff;border:1.5px solid #c3c3c3;border-radius:5.5px;box-shadow:inset 0 1px 1.5px rgba(0,0,0,0.07);"></div>
<div class="t" style="left:1665.00px;top:761px;font-size:18.2px;line-height:18.2px;color:#1c1c1c;letter-spacing:0.28px;">Quicksand Bold</div>
<div class="b" style="left:1948.00px;top:754.20px;width:30.80px;height:28.60px;background:#f0f0f0;border-radius:0 4px 4px 0;"></div>
<svg class="b" style="left:1958px;top:763px" width="12" height="10"><path d="M1 1.2 H11 L6 9 Z" fill="#111"/></svg>
<div class="b" style="left:1657.00px;top:797.20px;width:63.00px;height:31.00px;background:#fff;border:1.5px solid #c3c3c3;border-radius:5.5px;"></div>
<div class="b" style="left:1660.00px;top:801.00px;width:57.00px;height:25.00px;background:#222222;border-radius:4px;"></div>
<div class="b" style="left:1736.00px;top:797.20px;width:197.00px;height:31.00px;background:#fff;border:1.5px solid #c3c3c3;border-radius:5.5px;box-shadow:inset 0 1px 1.5px rgba(0,0,0,0.07);"></div>
<div class="t" style="left:1744.00px;top:805px;font-size:18.2px;line-height:18.2px;color:#1c1c1c;letter-spacing:0.28px;">10.0pt</div>
<div class="b" style="left:1942.00px;top:798.00px;width:47.00px;height:31.00px;background:#efefef;border-radius:5px;"></div>
<svg class="b" style="left:1955.5px;top:802px" width="20" height="20" viewBox="-10 -10 20 20" fill="none" stroke="#222" stroke-width="1.3"><path d="M8.43 -1.71 L8.43 1.71 L5.92 2.43 L5.91 2.47 L7.17 4.75 L4.75 7.17 L2.47 5.91 L2.43 5.92 L1.71 8.43 L-1.71 8.43 L-2.43 5.92 L-2.47 5.91 L-4.75 7.17 L-7.17 4.75 L-5.91 2.47 L-5.92 2.43 L-8.43 1.71 L-8.43 -1.71 L-5.92 -2.43 L-5.91 -2.47 L-7.17 -4.75 L-4.75 -7.17 L-2.47 -5.91 L-2.43 -5.92 L-1.71 -8.43 L1.71 -8.43 L2.43 -5.92 L2.47 -5.91 L4.75 -7.17 L7.17 -4.75 L5.91 -2.47 L5.92 -2.43 Z" stroke-linejoin="round"/><circle cx="0" cy="0" r="3.1"/></svg>
<div class="t" style="left:1667.75px;top:836px;font-size:18.2px;line-height:18.2px;color:#1c1c1c;letter-spacing:-0.498px;">Color</div>
<div class="t" style="left:1817.75px;top:836px;font-size:18.2px;line-height:18.2px;color:#1c1c1c;letter-spacing:-0.969px;">Size</div>
<div class="t" style="left:1483.00px;top:872px;font-size:18.2px;line-height:18.2px;color:#1c1c1c;letter-spacing:0.055px;">Tracking</div>
<div class="b" style="left:1657.00px;top:868.20px;width:324.00px;height:31.00px;background:#fff;border:1.5px solid #c3c3c3;border-radius:5.5px;box-shadow:inset 0 1px 1.5px rgba(0,0,0,0.07);"></div>
<div class="t" style="left:1665.00px;top:876px;font-size:18.2px;line-height:18.2px;color:#1c1c1c;letter-spacing:0.28px;">-0.5px</div>
<div class="t" style="left:1483.00px;top:931px;font-size:13.0px;line-height:13.0px;color:#444;font-weight:bold;letter-spacing:0.085px;">PARAGRAPH</div>
<div class="b" style="left:1587.00px;top:937.50px;width:345.00px;height:1.00px;background:#e2e2e2;"></div>
<svg class="b" style="left:1952.5px;top:928.0px" width="24" height="18" viewBox="0 0 24 18"><path d="M1.5 9 C5 3.2 8.5 2 12 2 C15.5 2 19 3.2 22.5 9 C19 14.8 15.5 16 12 16 C8.500 16 5 14.8 1.500 9 Z" fill="none" stroke="#222" stroke-width="1.5"/><circle cx="12" cy="9" r="4.3" fill="none" stroke="#222" stroke-width="1.5"/><circle cx="12.8" cy="8.2" r="1.7" fill="#222"/></svg>
<div class="t" style="left:1483.00px;top:978px;font-size:18.2px;line-height:18.2px;color:#1c1c1c;letter-spacing:-0.006px;">Width</div>
<div class="b" style="left:1657.00px;top:974.20px;width:324.00px;height:31.00px;background:#fff;border:1.5px solid #c3c3c3;border-radius:5.5px;box-shadow:inset 0 1px 1.5px rgba(0,0,0,0.07);"></div>
<div class="t" style="left:1665.00px;top:982px;font-size:18.2px;line-height:18.2px;color:#1c1c1c;letter-spacing:0.28px;">120.0px</div>
<div class="t" style="left:1483.00px;top:1022px;font-size:18.2px;line-height:18.2px;color:#1c1c1c;letter-spacing:0.169px;">Horizontal Align</div>
<div class="b" style="left:1657.00px;top:1018.00px;width:47.00px;height:31.00px;background:#efefef;border-radius:5px;"></div>
<svg class="b" style="left:1668.5px;top:1021.5px" width="24" height="24" viewBox="0 0 24 24" fill="none" stroke="#222" stroke-width="1.4"><path d="M5 5.500 H19 M5 9.800 H14.500 M5 14.200 H19 M5 18.500 H14.500" stroke-width="1.3"/></svg>
<div class="b" style="left:1712.00px;top:1018.00px;width:47.00px;height:31.00px;background:#efefef;border-radius:5px;"></div>
<svg class="b" style="left:1723.5px;top:1021.5px" width="24" height="24" viewBox="0 0 24 24" fill="none" stroke="#222" stroke-width="1.4"><path d="M5 5.500 H19 M7.300 9.800 H16.700 M5 14.200 H19 M7.300 18.500 H16.700" stroke-width="1.3"/></svg>
<div class="b" style="left:1768.00px;top:1018.00px;width:47.00px;height:31.00px;background:#f0f0f0;border:1.2px solid #8e8e8e;border-radius:5px;"></div>
<svg class="b" style="left:1779.5px;top:1021.5px" width="24" height="24" viewBox="0 0 24 24" fill="none" stroke="#222" stroke-width="1.4"><path d="M5 5.500 H19 M9.500 9.800 H19 M5 14.200 H19 M9.500 18.500 H19" stroke-width="1.3"/></svg>
<div class="t" style="left:1483.00px;top:1066px;font-size:18.2px;line-height:18.2px;color:#1c1c1c;letter-spacing:0.487px;">Justify</div>
<div class="b" style="left:1657.00px;top:1066.00px;width:18.50px;height:18.50px;background:#d9d9d9;border-radius:4.5px;"></div>
<div class="t" style="left:1483.00px;top:1103px;font-size:18.2px;line-height:18.2px;color:#1c1c1c;letter-spacing:-0.130px;">Leading</div>
<div class="b" style="left:1657.00px;top:1099.20px;width:324.00px;height:31.00px;background:#fff;border:1.5px solid #c3c3c3;border-radius:5.5px;box-shadow:inset 0 1px 1.5px rgba(0,0,0,0.07);"></div>
<div class="t" style="left:1665.00px;top:1107px;font-size:18.2px;line-height:18.2px;color:#1c1c1c;letter-spacing:0.28px;">1.10</div>
<div class="b" style="left:1447.00px;top:1113.00px;width:553.00px;height:12.00px;background:linear-gradient(180deg,rgba(255,255,255,0),rgba(255,255,255,0.55));"></div>
</div></body></html>
